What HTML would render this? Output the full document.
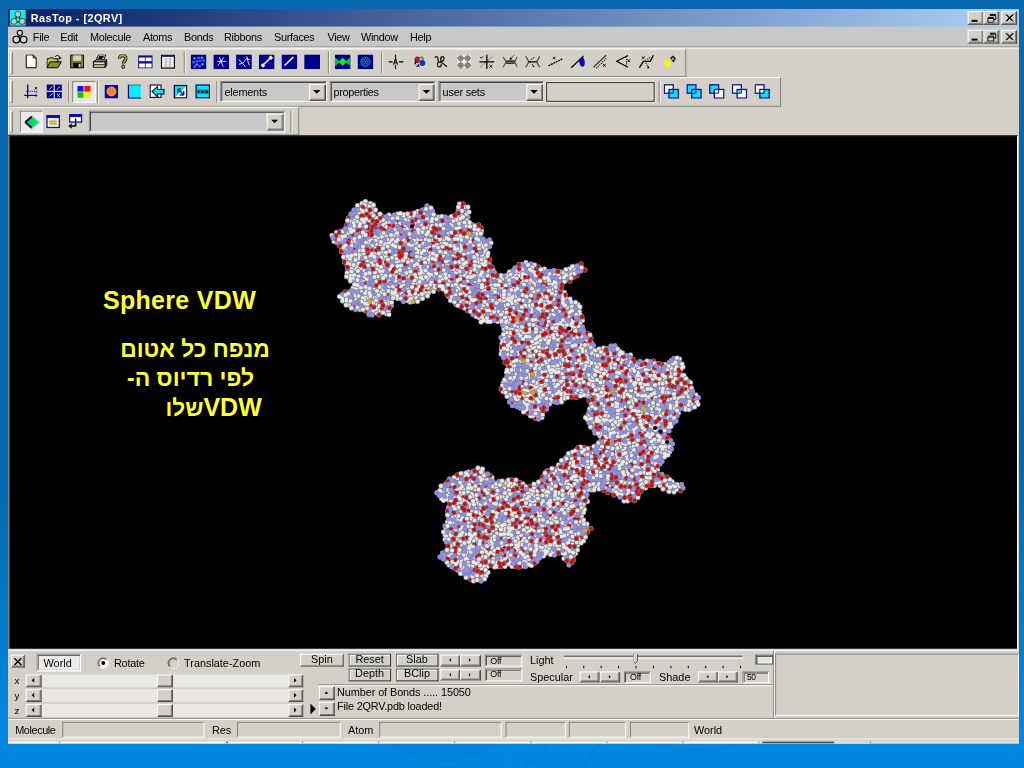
<!DOCTYPE html>
<html><head><meta charset="utf-8"><title>RasTop</title>
<style>
*{box-sizing:border-box;margin:0;padding:0}
html,body{width:1024px;height:768px;overflow:hidden}
body{position:relative;font-family:"Liberation Sans",sans-serif;font-size:11px;color:#000;
background:linear-gradient(to bottom,#0868b0 0px,#0468b0 460px,#0078c8 610px,#0085dc 700px,#0088e0 744px,#0088e0 768px)}
#win,#win *,.pg{position:absolute}
#win{left:8px;top:9px;width:1024px;height:744.2px;background:#d4d0c8;transform-origin:0 0;transform:scale(0.9873);overflow:hidden}
#win span{white-space:nowrap;font-size:11px;line-height:13px}
.cb{background:#d4d0c8;border:1px solid;border-color:#fff #404040 #404040 #fff;box-shadow:inset -1px -1px 0 #808080}
.tb{border:1px solid;border-color:#fff #808080 #808080 #fff}
.grip{border:1px solid;border-color:#fff #808080 #808080 #fff}
.sep{border-left:1px solid #808080;border-right:1px solid #fff}
.combo{background:#c8c8c8;border:1px solid;border-color:#808080 #fff #fff #808080;box-shadow:inset 1px 1px 0 #404040,inset -1px -1px 0 #d4d0c8}
.btn{background:#d4d0c8;border:1px solid;border-color:#fff #404040 #404040 #fff;box-shadow:inset -1px -1px 0 #808080}
.fbtn{background:#d4d0c8;border:1px solid;border-color:#fff #404040 #404040 #fff}
.fbtn2{background:#d4d0c8;border:1px solid;border-color:#707070 #303030 #303030 #707070;box-shadow:inset 1px 1px 0 #fff}
.sunk{border:1px solid;border-color:#808080 #fff #fff #808080}
.sunk2{border:1px solid;border-color:#808080 #fff #fff #808080;box-shadow:inset 1px 1px 0 #404040,inset -1px -1px 0 #d4d0c8}
.pressed{background:#ebe9e4;border:1px solid;border-color:#808080 #fff #fff #808080}
.ybig{color:#ffff33;font-weight:bold;white-space:nowrap}
</style></head><body>
<svg class="pg" style="left:0;top:700px" width="1024" height="68" viewBox="0 700 1024 68" fill="none"><ellipse cx="443" cy="728" rx="62" ry="34" fill="#0060b0" opacity="0.10"/><ellipse cx="455" cy="722" rx="95" ry="46" stroke="#0060b0" stroke-width="4" opacity="0.08"/><path d="M548 742q-8 16-24 24M600 742q-8 16-22 26M660 744q40 14 80 0" stroke="#0058a8" stroke-width="5" opacity="0.10"/></svg>
<div id="win"><div style="left:0px;top:0px;width:1024px;height:18px;background:linear-gradient(to right,#0a246a 0,#0a246a 30px,#a6caf0 985px,#a6caf0 100%)"><svg style="left:2px;top:1px" width="16" height="16" viewBox="0 0 16 16"><rect width="16" height="16" fill="#10f0e8"/><path d="M8 5L4 12h8z" fill="none" stroke="#004030" stroke-width="1.6"/><circle cx="8" cy="4.3" r="3" fill="#c8c4c4" stroke="#1a4040" stroke-width="0.8"/><circle cx="4" cy="11.6" r="3" fill="#c8c4c4" stroke="#1a4040" stroke-width="0.8"/><circle cx="12.4" cy="11.6" r="3" fill="#c8c4c4" stroke="#1a4040" stroke-width="0.8"/></svg><span style="left:23px;top:2.7px;color:#fff;font-weight:bold;letter-spacing:0.45px">RasTop - [2QRV]</span><div class="cb" style="left:972px;top:2px;width:16px;height:14px;"><div style="left:3px;top:8px;width:6px;height:2px;background:#000"></div></div><div class="cb" style="left:988px;top:2px;width:16px;height:14px;"><svg style="left:2px;top:1px" width="11" height="10" viewBox="0 0 11 10" ><path d="M3.5 2.5h6v4h-2M3.5 1.5h6M1.5 5.5h6v4h-6zM1.5 4.5h6" stroke="#000" fill="none"/></svg></div><div class="cb" style="left:1006px;top:2px;width:16px;height:14px;"><svg style="left:3px;top:2px" width="9" height="8" viewBox="0 0 9 8" ><path d="M0.5 0.5l7 7M7.5 0.5l-7 7M1.5 0.5l7 7M8.5 0.5l-7 7" stroke="#000" stroke-width="1" fill="none"/></svg></div></div><div style="left:0px;top:18px;width:1024px;height:20px;background:#c8c8c8"><svg style="left:4px;top:2px" width="17" height="17" viewBox="0 0 17 17"><path d="M8 5v5M5 12h6" stroke="#000" stroke-width="1" fill="none"/><circle cx="8" cy="4.2" r="2.6" fill="#d8d8d8" stroke="#000" stroke-width="1.1"/><circle cx="4.4" cy="11" r="3.4" fill="#d0d0d0" stroke="#000" stroke-width="1.2"/><circle cx="11.8" cy="11" r="3.4" fill="#d0d0d0" stroke="#000" stroke-width="1.2"/></svg><span style="left:25.2px;top:3.5px;letter-spacing:-0.3px">File</span><span style="left:52.9px;top:3.5px;letter-spacing:-0.3px">Edit</span><span style="left:83px;top:3.5px;letter-spacing:-0.3px">Molecule</span><span style="left:136.7px;top:3.5px;letter-spacing:-0.3px">Atoms</span><span style="left:178.3px;top:3.5px;letter-spacing:-0.3px">Bonds</span><span style="left:218.8px;top:3.5px;letter-spacing:-0.3px">Ribbons</span><span style="left:269.4px;top:3.5px;letter-spacing:-0.3px">Surfaces</span><span style="left:323.6px;top:3.5px;letter-spacing:-0.3px">View</span><span style="left:357.5px;top:3.5px;letter-spacing:-0.3px">Window</span><span style="left:407.2px;top:3.5px;letter-spacing:-0.3px">Help</span><div class="cb" style="left:972px;top:3px;width:16px;height:14px;"><div style="left:3px;top:8px;width:6px;height:2px;background:#000"></div></div><div class="cb" style="left:988px;top:3px;width:16px;height:14px;"><svg style="left:2px;top:1px" width="11" height="10" viewBox="0 0 11 10" ><path d="M3.5 2.5h6v4h-2M3.5 1.5h6M1.5 5.5h6v4h-6zM1.5 4.5h6" stroke="#000" fill="none"/></svg></div><div class="cb" style="left:1006px;top:3px;width:16px;height:14px;"><svg style="left:3px;top:2px" width="9" height="8" viewBox="0 0 9 8" ><path d="M0.5 0.5l7 7M7.5 0.5l-7 7M1.5 0.5l7 7M8.5 0.5l-7 7" stroke="#000" stroke-width="1" fill="none"/></svg></div></div><div style="left:0px;top:38px;width:1024px;height:1px;background:#808080"></div><div style="left:0px;top:39px;width:1024px;height:1px;background:#fff"></div><div class="tb" style="left:0px;top:40px;width:687px;height:29px;"><div class="grip" style="left:1px;top:2px;width:3px;height:22.5px;"></div><div class="sep" style="left:177px;top:2px;width:2px;height:22px;"></div><div class="sep" style="left:323px;top:2px;width:2px;height:22px;"></div><div class="sep" style="left:376.5px;top:2px;width:2px;height:22px;"></div><svg style="left:15px;top:5px" width="16" height="15" viewBox="0 0 16 15"><path d="M2.5 0.5h7l3 3v10h-10z" fill="#fff" stroke="#000"/><path d="M9.5 0.5v3h3" fill="none" stroke="#000"/></svg><svg style="left:38px;top:5px" width="16" height="15" viewBox="0 0 16 15"><path d="M0.5 13.5v-9h2l1-1h3l1 1h4v3" fill="#c8c850" stroke="#000"/><path d="M0.5 13.5l3-6h11.5l-3.5 6z" fill="#8c8c1e" stroke="#000"/><path d="M8.5 2.5c1.5-2 4-2 5 0.5l0 1" fill="none" stroke="#000"/><path d="M11.8 3.2h3.4l-1.7 2.3z" fill="#000"/></svg><svg style="left:61px;top:5px" width="16" height="15" viewBox="0 0 16 15"><rect x="1.5" y="0.5" width="13" height="13" fill="#80801a" stroke="#000"/><rect x="4" y="1" width="8" height="5.5" fill="#d4d0c8"/><rect x="4" y="8.5" width="8" height="5" fill="#000"/><rect x="9.5" y="9.5" width="2" height="3.5" fill="#d4d0c8"/></svg><svg style="left:84px;top:5px" width="16" height="15" viewBox="0 0 16 15"><path d="M4.5 5.5l2-5h7.5l-2 5z" fill="#fff" stroke="#000"/><path d="M7 2.5h5M6.5 4h4" stroke="#000" stroke-width="1.6"/><path d="M1.5 7.5l3-2h10.5l-1.5 2z" fill="#d4d0c8" stroke="#000"/><rect x="1.5" y="7.5" width="12" height="5.5" fill="#e4e2da" stroke="#000"/><path d="M13.5 7.5l1.5-2v5.5l-1.5 2z" fill="#808080" stroke="#000"/><path d="M2 10.5h11" stroke="#000"/><path d="M3 11.8h9" stroke="#c8c83c"/></svg><svg style="left:107px;top:5px" width="16" height="15" viewBox="0 0 16 15"><g transform="translate(1.6,0) scale(0.82,1)"><path d="M4 4.5c0-4.5 8-4.5 8-0.3c0 2.8-3.3 2.6-3.3 5" fill="none" stroke="#000" stroke-width="3.8"/><path d="M4 4.5c0-4.5 8-4.5 8-0.3c0 2.8-3.3 2.6-3.3 5" fill="none" stroke="#a8a828" stroke-width="2"/><circle cx="8.6" cy="12.4" r="1.9" fill="#a8a828" stroke="#000" stroke-width="0.9"/></g></svg><svg style="left:130px;top:5px" width="16" height="15" viewBox="0 0 16 15"><rect x="0.8" y="1" width="14.6" height="13" fill="#10109a"/><rect x="1.8" y="3.2" width="5.8" height="3.6" fill="#fff"/><rect x="8.4" y="3.2" width="6" height="3.6" fill="#fff"/><rect x="1.8" y="9.2" width="5.8" height="4" fill="#fff"/><rect x="8.4" y="9.2" width="6" height="4" fill="#fff"/></svg><svg style="left:153px;top:5px" width="16" height="15" viewBox="0 0 16 15"><rect x="1.5" y="0.8" width="13" height="13" fill="#fff" stroke="#000" stroke-width="1.2"/><rect x="2" y="0.5" width="12" height="2" fill="#10109a"/><path d="M3.5 4.5h9M3.5 6.5h9M3.5 8.5h9M3.5 10.5h9M3.5 12.3h9" stroke="#b8b8b8" stroke-width="0.8"/><path d="M6 3.5v10M10 3.5v10" stroke="#a0a0a0" stroke-width="0.8"/></svg><svg style="left:184px;top:5px" width="16" height="15" viewBox="0 0 16 15"><rect width="16" height="15" fill="#00008b"/><circle cx="4" cy="4" r="1.5" fill="#3c5cff"/><circle cx="11.5" cy="3.5" r="1.5" fill="#3c5cff"/><circle cx="6.5" cy="7" r="1.5" fill="#3c5cff"/><circle cx="12" cy="10" r="1.5" fill="#3c5cff"/><circle cx="6" cy="10.5" r="1.5" fill="#3c5cff"/><circle cx="3" cy="8" r="1.5" fill="#3c5cff"/><circle cx="9.5" cy="6.5" r="1.5" fill="#3c5cff"/><circle cx="4" cy="12.5" r="1.5" fill="#3c5cff"/><circle cx="13" cy="6.5" r="1.5" fill="#3c5cff"/><circle cx="8" cy="3.5" r="1.5" fill="#3c5cff"/><circle cx="9" cy="12" r="1.5" fill="#3c5cff"/><circle cx="4" cy="4" r="0.8" fill="#a0b8ff"/><circle cx="11.5" cy="3.5" r="0.8" fill="#a0b8ff"/><circle cx="6.5" cy="10.3" r="0.8" fill="#a0b8ff"/><circle cx="12" cy="10" r="0.8" fill="#a0b8ff"/></svg><svg style="left:207px;top:5px" width="16" height="15" viewBox="0 0 16 15"><rect width="16" height="15" fill="#00008b"/><path d="M4 7h9M6 2.5l4 10M10.5 3l-6 8.5" stroke="#e8e8ff" stroke-width="1"/></svg><svg style="left:230px;top:5px" width="16" height="15" viewBox="0 0 16 15"><rect width="16" height="15" fill="#00008b"/><path d="M2.5 5l4 4l5-5.5M6.5 9l-3.5 1M6.5 9l3 3.5M11 2l1 5l1.5 4M11.5 5h2.5" stroke="#e8e8ff" stroke-width="1" fill="none"/></svg><svg style="left:253px;top:5px" width="16" height="15" viewBox="0 0 16 15"><rect width="16" height="15" fill="#00008b"/><path d="M4 11l8.5-8" stroke="#f0f0ff" stroke-width="1.6"/><path d="M3 10l2.5 2.5M11 2l2.5 2.5" stroke="#f0f0ff" stroke-width="3"/></svg><svg style="left:276px;top:5px" width="16" height="15" viewBox="0 0 16 15"><rect width="16" height="15" fill="#00008b"/><path d="M3.5 11l8-8" stroke="#f0f0ff" stroke-width="1.5" stroke-linecap="round"/></svg><svg style="left:299px;top:5px" width="16" height="15" viewBox="0 0 16 15"><rect width="16" height="15" fill="#00008b"/></svg><svg style="left:330px;top:5px" width="16" height="15" viewBox="0 0 16 15"><rect width="16" height="15" fill="#00008b"/><path d="M0 3l5.5 4.5l-5.5 4.5zM16 3l-5.5 4.5l5.5 4.5z" fill="#00c828"/><path d="M8 3.5l4 4l-4 4l-4-4z" fill="#10f020"/></svg><svg style="left:353px;top:5px" width="16" height="15" viewBox="0 0 16 15"><rect width="16" height="15" fill="#00008b"/><circle cx="8" cy="7.5" r="5.5" fill="#0a2a8c"/><circle cx="8.0" cy="7.5" r="0.8" fill="#2a8a9a"/><circle cx="10.2" cy="7.5" r="0.8" fill="#2a8a9a"/><circle cx="9.1" cy="9.4" r="0.8" fill="#2a8a9a"/><circle cx="6.9" cy="9.4" r="0.8" fill="#2a8a9a"/><circle cx="5.8" cy="7.5" r="0.8" fill="#2a8a9a"/><circle cx="6.9" cy="5.6" r="0.8" fill="#2a8a9a"/><circle cx="9.1" cy="5.6" r="0.8" fill="#2a8a9a"/><circle cx="12.4" cy="7.5" r="0.8" fill="#2a8a9a"/><circle cx="11.8" cy="9.7" r="0.8" fill="#2a8a9a"/><circle cx="10.2" cy="11.3" r="0.8" fill="#2a8a9a"/><circle cx="8.0" cy="11.9" r="0.8" fill="#2a8a9a"/><circle cx="5.8" cy="11.3" r="0.8" fill="#2a8a9a"/><circle cx="4.2" cy="9.7" r="0.8" fill="#2a8a9a"/><circle cx="3.6" cy="7.5" r="0.8" fill="#2a8a9a"/><circle cx="4.2" cy="5.3" r="0.8" fill="#2a8a9a"/><circle cx="5.8" cy="3.7" r="0.8" fill="#2a8a9a"/><circle cx="8.0" cy="3.1" r="0.8" fill="#2a8a9a"/><circle cx="10.2" cy="3.7" r="0.8" fill="#2a8a9a"/><circle cx="11.8" cy="5.3" r="0.8" fill="#2a8a9a"/></svg><svg style="left:384px;top:5px" width="16" height="15" viewBox="0 0 16 15"><path d="M0.5 7.5h4M11 7.5h4.5M7.5 0v3.5M7.5 11v4" stroke="#000" stroke-width="1.2"/><path d="M5.5 10.5l2-6.5l2 6.5M6 8.5h3.5" stroke="#000" stroke-width="1.1" fill="none"/></svg><svg style="left:407px;top:5px" width="16" height="15" viewBox="0 0 16 15"><ellipse cx="6.5" cy="5.5" rx="2.3" ry="3" fill="#e01010" stroke="#401010" stroke-width="0.8"/><circle cx="10.5" cy="4.8" r="2.3" fill="#a8b0a8" stroke="#304030" stroke-width="0.8"/><circle cx="11.8" cy="8.8" r="2.5" fill="#1030e0" stroke="#0000a0" stroke-width="0.8"/><path d="M5 12.5h4l-1-3z" fill="#101080"/><path d="M4.2 10l1-3.5" stroke="#000" stroke-width="1.3"/></svg><svg style="left:430px;top:5px" width="16" height="15" viewBox="0 0 16 15"><path d="M1.5 3.5c1-2.5 3.5-1 3 1.5c-0.5 2.5 2 4 4.5 2c2.5-2 2-5.5-0.5-4.5c-2.5 1-1 6 2 7.5l3 2.5M5 8c-1.5 1-1.5 4 0.5 4.5c2 0.5 3-1 2-3" fill="none" stroke="#101010" stroke-width="1.3"/></svg><svg style="left:453px;top:5px" width="16" height="15" viewBox="0 0 16 15"><rect x="1" y="1" width="14" height="13" fill="#fff" opacity="0.55"/><rect x="2" y="1.5" width="5" height="5" rx="1" fill="#808088"/><path d="M4.5 0.5v7M1 4h7" stroke="#808088" stroke-width="1.5"/><rect x="9" y="1.5" width="5" height="5" rx="1" fill="#808088"/><path d="M11.5 0.5v7M8 4h7" stroke="#808088" stroke-width="1.5"/><rect x="2" y="8.5" width="5" height="5" rx="1" fill="#808088"/><path d="M4.5 7.5v7M1 11h7" stroke="#808088" stroke-width="1.5"/><rect x="9" y="8.5" width="5" height="5" rx="1" fill="#808088"/><path d="M11.5 7.5v7M8 11h7" stroke="#808088" stroke-width="1.5"/></svg><svg style="left:476px;top:5px" width="16" height="15" viewBox="0 0 16 15"><path d="M1 13.5l13-12" stroke="#a0a878" stroke-width="1.2"/><path d="M0.5 7.5h15M8 0v15" stroke="#000" stroke-width="1.3"/><path d="M1 2.5l1.5 1.5l1.5-2M10.5 10.5l3 3M13.5 10.5l-3 3" stroke="#000" stroke-width="0.9" fill="none"/></svg><svg style="left:499px;top:5px" width="16" height="15" viewBox="0 0 16 15"><path d="M1.5 2.5l3 5l-3 5.5M16 2.5l-3 5l3 5.5" stroke="#606060" stroke-width="1.4" fill="none"/><path d="M4.5 6.8h8.5M4.5 8.8h8.5" stroke="#000" stroke-width="1.1"/><path d="M13 0.5l-4 4" stroke="#404040" stroke-width="1"/><path d="M8 5.5l3-0.5l-2.5-2.5z" fill="#000"/></svg><svg style="left:522px;top:5px" width="16" height="15" viewBox="0 0 16 15"><path d="M1.5 2l3 5.5l-3 5.5M15.5 2l-3 5.5l3 5.5" stroke="#404040" stroke-width="1.2" fill="none"/><path d="M4.5 7.5h8" stroke="#000" stroke-width="1.2"/><path d="M7 5l3-2M8 10l1.5 2" stroke="#000" stroke-width="1.1" stroke-dasharray="1.2 1"/><circle cx="6" cy="7.5" r="1" fill="#000"/><path d="M8.5 11l2 1.5l-2 0.5z" fill="#000"/></svg><svg style="left:545px;top:5px" width="16" height="15" viewBox="0 0 16 15"><path d="M1.5 11.5l14-7" stroke="#000" stroke-width="1.3" stroke-dasharray="2 0.7"/><path d="M6 2.5l2.5 2.5M8.5 2.5l-2.5 2.5" stroke="#000" stroke-width="0.9"/></svg><svg style="left:568px;top:5px" width="16" height="15" viewBox="0 0 16 15"><path d="M1.5 13.5l12.5-12" stroke="#000" stroke-width="1.3"/><path d="M9 6l4-3.5c2 2 3 6 1.5 9c-1 1.5-3 1-4-0.5z" fill="#0808b0"/></svg><svg style="left:591px;top:5px" width="16" height="15" viewBox="0 0 16 15"><path d="M1 13l13-12.5" stroke="#404040" stroke-width="1.4"/><path d="M4 14l10-10" stroke="#000" stroke-width="1.2" stroke-dasharray="1 1.2"/><path d="M10.5 9.5l3 3M13.5 9.5l-3 3" stroke="#000" stroke-width="1"/></svg><svg style="left:614px;top:5px" width="16" height="15" viewBox="0 0 16 15"><path d="M13 1l-11.5 6l11.5 6" stroke="#000" stroke-width="1.2" fill="none"/><path d="M10.5 2.5c1.5 3 1.5 6.5 0 9.5" stroke="#000" stroke-width="1" fill="none" stroke-dasharray="1.2 1"/><path d="M12.5 5l2.5 3M15 5l-2.5 3" stroke="#000" stroke-width="0.9"/></svg><svg style="left:637px;top:5px" width="16" height="15" viewBox="0 0 16 15"><path d="M1.5 13.5l4-6.5h7l3.5-6.5" stroke="#000" stroke-width="1.4" fill="none"/><path d="M4 2l3 3M7 2l-3 3" stroke="#000" stroke-width="0.9"/><path d="M8 8.5l2.5 4.5M9.5 5l3-2" stroke="#000" stroke-width="1.1" stroke-dasharray="1.2 1"/><circle cx="10.5" cy="13.2" r="1" fill="#000"/></svg><svg style="left:660px;top:5px" width="16" height="15" viewBox="0 0 16 15"><circle cx="7" cy="9" r="4.6" fill="#e4e448" opacity="0.7"/><circle cx="6.8" cy="9.2" r="3.3" fill="#f0f030"/><path d="M9.5 3.5l3-2.5l3 3l-2.5 4.5z" fill="#202020"/><circle cx="12.3" cy="4.5" r="1.2" fill="#b0b0b0"/></svg></div><div class="tb" style="left:0px;top:69px;width:783px;height:30px;"><div style="left:0px;top:1px;width:780px;height:28px;"><div class="grip" style="left:1px;top:1px;width:3px;height:22.5px;"></div><div class="sep" style="left:60px;top:2px;width:2px;height:22px;"></div><div class="sep" style="left:89px;top:2px;width:2px;height:22px;"></div><div class="sep" style="left:210px;top:2px;width:2px;height:22px;"></div><div class="sep" style="left:657.5px;top:2px;width:2px;height:22px;"></div><div class="pressed" style="left:64px;top:2px;width:23.5px;height:22px;background:#e9e7e3"></div><div class="combo" style="left:214.3px;top:2px;width:107.5px;height:20.5px;"><span style="left:3px;top:4px;letter-spacing:-0.2px">elements</span><div class="cb" style="left:89px;top:1.5px;width:16.5px;height:17px;"><svg style="left:0px;top:0px" width="15" height="15" viewBox="0 0 15 15" ><polygon points="3,5.1 10.6,5.1 6.8,8.9" fill="#000"/></svg></div></div><div class="combo" style="left:324.6px;top:2px;width:107.5px;height:20.5px;"><span style="left:3px;top:4px;letter-spacing:-0.3px">properties</span><div class="cb" style="left:89px;top:1.5px;width:16.5px;height:17px;"><svg style="left:0px;top:0px" width="15" height="15" viewBox="0 0 15 15" ><polygon points="3,5.1 10.6,5.1 6.8,8.9" fill="#000"/></svg></div></div><div class="combo" style="left:435.2px;top:2px;width:106.5px;height:20.5px;"><span style="left:3px;top:4px;letter-spacing:-0.2px">user sets</span><div class="cb" style="left:88px;top:1.5px;width:16.5px;height:17px;"><svg style="left:0px;top:0px" width="15" height="15" viewBox="0 0 15 15" ><polygon points="3,5.1 10.6,5.1 6.8,8.9" fill="#000"/></svg></div></div><div style="left:544px;top:2.5px;width:109.8px;height:20.5px;background:#d4d0c8;border:1px solid #303030;box-shadow:0 0 0 1px #e8e6e0"></div><svg style="left:15px;top:5px" width="16" height="15" viewBox="0 0 16 15"><path d="M4 0.5v14M0.5 11.5h13" stroke="#000080" stroke-width="1.3"/><rect x="4.5" y="7" width="9" height="4" fill="#c8c8f0" opacity="0.6"/><path d="M2.5 7.4h11" stroke="#000080" stroke-width="1" stroke-dasharray="1 1"/><path d="M11 3l2.5 2.5M13.5 3l-2.5 2.5" stroke="#000" stroke-width="0.9"/><path d="M12.5 8v5" stroke="#000080" stroke-width="0.8" stroke-dasharray="1 1"/></svg><svg style="left:38px;top:5px" width="16" height="15" viewBox="0 0 16 15"><rect x="0" y="0.5" width="15.5" height="14" fill="#000080"/><path d="M0 7.5h16M7.8 0v15" stroke="#e0e0ff" stroke-width="1.2"/><path d="M3 5l3-2.5M10.5 5.5l3-3M3 12.5l3-3" stroke="#e0e0ff" stroke-width="1"/><path d="M10.5 10l3 3M13.5 10l-3 3" stroke="#e0e0ff" stroke-width="0.9"/></svg><svg style="left:69.3px;top:7.3px" width="16" height="15" viewBox="0 0 16 15"><rect x="0.3" y="0" width="6.2" height="5.6" fill="#1010f0"/><rect x="7.3" y="0" width="6.2" height="5.6" fill="#f01010"/><rect x="0.3" y="6.3" width="6.2" height="5.6" fill="#10c810"/><rect x="7.3" y="6.3" width="6.2" height="5.6" fill="#f8f010"/></svg><svg style="left:96px;top:5px" width="16" height="15" viewBox="0 0 16 15"><rect x="1" y="1" width="13.5" height="13.5" fill="#0000b0"/><circle cx="7.8" cy="7.5" r="4.6" fill="#ff8020" stroke="#ffb080" stroke-width="0.8"/></svg><svg style="left:119px;top:5px" width="16" height="15" viewBox="0 0 16 15"><rect x="1.5" y="1" width="13" height="13" fill="#00f0ff"/><path d="M1.5 1h13" stroke="#2050a0" stroke-width="0.8"/><path d="M2 1v13.2h12.8" stroke="#000080" stroke-width="1.2" fill="none"/></svg><svg style="left:142px;top:5px" width="16" height="15" viewBox="0 0 16 15"><rect x="1" y="1" width="11" height="12.5" fill="#fff" stroke="#000040" stroke-width="1.1"/><path d="M3 7.5l5.5-5v3h6.5v4.5h-6.5v3z" fill="#00e8f8" stroke="#000040" stroke-width="1.1"/></svg><svg style="left:165px;top:5px" width="16" height="15" viewBox="0 0 16 15"><rect x="2" y="1" width="13" height="13" fill="#00e8f8"/><path d="M2 14l13-13v13z" fill="#fff"/><path d="M2 14l13-13" stroke="#30b090" stroke-width="0.8"/><rect x="2.5" y="1.5" width="12.5" height="12.5" fill="none" stroke="#000040" stroke-width="1.2"/><path d="M6 5l6 6M12 11v-4M12 11h-4M6 5h3.5M6 5v3.5" stroke="#0030a0" stroke-width="1.5" fill="none"/></svg><svg style="left:188px;top:5px" width="16" height="15" viewBox="0 0 16 15"><rect x="1.5" y="1" width="13.5" height="13" fill="#00e8f8" stroke="#000080" stroke-width="1.2"/><rect x="2" y="5.5" width="12.5" height="4.5" fill="#208898"/><path d="M3 7.8h2M6.5 7.8h3M11 7.8h2.5" stroke="#001030" stroke-width="2.2"/></svg><svg style="left:663px;top:5px" width="16" height="15" viewBox="0 0 16 15"><rect x="0.8" y="0.8" width="9" height="8.5" fill="#fff" stroke="#101080" stroke-width="1.3"/><rect x="5.5" y="5.5" width="9.5" height="8.7" fill="#10e0ff" stroke="#101080" stroke-width="1.3"/><path d="M5.5 9.3h4.3v-3.8" stroke="#101080" stroke-width="1" fill="none"/></svg><svg style="left:686px;top:5px" width="16" height="15" viewBox="0 0 16 15"><rect x="0.8" y="0.8" width="9" height="8.5" fill="#10e0ff" stroke="#101080" stroke-width="1.3"/><rect x="5.5" y="5.5" width="9.5" height="8.7" fill="#10e0ff" stroke="#101080" stroke-width="1.3"/><path d="M5.5 9.3h4.3v-3.8" stroke="#101080" stroke-width="1" fill="none"/></svg><svg style="left:709px;top:5px" width="16" height="15" viewBox="0 0 16 15"><rect x="0.8" y="0.8" width="9" height="8.5" fill="#10e0ff" stroke="#101080" stroke-width="1.3"/><rect x="5.5" y="5.5" width="9.5" height="8.7" fill="#fff" stroke="#101080" stroke-width="1.3"/><path d="M5.5 9.3h4.3v-3.8" stroke="#101080" stroke-width="1" fill="none"/></svg><svg style="left:732px;top:5px" width="16" height="15" viewBox="0 0 16 15"><rect x="0.8" y="0.8" width="9" height="8.5" fill="#fff" stroke="#101080" stroke-width="1.3"/><rect x="5.5" y="5.5" width="9.5" height="8.7" fill="#fff" stroke="#101080" stroke-width="1.3"/><rect x="6.2" y="6.2" width="3" height="2.5" fill="#10e0ff"/><path d="M5.5 9.3h4.3v-3.8" stroke="#101080" stroke-width="1" fill="none"/></svg><svg style="left:755px;top:5px" width="16" height="15" viewBox="0 0 16 15"><rect x="0.8" y="0.8" width="9" height="8.5" fill="#fff" stroke="#101080" stroke-width="1.3"/><rect x="5.5" y="5.5" width="9.5" height="8.7" fill="#10e0ff" stroke="#101080" stroke-width="1.3"/><rect x="6.2" y="6.2" width="3" height="2.5" fill="#fff"/><path d="M5.5 9.3h4.3v-3.8" stroke="#101080" stroke-width="1" fill="none"/></svg></div></div><div class="tb" style="left:0px;top:99px;width:295px;height:29px;"><div style="left:0px;top:1px;width:290px;height:28px;"><div class="grip" style="left:1px;top:1.5px;width:3px;height:22px;"></div><div class="pressed" style="left:11.3px;top:1.7px;width:23px;height:22.3px;"></div><div class="combo" style="left:81px;top:2px;width:198.5px;height:21.5px;"><div class="cb" style="left:179px;top:2px;width:17px;height:17px;"><svg style="left:0px;top:0px" width="15" height="15" viewBox="0 0 15 15" ><polygon points="3.5,5.25 10.5,5.25 7,8.75" fill="#000"/></svg></div></div><div class="sep" style="left:285px;top:2px;width:2px;height:22px;"></div><svg style="left:16px;top:6.8px" width="16" height="15" viewBox="0 0 16 15"><path transform="scale(0.97,0.9)" d="M7.5 1l7 6.5l-7 6.5l-7-6.5z" fill="#00e040"/><path transform="scale(0.97,0.9)" d="M7.5 1l-7 6.5l7 6.5" stroke="#000060" stroke-width="2.2" fill="none"/><path transform="scale(0.97,0.9)" d="M7.5 1l7 6.5l-7 6.5" stroke="#70c0d0" stroke-width="1.8" fill="none"/></svg><svg style="left:37px;top:6px" width="16" height="15" viewBox="0 0 16 15"><rect x="1.5" y="1" width="12.5" height="12" fill="#fff" stroke="#1010a0" stroke-width="1.3"/><rect x="1" y="0.5" width="13.5" height="3" fill="#1010a0"/><rect x="3.5" y="5" width="8.5" height="6" fill="#e8e080"/><path d="M3.5 7h8.5M3.5 9h8.5M6.5 5v6M9.5 5v6" stroke="#a0a060" stroke-width="0.7"/></svg><svg style="left:59.3px;top:4.8px" width="16" height="16" viewBox="0 0 16 16"><rect x="2.5" y="1" width="12" height="7.5" fill="#fff" stroke="#1010a0" stroke-width="1.3"/><rect x="2" y="0.5" width="13" height="3" fill="#1010a0"/><path d="M8.5 5v7.5h-5.5" stroke="#000" stroke-width="1.4" fill="none"/><path d="M1 12.5l3.5-2.8v5.6z" fill="#000"/></svg></div></div><div style="left:0px;top:128.3px;width:1023px;height:520.7px;background:#000;border:1px solid;border-color:#303030 #fff #fff #808080;box-shadow:inset 1px 0 0 #404040"></div><div style="left:0px;top:649px;width:1024px;height:1px;background:#fff"></div><div class="btn" style="left:3px;top:654px;width:14px;height:13px;"><svg style="left:1px;top:1px" width="11" height="10" viewBox="0 0 11 10" ><path d="M1.5 1.5l7 7M8.5 1.5l-7 7" stroke="#000" stroke-width="1.4" fill="none"/></svg></div><div class="sunk2" style="left:29px;top:652.5px;width:45px;height:18px;background:#ecebe8"><span style="left:6px;top:2px;">World</span></div><svg style="left:90px;top:656px" width="13" height="13" viewBox="0 0 13 13" ><circle cx="6.5" cy="6.5" r="5.5" fill="#fff" stroke="#808080"/><path d="M2.6 10.4A5.5 5.5 0 0 0 10.4 2.6" stroke="#fff" fill="none"/><path d="M3.3 9.7A4.5 4.5 0 0 1 9.7 3.3" stroke="#404040" fill="none"/><circle cx="6.5" cy="6.5" r="2" fill="#000"/></svg><span style="left:107.4px;top:656px;letter-spacing:-0.25px">Rotate</span><svg style="left:161px;top:656px" width="13" height="13" viewBox="0 0 13 13" ><circle cx="6.5" cy="6.5" r="5.5" fill="#d4d0c8" stroke="#808080"/><path d="M2.6 10.4A5.5 5.5 0 0 0 10.4 2.6" stroke="#fff" fill="none"/><path d="M3.3 9.7A4.5 4.5 0 0 1 9.7 3.3" stroke="#404040" fill="none"/></svg><span style="left:178.3px;top:656px;">Translate-Zoom</span><span style="left:6.5px;top:673.8px;font-size:10px">x</span><div style="left:18px;top:673.8px;width:280px;height:13px;background:#eae8e4"></div><div class="btn" style="left:18px;top:673.8px;width:15.5px;height:13px;"><svg style="left:0px;top:0px" width="13.5" height="11" viewBox="0 0 13.5 11" ><polygon points="7.5,2.5 7.5,7.5 5,5" fill="#000"/></svg></div><div class="btn" style="left:283.5px;top:673.8px;width:15px;height:13px;"><svg style="left:0px;top:0px" width="13" height="11" viewBox="0 0 13 11" ><polygon points="4.75,2.5 4.75,7.5 7.25,5" fill="#000"/></svg></div><div class="btn" style="left:151px;top:673.8px;width:16px;height:13px;"></div><span style="left:6.5px;top:688.5px;font-size:10px">y</span><div style="left:18px;top:688.5px;width:280px;height:13px;background:#eae8e4"></div><div class="btn" style="left:18px;top:688.5px;width:15.5px;height:13px;"><svg style="left:0px;top:0px" width="13.5" height="11" viewBox="0 0 13.5 11" ><polygon points="7.5,2.5 7.5,7.5 5,5" fill="#000"/></svg></div><div class="btn" style="left:283.5px;top:688.5px;width:15px;height:13px;"><svg style="left:0px;top:0px" width="13" height="11" viewBox="0 0 13 11" ><polygon points="4.75,2.5 4.75,7.5 7.25,5" fill="#000"/></svg></div><div class="btn" style="left:151px;top:688.5px;width:16px;height:13px;"></div><span style="left:6.5px;top:703.5px;font-size:10px">z</span><div style="left:18px;top:703.5px;width:280px;height:13px;background:#eae8e4"></div><div class="btn" style="left:18px;top:703.5px;width:15.5px;height:13px;"><svg style="left:0px;top:0px" width="13.5" height="11" viewBox="0 0 13.5 11" ><polygon points="7.5,2.5 7.5,7.5 5,5" fill="#000"/></svg></div><div class="btn" style="left:283.5px;top:703.5px;width:15px;height:13px;"><svg style="left:0px;top:0px" width="13" height="11" viewBox="0 0 13 11" ><polygon points="4.75,2.5 4.75,7.5 7.25,5" fill="#000"/></svg></div><div class="btn" style="left:151px;top:703.5px;width:16px;height:13px;"></div><div class="fbtn" style="left:296px;top:652.5px;width:44px;height:13.5px;text-align:center"><span style="position:static;line-height:11.5px;display:block;margin-top:-1px">Spin</span></div><div class="fbtn2" style="left:345px;top:652.5px;width:42.5px;height:13.5px;text-align:center"><span style="position:static;line-height:11.5px;display:block;margin-top:-1px">Reset</span></div><div class="fbtn2" style="left:345px;top:667.5px;width:42.5px;height:13px;text-align:center"><span style="position:static;line-height:11px;display:block;margin-top:-1px">Depth</span></div><div class="fbtn2" style="left:393px;top:652.5px;width:42.5px;height:13.5px;text-align:center"><span style="position:static;line-height:11.5px;display:block;margin-top:-1px">Slab</span></div><div class="fbtn2" style="left:393px;top:667.5px;width:42.5px;height:13px;text-align:center"><span style="position:static;line-height:11px;display:block;margin-top:-1px">BClip</span></div><div class="btn" style="left:437.5px;top:654px;width:20.5px;height:11.5px;"><svg style="left:0px;top:0px" width="18.5" height="9.5" viewBox="0 0 18.5 9.5" ><polygon points="9.65,2.45 9.65,6.05 7.85,4.25" fill="#000"/></svg></div><div class="btn" style="left:458px;top:654px;width:20.5px;height:11.5px;"><svg style="left:0px;top:0px" width="18.5" height="9.5" viewBox="0 0 18.5 9.5" ><polygon points="7.85,2.45 7.85,6.05 9.65,4.25" fill="#000"/></svg></div><div class="sunk2" style="left:482.5px;top:653.5px;width:38px;height:12.5px;"><span style="left:5px;top:-1px;font-size:9px;letter-spacing:-0.2px;color:#000">Off</span></div><div class="btn" style="left:437.5px;top:668.7px;width:20.5px;height:11.5px;"><svg style="left:0px;top:0px" width="18.5" height="9.5" viewBox="0 0 18.5 9.5" ><polygon points="9.65,2.45 9.65,6.05 7.85,4.25" fill="#000"/></svg></div><div class="btn" style="left:458px;top:668.7px;width:20.5px;height:11.5px;"><svg style="left:0px;top:0px" width="18.5" height="9.5" viewBox="0 0 18.5 9.5" ><polygon points="7.85,2.45 7.85,6.05 9.65,4.25" fill="#000"/></svg></div><div class="sunk2" style="left:482.5px;top:668.2px;width:38px;height:12.5px;"><span style="left:5px;top:-1px;font-size:9px;letter-spacing:-0.2px;color:#000">Off</span></div><span style="left:528.7px;top:653px;">Light</span><span style="left:528.7px;top:671px;">Specular</span><span style="left:659.4px;top:671px;">Shade</span><div style="left:563px;top:655.3px;width:181px;height:1.2px;background:#484848"></div><div style="left:563px;top:656.5px;width:181.5px;height:1.2px;background:#fff"></div><svg style="left:565.3px;top:665px" width="180" height="3" viewBox="0 0 180 3" ><rect x="0" y="0" width="1" height="3" fill="#000"/><rect x="17.65" y="0" width="1" height="3" fill="#000"/><rect x="35.3" y="0" width="1" height="3" fill="#000"/><rect x="52.95" y="0" width="1" height="3" fill="#000"/><rect x="70.6" y="0" width="1" height="3" fill="#000"/><rect x="88.25" y="0" width="1" height="3" fill="#000"/><rect x="105.9" y="0" width="1" height="3" fill="#000"/><rect x="123.55" y="0" width="1" height="3" fill="#000"/><rect x="141.2" y="0" width="1" height="3" fill="#000"/><rect x="158.85" y="0" width="1" height="3" fill="#000"/><rect x="176.5" y="0" width="1" height="3" fill="#000"/></svg><svg style="left:633px;top:653px" width="6" height="11" viewBox="0 0 6 11" ><path d="M0.5 0.5h4v7l-2 2.5l-2-2.5z" fill="#d4d0c8" stroke="#404040" stroke-width="0.8"/><path d="M1 8V1h3" stroke="#fff" fill="none" stroke-width="0.8"/></svg><div style="left:756.5px;top:653.5px;width:18.5px;height:10.5px;background:#e4e4e4;border:1px solid #505050;box-shadow:inset 1px 1px 0 #303030,inset -1px -1px 0 #fff"></div><div class="btn" style="left:579px;top:670.5px;width:20px;height:11.5px;"><svg style="left:0px;top:0px" width="18" height="9.5" viewBox="0 0 18 9.5" ><polygon points="9.4,2.45 9.4,6.05 7.6,4.25" fill="#000"/></svg></div><div class="btn" style="left:599.5px;top:670.5px;width:20px;height:11.5px;"><svg style="left:0px;top:0px" width="18" height="9.5" viewBox="0 0 18 9.5" ><polygon points="7.6,2.45 7.6,6.05 9.4,4.25" fill="#000"/></svg></div><div class="btn" style="left:698.5px;top:670.5px;width:20px;height:11.5px;"><svg style="left:0px;top:0px" width="18" height="9.5" viewBox="0 0 18 9.5" ><polygon points="9.4,2.45 9.4,6.05 7.6,4.25" fill="#000"/></svg></div><div class="btn" style="left:719px;top:670.5px;width:20px;height:11.5px;"><svg style="left:0px;top:0px" width="18" height="9.5" viewBox="0 0 18 9.5" ><polygon points="7.6,2.45 7.6,6.05 9.4,4.25" fill="#000"/></svg></div><div class="sunk2" style="left:624px;top:670.5px;width:27px;height:12.5px;"><span style="left:5px;top:-1px;font-size:9px;letter-spacing:-0.2px;color:#000">Off</span></div><div class="sunk2" style="left:743.5px;top:670.5px;width:27px;height:12.5px;"><span style="left:4px;top:-1px;font-size:8.5px;letter-spacing:-0.5px;color:#000">50</span></div><div style="left:314px;top:684px;width:461px;height:1px;background:#808080"></div><div style="left:314px;top:685px;width:461px;height:1px;background:#fff"></div><div class="btn" style="left:314.5px;top:686px;width:16px;height:14px;"><svg style="left:0px;top:0px" width="14" height="12" viewBox="0 0 14 12" ><polygon points="4.3,6.6 8.7,6.6 6.5,4.4" fill="#000"/></svg></div><div class="btn" style="left:314.5px;top:701.5px;width:16px;height:14px;"><svg style="left:0px;top:0px" width="14" height="12" viewBox="0 0 14 12" ><polygon points="4.3,4.4 8.7,4.4 6.5,6.6" fill="#000"/></svg></div><svg style="left:305.5px;top:703px" width="7" height="13" viewBox="0 0 7 13" ><polygon points="0.25,0.5 0.25,11.5 5.75,6" fill="#000"/></svg><span style="left:333.3px;top:686.3px;letter-spacing:-0.08px">Number of Bonds ..... 15050</span><span style="left:333.3px;top:700.3px;letter-spacing:-0.19px">File 2QRV.pdb loaded!</span><div style="left:774.5px;top:650px;width:1px;height:68px;background:#808080"></div><div style="left:775.5px;top:650px;width:1px;height:68px;background:#fff"></div><div class="sunk" style="left:777px;top:653px;width:247px;height:63px;"></div><div style="left:0px;top:718px;width:1024px;height:1px;background:#808080"></div><div style="left:0px;top:719px;width:1024px;height:1px;background:#fff"></div><span style="left:7.3px;top:724px;letter-spacing:-0.4px">Molecule</span><span style="left:206.6px;top:724px;">Res</span><span style="left:344.4px;top:724px;">Atom</span><span style="left:694.8px;top:724px;">World</span><div class="sunk" style="left:54.7px;top:722px;width:144.8px;height:16px;"></div><div class="sunk" style="left:232px;top:722px;width:105.3px;height:16px;"></div><div class="sunk" style="left:375.8px;top:722px;width:124.6px;height:16px;"></div><div class="sunk" style="left:504.4px;top:722px;width:60.8px;height:16px;"></div><div class="sunk" style="left:568.2px;top:722px;width:57.8px;height:16px;"></div><div class="sunk" style="left:630px;top:722px;width:59.8px;height:16px;"></div><div style="left:0px;top:739.3px;width:1024px;height:1.1px;background:#fff"></div><div style="left:0px;top:740.4px;width:1024px;height:1.7px;background:#d4d0c8"></div><div style="left:0px;top:742.1px;width:1024px;height:3px;background:#fff"></div><div style="left:52.1689px;top:741.6px;width:1.2px;height:2.2px;background:#707070"></div><div style="left:221.317px;top:741.6px;width:1.2px;height:2.2px;background:#707070"></div><div style="left:298.295px;top:741.6px;width:1.2px;height:2.2px;background:#707070"></div><div style="left:374.766px;top:741.6px;width:1.2px;height:2.2px;background:#707070"></div><div style="left:451.743px;top:741.6px;width:1.2px;height:2.2px;background:#707070"></div><div style="left:528.721px;top:741.6px;width:1.2px;height:2.2px;background:#707070"></div><div style="left:605.699px;top:741.6px;width:1.2px;height:2.2px;background:#707070"></div><div style="left:683.183px;top:741.6px;width:1.2px;height:2.2px;background:#707070"></div><div style="left:759.654px;top:741.6px;width:1.2px;height:2.2px;background:#707070"></div><div style="left:872.588px;top:741.6px;width:1.2px;height:2.2px;background:#707070"></div><div style="left:763.6px;top:742.4px;width:73.5px;height:1.5px;background:#505050"></div><div style="left:837px;top:742.2px;width:36px;height:2.5px;background:#dcd8d0"></div><div style="left:874px;top:742.8px;width:1147px;height:1.2px;background:#a0a0a0"></div></div>
<svg class="pg" style="left:0;top:0" width="1024" height="768" viewBox="0 0 1024 768" fill="none" stroke-linecap="round"><g filter="url(#bl)"><polygon points="331,236 338,230 345,227 347,217 352,210 357,205 364,200 372,202 375,208 374,213 385,215 400,213 415,212 421,208 427,206 433,210 437,215 455,216 456,208 460,203 466,205 469,211 467,220 475,223 482,227 481,236 491,241 487,251 490,263 495,275 505,274 512,268 520,262 528,262 537,266 547,269 562,270 572,266 580,263 585,268 578,275 570,280 561,282 565,295 580,305 583,317 580,325 590,335 595,350 605,347 616,343 620,352 630,355 635,362 650,359 665,364 672,358 678,356 682,365 680,372 690,380 692,390 699,397 696,407 688,411 681,406 679,412 673,425 664,434 672,441 670,453 661,462 657,470 667,478 681,484 683,490 670,492 657,485 645,487 636,500 623,500 614,494 598,489 586,492 587,503 582,516 590,528 582,541 576,550 570,566 561,553 542,556 532,567 511,566 489,566 486,578 473,583 454,569 439,556 447,547 443,531 447,516 448,503 434,494 443,483 457,473 470,470 481,467 495,481 514,478 528,487 540,481 545,469 557,466 564,456 576,447 592,447 601,437 592,431 585,416 590,402 587,395 565,400 547,405 541,420 530,417 512,405 500,386 507,370 500,350 502,332 500,322 482,322 470,312 456,307 450,300 445,289 435,290 420,301 402,302 392,297 390,314 370,315 357,310 347,306 339,296 355,285 347,280 344,262 342,252 335,243" fill="#9a98a4"/><path d="M370.5 203.5h0m-13 2h0m69.5 0.5h0m39.5 4h0m-105.5 5h0m3 0.5h0m8-2.5h0m4.5 2h0m12.5 0h0m8.5-1h0m3-0.5h0m4 1h0m12 0.5h0m1-3.5h0m11 0h0m2 2h0m30.5 1h0m-110 6.5h0m3-2h0m3.5 2.5h0m11.5-1h0m11.5 0.5h0m2-4.5h0m16 4.5h0m5-3.5h0m5.5 3h0m7-0.5h0m3-1.5h0m8 0.5h0m4.5 2.5h0m1-3h0m19-2h0m4.5 3.5h0m1-3h0m2 3.5h0m3 1h0m1.5-2h0m3.5 1h0m1-3.5h0m-111 9h0m6 0.5h0m5-2h0m4.5-1.5h0m9 5h0m2-3h0m3-2h0m6.5 2.5h0m2.5-2.5h0m7 3.5h0m10.5-1.5h0m2.5 2h0m1-3.5h0m11-1.5h0m1 4.5h0m14.5-3h0m3.5 1.5h0m4.5-0.5h0m1 2.5h0m3-3h0m23.5 1h0m-142 7.5h0m2.5 0h0m4-1h0m3 0.5h0m11-1h0m3-2h0m0 4.5h0m6.5-2.5h0m1.5-2.5h0m9 0h0m3.5 4h0m14.5-3h0m9.5 0h0m1 3h0m4-1.5h0m11-0.5h0m2 1.5h0m15.5 0h0m2-2.5h0m18.5 3h0m13.5-2.5h0m2.5 3h0m6.5-5h0m0.5 3h0m-149.5 4.5h0m6.5 1h0m9 1h0m4-0.5h0m11 2h0m5.5-1.5h0m4 2.5h0m14-4h0m6.5 3.5h0m6-3.5h0m8.5 2.5h0m2.5 0h0m11 1h0m4-3h0m4 1h0m2.5-2.5h0m3.5-0.5h0m10.5 1h0m4.5 1h0m7.5-1.5h0m6.5 3h0m5 1.5h0m11-3h0m-130.5 4h0m2.5 1h0m7 2h0m1.5 2.5h0m8.5-2h0m0-3h0m9.5 0.5h0m6 3.5h0m2-2.5h0m3.5 2h0m0-3h0m25 4h0m6-2.5h0m12-2.5h0m0.5 3h0m5-1.5h0m2.5 0h0m4-1.5h0m5 2.5h0m11 1.5h0m2-2h0m5 1h0m5.5 2h0m16.5-5.5h0m-136 8h0m2 3.5h0m15.5-2h0m3.5-3h0m2 4h0m9-1.5h0m16.5 2h0m2.5 0.5h0m9.5 0h0m12.5-1h0m15.5-1.5h0m4-1.5h0m3.5 1h0m2.5 1h0m7.5 2.5h0m1.5-2h0m1-3h0m3 4h0m10-2.5h0m1.5 3h0m2.5-3h0m6.5 2h0m1-2.5h0m-128 6h0m0.5 4h0m1.5-2h0m6-4h0m9.5 1h0m8 2.5h0m4.5-1h0m4-2h0m1.5 3.5h0m3-2h0m11 2h0m2-3.5h0m1.5 5h0m14.5 0h0m2-3.5h0m12 2.5h0m3.5-1h0m8.5 0h0m4.5-3.5h0m0 4.5h0m4-0.5h0m3.5-1.5h0m20.5-1h0m-138.5 5.5h0m4.5 2.5h0m4.5 1.5h0m8-1h0m4.5-1.5h0m8-0.5h0m1.5 2.5h0m7.5-3h0m5.5 3.5h0m4-3.5h0m3 2.5h0m3-1.5h0m5.5 3.5h0m2-4.5h0m8 0.5h0m3 0.5h0m5-1.5h0m6 3.5h0m6 1.5h0m3-1h0m17-3.5h0m3-1h0m9.5 1.5h0m4 2h0m5.5-4h0m1.5 4h0m5-3.5h0m42 4h0m-171 6.5h0m3-3h0m13-1.5h0m13.5 0.5h0m1.5 3h0m21.5 2h0m5.5-1.5h0m3-0.5h0m25.5 0h0m0.5-2.5h0m5-1h0m3 5h0m10.5-2.5h0m2.5 1h0m3-2h0m16 1h0m39 0h0m4.5 0h0m5.5-3h0m3.5 1h0m1 4.5h0m39-0.5h0m-226 1.5h0m2 4h0m3.5 0.5h0m8.5-1h0m2-3.5h0m17.5 3.5h0m11.5 0.5h0m7-1h0m9 0.5h0m2.5 1h0m3.5-3.5h0m9.5 2.5h0m4.5-3.5h0m22 2h0m3-1h0m2 1h0m12.5-1h0m8 0h0m2.5-0.5h0m8.5 0h0m3 1.5h0m2-2.5h0m8 5.5h0m3.5 0.5h0m3-0.5h0m2-3.5h0m6 2h0m3.5-1.5h0m4-2.5h0m20 1.5h0m2 3h0m9.5 0h0m6.5-2.5h0m8.5 3.5h0m2-2.5h0m-222 4.5h0m1 3.5h0m2.5-2h0m1 2.5h0m4.5-5h0m2 3h0m3.5 2h0m13.5-5h0m9.5 2h0m2 2.5h0m17.5-2.5h0m13 0.5h0m1.5-3h0m2 3.5h0m11-2.5h0m12 5h0m3.5-1h0m2-2h0m9 3h0m14.5-1h0m7.5-4h0m5 2h0m4-2h0m2.5 3.5h0m4-2h0m4 0.5h0m4.5 2h0m0.5-2.5h0m3.5-1.5h0m3 1h0m3.5 0.5h0m3 1.5h0m3.5 1.5h0m22.5-0.5h0m6-0.5h0m8-3h0m7 2h0m3 1.5h0m4-4h0m-213 5h0m7.5 2h0m14 2h0m0-3h0m4.5 1.5h0m13-1h0m17.5 0.5h0m4.5-1h0m12.5 2h0m1-3h0m1.5 4.5h0m12.5 1.5h0m7.5-1h0m17-1.5h0m5-2.5h0m5 0h0m2 4.5h0m5 0h0m9.5 0.5h0m1-2.5h0m2 2h0m5.5-4h0m1.5 2.5h0m3 1.5h0m3.5-2h0m3.5-2h0m3 3.5h0m5.5-4h0m0.5 4h0m6.5 1h0m0.5-6h0m5 3h0m3.5-1.5h0m2.5 1.5h0m-202.5 7h0m9 1h0m7-2h0m13 2.5h0m0-4h0m7.5 2.5h0m10 0h0m3.5 0.5h0m1-3.5h0m5.5 4.5h0m5-0.5h0m12-1h0m5.5-3h0m3 1.5h0m4-1h0m3.5-1h0m4.5 0.5h0m19.5 0h0m5.5 3.5h0m11 1h0m4 0h0m1.5-2.5h0m12 0.5h0m2.5-2.5h0m4.5 4.5h0m0-3h0m15.5 3.5h0m6-4h0m8.5 1h0m4 0.5h0m4.5-1h0m1 2.5h0m2-4.5h0m1 3h0m4.5-3h0m5.5 0.5h0m4.5 2.5h0m1.5-2.5h0m-212 9.5h0m6.5 0.5h0m9-4.5h0m1 3.5h0m3.5-1.5h0m8.5 1.5h0m18.5-2.5h0m4 0.5h0m0.5 2.5h0m10.5-2h0m5.5 0h0m4-2h0m2.5 1.5h0m28.5 0.5h0m17 0.5h0m1-2.5h0m6.5 1.5h0m15.5 3.5h0m6-4.5h0m22.5 2.5h0m2.5-1h0m12 2.5h0m2-2h0m1.5-2h0m9 1.5h0m21.5 1h0m4.5 1.5h0m-223.5 2.5h0m19-1h0m6 4.5h0m4-0.5h0m9-3.5h0m3 0h0m1 3h0m2-3.5h0m1 5h0m18.5-3.5h0m3-0.5h0m44 0h0m3.5 0h0m4-1h0m5 2.5h0m3.5 0h0m6-2h0m22.5 1h0m9.5 3.5h0m10.5-2.5h0m3 2.5h0m2-1.5h0m17-2h0m4.5-1.5h0m1 3.5h0m2-2.5h0m20 0.5h0m-217 4.5h0m1.5 3h0m4.5 0h0m7 1.5h0m13-0.5h0m7-3h0m82 0.5h0m8-0.5h0m5 1h0m3.5-1h0m13 4h0m3-2h0m5 0h0m7.5-2h0m13.5 0h0m7 2.5h0m3.5-1.5h0m1.5 3.5h0m1-4h0m3.5 3.5h0m1-3h0m5.5 1h0m3-2.5h0m5.5 5h0m2-5h0m6 0.5h0m5-1h0m7.5 5h0m-203 1.5h0m9.5 0.5h0m90 3h0m3.5 1.5h0m4-3.5h0m6.5-0.5h0m8 1h0m2 2.5h0m8.5-0.5h0m0.5-3h0m2.5-1h0m7 4h0m10.5 0.5h0m19 0h0m3-2.5h0m8 0h0m3 2.5h0m6.5-1h0m4-1.5h0m1.5 3h0m6-3.5h0m-82.5 7h0m4-1.5h0m0.5 2.5h0m6.5 0h0m8.5-0.5h0m3.5 2h0m3-3h0m12.5 2.5h0m1-2h0m16.5 0.5h0m12-3.5h0m0 4h0m4.5 1.5h0m1.5-3.5h0m2 2h0m6-2.5h0m3 0.5h0m-74 8.5h0m4-1h0m5-0.5h0m12 1.5h0m3.5-0.5h0m14-0.5h0m17.5-0.5h0m4.5 0h0m3-1h0m3 1.5h0m6 1.5h0m1.5-2.5h0m-77.5 4.5h0m4.5 4.5h0m3-0.5h0m10-3.5h0m3 1.5h0m3.5-1.5h0m13.5-1.5h0m5 0.5h0m8-0.5h0m28 0h0m0 3h0m-82.5 4h0m1.5 2.5h0m2-2h0m15.5 1h0m5.5 3h0m17-4h0m3.5 2h0m1.5-3h0m12 0h0m5.5 1h0m21 2h0m-84 3.5h0m11 3h0m13-1.5h0m4.5 0.5h0m5.5 1.5h0m3.5-4h0m3.5 4.5h0m7.5-2h0m18.5-0.5h0m9-0.5h0m1.5 3h0m2-3.5h0m2.5-1.5h0m2 5h0m2-2.5h0m23 1h0m4 0h0m-114 8h0m0.5-4h0m19 3h0m4-3h0m5.5 3.5h0m3-5h0m0.5 3h0m5.5 0.5h0m4.5 0h0m11.5 0h0m2-3h0m4 5h0m4.5-2.5h0m17 0.5h0m0.5-3h0m10 1.5h0m3 0h0m7.5-2.5h0m4 5.5h0m1.5-4h0m2 2.5h0m-105 8h0m1.5-5.5h0m1 3h0m13 1h0m5.5-2h0m15.5 1h0m9.5-2.5h0m0.5 3.5h0m7-1.5h0m13.5-1.5h0m7 2.5h0m6-3.5h0m2.5 3.5h0m12-1.5h0m10-2h0m1.5 4.5h0m2.5 1h0m8.5-0.5h0m0.5-2.5h0m3-1.5h0m4-0.5h0m2.5 4.5h0m46.5-0.5h0m-174.5 3.5h0m3 0h0m3 1h0m5 2h0m4.5-4h0m5 2h0m3 0.5h0m3-3h0m2 2.5h0m2.5-2.5h0m2.5 1h0m1 2.5h0m5.5-3.5h0m2 2.5h0m6 2h0m9-1h0m0.5-4.5h0m8.5 1h0m1 4h0m4.5-2h0m1 3h0m7-3h0m3-0.5h0m2.5-1.5h0m2.5 5h0m2-2.5h0m4.5 1h0m2-2h0m7.5 2.5h0m3.5-2h0m8.5 0h0m4.5 2.5h0m4-0.5h0m1.5-3h0m4.5 0.5h0m5-1h0m1 3.5h0m12 0.5h0m0.5-4.5h0m11.5 3.5h0m4.5-2h0m-160 5h0m4-0.5h0m7 3.5h0m4-2.5h0m7 3h0m7 0h0m17.5-2.5h0m3.5 1h0m19-1h0m22.5-2h0m3.5 3.5h0m2.5 1.5h0m4-4h0m2.5 3.5h0m4.5-2h0m20.5-1.5h0m3.5 0.5h0m4-1.5h0m5.5 2h0m3 3h0m16.5-3.5h0m2 3.5h0m-161 2h0m2.5 4h0m2-4h0m7.5 4h0m6-3h0m32-1h0m4.5 3.5h0m0.5-3h0m9.5 1.5h0m7.5-1.5h0m4.5 3.5h0m3-3.5h0m18-1.5h0m4.5 2h0m11.5 1.5h0m8-0.5h0m4 0h0m1-3h0m1.5 4.5h0m3 0.5h0m6-2h0m0.5-3.5h0m2 4h0m19-3.5h0m0.5 4h0m10.5-1.5h0m2.5 0.5h0m-180.5 7h0m3 0h0m6-3h0m2.5 2h0m10.5-0.5h0m4-3h0m9.5 2h0m5.5-1h0m0 3.5h0m12-3h0m2.5-1.5h0m1.5 4h0m2.5-2h0m4 0.5h0m3 1h0m3-0.5h0m3 0.5h0m2.5-2.5h0m3.5-0.5h0m8.5 2.5h0m3.5-0.5h0m8-1h0m7 0h0m6-1h0m18 0.5h0m1 4h0m2-5h0m0.5 4.5h0m5-2.5h0m7.5-0.5h0m16 0.5h0m8 1.5h0m2 2h0m0.5-5h0m5.5 1.5h0m7 1h0m2.5 1.5h0m-176.5 2h0m5 4.5h0m0-3.5h0m3 0h0m12.5 0.5h0m1.5 2h0m2-1.5h0m24 1.5h0m3-3h0m6-1h0m0 5h0m2.5-3h0m10 0h0m4.5 1h0m4.5-2h0m1.5 2.5h0m5-2.5h0m4.5 0.5h0m3 1h0m3.5 3.5h0m2-4.5h0m20.5 0h0m3.5 0h0m13.5 1h0m12-0.5h0m3 0h0m3.5 3.5h0m7 0h0m11-3h0m3.5-1h0m-179.5 9.5h0m2-4h0m1.5 2.5h0m2.5-1h0m8.5 0.5h0m0-3h0m3.5 0.5h0m8 1h0m9 1.5h0m7.5 2.5h0m8.5-5h0m3.5 2h0m1 3h0m3-2h0m7-1h0m6.5-1.5h0m6.5 0h0m9.5 1h0m10 2h0m2.5 2h0m6.5-4h0m7.5 2h0m1-3h0m7.5 4h0m3-2.5h0m7-2h0m5 3h0m3-1.5h0m4.5-2h0m4.5 5.5h0m18.5-0.5h0m4-1h0m7.5-2h0m-175 5h0m1 2.5h0m3 0h0m2.5-1.5h0m2-2h0m41 2.5h0m11.5-1h0m16.5-1h0m13 5h0m6.5 0.5h0m2.5-4h0m9.5-0.5h0m2.5 2h0m6.5-1h0m3 1.5h0m4 1.5h0m6.5-2h0m6.5 0.5h0m2.5-2.5h0m1 2.5h0m4 1h0m3.5 0.5h0m1.5-4h0m3 2.5h0m1.5-3.5h0m16.5 5h0m4.5-3h0m1.5 2.5h0m4.5 0.5h0m1.5-4h0m-174.5 4.5h0m2 3h0m1.5 2.5h0m1.5-3.5h0m20.5 0h0m8-1.5h0m33.5 0.5h0m3.5-0.5h0m16.5 5.5h0m4-1.5h0m1-3.5h0m2 5h0m0.5-4h0m5 0h0m2 2.5h0m23-1.5h0m25 0.5h0m12 1h0m12.5-2h0m-174.5 7.5h0m2.5-2h0m2 3h0m3-3h0m15.5-1h0m43 0h0m0 2.5h0m14-2h0m2.5 3h0m1-3.5h0m3.5 4h0m11-1h0m2-2h0m5.5 3.5h0m8.5 0.5h0m9.5-1h0m5-0.5h0m5-3.5h0m2 4.5h0m0.5-4h0m10 3.5h0m9 0h0m7-3.5h0m-155 6.5h0m3 0h0m2 2.5h0m2-2h0m4.5 1h0m47-1.5h0m5 3.5h0m8.5 0h0m4-1h0m4.5-1.5h0m1.5 2.5h0m2-4h0m20.5 1.5h0m5 1.5h0m1-3.5h0m5.5 2h0m8 1h0m2.5-1.5h0m14.5 3h0m-80.5 4.5h0m0.5-3h0m2.5 2h0m2.5 0.5h0m7 1.5h0m2-3.5h0m4 0h0m0.5 4.5h0m10-4h0m3 3h0m1.5-2.5h0m9 2h0m10-1h0m17.5-2.5h0m-66.5 9.5h0m4-1h0m13.5 0.5h0m2-3h0m12.5 0h0m1.5 4h0m2.5-2h0m2.5-2h0m15 2h0m14.5-0.5h0m-67.5 4.5h0m5 3h0m0.5-3.5h0m4.5 3.5h0m23 0.5h0m7 0.5h0m29 0.5h0m-61.5 0.5h0m4.5 0.5h0m1.5 2.5h0m3.5 0h0m3 0h0m0.5-3h0m2 4.5h0m1.5-2.5h0m1 3.5h0m7.5-3.5h0m5 0h0m1.5 2.5h0m7-2h0m15.5 1h0m16 2.5h0m-92.5 6h0m4-2.5h0m6.5 1h0m9.5 0h0m5.5-2.5h0m9.5 1.5h0m5-0.5h0m5.5 1h0m5 0h0m16 0h0m3.5 0h0m3-3h0m3.5 0h0m-88 8.5h0m24 0.5h0m12-3.5h0m5-0.5h0m3.5 1.5h0m3.5-1h0m0 4h0m6.5-3.5h0m3.5 4.5h0m4-3.5h0m10-1h0m11-0.5h0m3 4h0m5.5 0.5h0m1.5-2.5h0m3.5-2h0m4.5 1.5h0m-102 9h0m1.5-3.5h0m11 4h0m20-1h0m8.5-1h0m1-2.5h0m1 5h0m4.5-2h0m2-2.5h0m4-0.5h0m2.5 1.5h0m3.5 0.5h0m3-1.5h0m2 2.5h0m6-1h0m21.5 0h0m2.5 2.5h0m-92.5 6.5h0m0.5-5h0m15.5 3.5h0m2-2.5h0m10.5 1h0m3.5-1h0m5-0.5h0m5 2h0m4-1.5h0m8 3.5h0m2.5 0h0m4.5-5.5h0m6 3h0m1.5-3h0m4.5 5h0m3.5-1.5h0m5-0.5h0m3.5 2h0m-186 5h0m10.5 1.5h0m71.5 0h0m3 0.5h0m3-3h0m31.5 0h0m3-1h0m8-0.5h0m3-1.5h0m3 1h0m14 5h0m1-2.5h0m21.5-1.5h0m2.5-0.5h0m3 4h0m2.5-1.5h0m7 0.5h0m1-3h0m-208 9.5h0m7.5 0h0m4-2.5h0m9.5 0h0m4.5-1.5h0m2 2.5h0m15 0h0m24 2.5h0m27-3.5h0m6-0.5h0m3 0h0m5 1.5h0m3-1h0m19.5 0h0m6 2.5h0m10 0.5h0m16.5-4.5h0m12 4h0m9.5-4.5h0m1.5 4.5h0m8.5 0h0m7.5-4.5h0m2.5 3h0m8.5-3h0m5 2.5h0m2.5 2.5h0m-205.5 2.5h0m5-1h0m3 3.5h0m8-0.5h0m4.5 0.5h0m18.5 0.5h0m3-2h0m10.5 2.5h0m3-3h0m0.5 3h0m17.5 0h0m4-2h0m0-3h0m4 2.5h0m6.5 1h0m7.5-3.5h0m5 3.5h0m1.5-2.5h0m2.5 0h0m9 2h0m20 2h0m1.5-5.5h0m0.5 3h0m2.5-1.5h0m5 1h0m5.5-1.5h0m6 4h0m13.5-1.5h0m6.5-1.5h0m3 1h0m3 1.5h0m5-3.5h0m5 4.5h0m5.5 0h0m2-4.5h0m2 4.5h0m8-4h0m-232 9h0m5-4.5h0m6 1h0m12.5 2h0m4.5 2.5h0m11-5h0m8 0.5h0m5.5 2.5h0m3.5-2h0m8 0.5h0m5 2.5h0m4-0.5h0m5.5 1.5h0m7 0h0m4.5-5h0m0 3.5h0m3 1.5h0m1-4h0m12-1.5h0m2.5 4.5h0m4 1h0m5.5-2h0m1.5-3h0m24.5 5h0m7-1.5h0m8-1h0m8-3h0m3 0.5h0m2.5 1h0m6 1.5h0m22-2.5h0m5 1.5h0m20.5 0.5h0m3 3h0m4-2.5h0m1 3h0m2.5-2.5h0m4 1h0m2.5-2.5h0m-246 4.5h0m6 0h0m5 2.5h0m6-2.5h0m0 5h0m8.5-1h0m9.5-2.5h0m2 2.5h0m1.5-4.5h0m3.5 6h0m2.5-1h0m2.5-2.5h0m4.5 2h0m3-0.5h0m3.5 1h0m2-2h0m4.5-1.5h0m1 3h0m5-0.5h0m5.5-2h0m8 3.5h0m3.5-2.5h0m10.5 1.5h0m5.5-3h0m5-1.5h0m3 1.5h0m9 2.5h0m6.5-3.5h0m22 5h0m1-3h0m46-2h0m1 3.5h0m-192.5 2.5h0m2 2h0m4-1h0m10 3.5h0m4-0.5h0m2-2.5h0m4 2h0m2-2h0m8.5 3h0m18-2h0m10-1.5h0m3.5 4h0m20-3h0m3 1.5h0m0-3h0m3 1.5h0m11 0.5h0m18-0.5h0m5-2h0m2.5 5h0m8-3h0m7.5 1h0m36.5-0.5h0m3.5 0h0m7-0.5h0m-186 7h0m18.5-1h0m2 1.5h0m1.5-3h0m4.5 3.5h0m3 1h0m2.5-1.5h0m2.5-2.5h0m3.5 1.5h0m10 0h0m3.5-2.5h0m2.5 3.5h0m4.5-2.5h0m3 1.5h0m5.5-0.5h0m4 0.5h0m8 1h0m10.5 0.5h0m3-1.5h0m6.5 1h0m5 1.5h0m4.5-3h0m7.5 0.5h0m4 2h0m5.5 0h0m4.5-3h0m5-2h0m-136 7h0m14.5 3.5h0m6.5-4h0m3 0h0m8 2.5h0m2.5-2h0m3 3.5h0m16.5-3h0m3-0.5h0m4 4.5h0m11 0.5h0m12.5-2h0m3.5 0.5h0m2.5-1.5h0m1 3h0m8-4h0m3 3h0m3 0.5h0m1-3h0m10.5 3.5h0m-117 6h0m5.5-5h0m7.5 3.5h0m2-2.5h0m9 3.5h0m4-3.5h0m2 2.5h0m0-4.5h0m4 0.5h0m22.5 5h0m2.5-1h0m18.5-3h0m3.5 0h0m0.5 4.5h0m13.5-5.5h0m8 2h0m11 0.5h0m10.5-2h0m2.5 2h0m1.5-2.5h0m1.5 3h0m3.5 2h0m0.5-5.5h0m-129.5 10h0m4 1.5h0m3-0.5h0m2-3.5h0m7-0.5h0m12 1h0m4.5 4h0m9.5-3h0m5-1h0m5 3.5h0m3-1h0m3-2h0m3 0h0m11 2.5h0m11-5h0m5 1.5h0m4.5 2h0m13.5 0h0m7-0.5h0m7 1h0m6-0.5h0m3.5 0h0m5.5-1.5h0m-136 5h0m4.5 1h0m4.5 2.5h0m8-2.5h0m11 1h0m4.5 0.5h0m5-3.5h0m2 6h0m5.5-5h0m3 2h0m5 0h0m22.5 2h0m3-2.5h0m2-2h0m3 2.5h0m1.5 2.5h0m0.5-5h0m8.5 4.5h0m1-4.5h0m3 1.5h0m19 1.5h0m9.5-1h0m-132.5 4.5h0m0 4.5h0m2.5-3h0m12.5 2h0m3 0h0m12-1.5h0m1.5 2.5h0m4-1.5h0m1-3h0m6-0.5h0m2 2h0m15.5 1.5h0m8 0.5h0m2.5-4h0m2 2h0m1 2.5h0m3 0h0m3-4h0m4.5 0h0m3-1h0m4 2h0m6.5-0.5h0m11-0.5h0m7.5 4h0m6-4.5h0m3 2h0m5-2h0m4 4.5h0m3-1.5h0m-130.5 4.5h0m5-0.5h0m8 4h0m10-1h0m2-1h0m6-1h0m1.5 3h0m1.5-3h0m3-2.5h0m1 4h0m13 1.5h0m4.5 0.5h0m4.5-1h0m1-3.5h0m18.5 4h0m8-2.5h0m8.5 1.5h0m10.5-4.5h0m8.5 5.5h0m6-4.5h0m5 4.5h0m-127 0.5h0m5 2h0m0.5 4h0m21.5 0h0m3-5.5h0m3 3h0m2.5 2h0m2-3h0m16.5-0.5h0m8 0h0m8.5-0.5h0m7.5 3h0m4.5-3h0m7 2.5h0m4 0h0m1.5-3.5h0m2 5h0m2-3.5h0m8 0h0m2.5 2h0m5.5 1.5h0m7-2h0m2.5-0.5h0m-126.5 3.5h0m0.5 3.5h0m2-2h0m6.5 3.5h0m9-3h0m1.5-2.5h0m7 3h0m2 2h0m2.5-2h0m3 1.5h0m5.5-2h0m3-2h0m0.5 4h0m2-2h0m7 2.5h0m14.5-1.5h0m1-3h0m3 4.5h0m23-3h0m1.5 2h0m2-2.5h0m9 1.5h0m8-2h0m3 1.5h0m4 0h0m6-1h0m-128 5h0m2 3h0m15-2.5h0m3-0.5h0m0.5 4.5h0m3.5-4.5h0m2.5 0.5h0m2.5 1.5h0m19.5 3.5h0m1-3h0m10-0.5h0m2.5-2h0m0.5 3.5h0m13.5 1.5h0m0-3h0m3 1h0m5.5-1h0m32-2h0m-115 6.5h0m13.5 4h0m1.5-2h0m7 2h0m1.5-3h0m5 0.5h0m10 0h0m7 0.5h0m3-0.5h0m11-2.5h0m3.5 2.5h0m3.5 0h0m7-0.5h0m-48 4h0m5.5 3h0m5-0.5h0m-14 7h0m11.5-3.5h0" stroke="#7c7a88" stroke-width="5.3"/><path d="M370.5 203.5h0m-13 2h0m14.5 7.5h0m17 2h0m8.5-1h0m3-0.5h0m4 1h0m12 0.5h0m1-3.5h0m13 2h0m30.5 1h0m-110 6.5h0m3-2h0m3.5 2.5h0m11.5-1h0m11.5 0.5h0m23-3.5h0m5.5 3h0m18-1.5h0m4.5 2.5h0m1-3h0m19-2h0m4.5 3.5h0m1-3h0m2 3.5h0m3 1h0m5-1h0m-83.5 4.5h0m3-2h0m9 0h0m20 4h0m1-3.5h0m12 3h0m14.5-3h0m8 1h0m1 2.5h0m-115.5 5.5h0m6.5-1h0m37.5 1h0m14.5-3h0m9.5 0h0m5 1.5h0m11-0.5h0m2 1.5h0m52 1h0m7-2h0m-149.5 4.5h0m6.5 1h0m33.5 3.5h0m14-4h0m6.5 3.5h0m6-3.5h0m11 2.5h0m11 1h0m10.5-4.5h0m18.5 1.5h0m7.5-1.5h0m6.5 3h0m5 1.5h0m-117 2h0m17 2.5h0m0-3h0m9.5 0.5h0m6 3.5h0m2-2.5h0m3.5 2h0m0-3h0m25 4h0m18-5h0m8 1.5h0m4-1.5h0m16 4h0m7-1h0m5.5 2h0m-98.5 1h0m52 4h0m33 1.5h0m1.5-2h0m1-3h0m17 1.5h0m6.5 2h0m1-2.5h0m-128 6h0m0.5 4h0m1.5-2h0m15.5-3h0m8 2.5h0m10 0.5h0m3-2h0m29 3.5h0m17.5-2h0m8.5 0h0m4.5-3.5h0m0 4.5h0m7.5-2h0m20.5-1h0m-138.5 5.5h0m4.5 2.5h0m4.5 1.5h0m12.5-2.5h0m8-0.5h0m9-0.5h0m5.5 3.5h0m4-3.5h0m3 2.5h0m3-1.5h0m7.5-1h0m11 1h0m5-1.5h0m6 3.5h0m48-4.5h0m1.5 4h0m5-3.5h0m42 4h0m-171 6.5h0m3-3h0m26.5-1h0m57.5 0.5h0m5-1h0m3 5h0m10.5-2.5h0m2.5 1h0m3-2h0m55 1h0m13.5-2h0m40 4h0m-224 5.5h0m3.5 0.5h0m10.5-4.5h0m17.5 3.5h0m11.5 0.5h0m7-1h0m9 0.5h0m2.5 1h0m13-1h0m29.5-2.5h0m2 1h0m20.5-1h0m11-0.5h0m5-1h0m8 5.5h0m6.5 0h0m2-3.5h0m6 2h0m3.5-1.5h0m4-2.5h0m31.5 4.5h0m6.5-2.5h0m8.5 3.5h0m2-2.5h0m-222 4.5h0m1 3.5h0m2.5-2h0m5.5-2.5h0m5.5 5h0m13.5-5h0m11.5 4.5h0m17.5-2.5h0m13 0.5h0m1.5-3h0m2 3.5h0m11-2.5h0m15.5 4h0m25.5 0h0m7.5-4h0m9 0h0m6.5 1.5h0m4 0.5h0m5-0.5h0m3.5-1.5h0m3 1h0m3.5 0.5h0m6.5 3h0m36.5-4h0m-199 4.5h0m21.5 4h0m17.5-2.5h0m17.5 0.5h0m4.5-1h0m12.5 2h0m22.5 2h0m22-4h0m7 4.5h0m5 0h0m9.5 0.5h0m3-0.5h0m5.5-4h0m4.5 4h0m3.5-2h0m3.5-2h0m8.5-0.5h0m0.5 4h0m7-5h0m-182.5 11h0m7-2h0m13-1.5h0m7.5 2.5h0m10 0h0m3.5 0.5h0m1-3.5h0m5.5 4.5h0m22.5-4.5h0m10.5-0.5h0m24 0.5h0m5.5 3.5h0m16.5-1.5h0m12 0.5h0m2.5-2.5h0m4.5 4.5h0m15.5 0.5h0m6-4h0m12.5 1.5h0m4.5-1h0m8.5-2h0m5.5 0.5h0m4.5 2.5h0m-210.5 7h0m16.5-0.5h0m3.5-1.5h0m8.5 1.5h0m18.5-2.5h0m4 0.5h0m0.5 2.5h0m10.5-2h0m5.5 0h0m4-2h0m2.5 1.5h0m45.5 1h0m1-2.5h0m22 5h0m28.5-2h0m27-1h0m21.5 1h0m4.5 1.5h0m-223.5 2.5h0m19-1h0m10 4h0m9-3.5h0m3 0h0m1 3h0m2-3.5h0m19.5 1.5h0m50.5-0.5h0m4-1h0m5 2.5h0m32-1h0m23 3.5h0m2-1.5h0m17-2h0m4.5-1.5h0m1 3.5h0m2-2.5h0m20 0.5h0m-211 7.5h0m20 1h0m89-2.5h0m8-0.5h0m5 1h0m16.5 3h0m8-2h0m7.5-2h0m13.5 0h0m10.5 1h0m1.5 3.5h0m1-4h0m4.5 0.5h0m14 3.5h0m8-4.5h0m5-1h0m7.5 5h0m-203 1.5h0m9.5 0.5h0m90 3h0m3.5 1.5h0m4-3.5h0m6.5-0.5h0m18.5 3h0m3-4h0m17.5 4.5h0m19 0h0m3-2.5h0m17.5 1.5h0m11.5-2h0m-82.5 7h0m4-1.5h0m0.5 2.5h0m6.5 0h0m8.5-0.5h0m20-0.5h0m28.5 1h0m4.5 1.5h0m1.5-3.5h0m2 2h0m9-2h0m-74 8.5h0m4-1h0m5-0.5h0m12 1.5h0m17.5-1h0m17.5-0.5h0m4.5 0h0m3-1h0m3 1.5h0m-70 3.5h0m4.5 4.5h0m3-0.5h0m10-3.5h0m3 1.5h0m3.5-1.5h0m13.5-1.5h0m13 0h0m-53 9.5h0m2-2h0m38 0h0m3.5 2h0m1.5-3h0m38.5 3h0m-84 3.5h0m24 1.5h0m4.5 0.5h0m5.5 1.5h0m3.5-4h0m3.5 4.5h0m36.5 0h0m2-3.5h0m6.5 1h0m-87 9h0m0.5-4h0m28.5 3.5h0m3-5h0m6 3.5h0m16 0h0m2-3h0m4 5h0m4.5-2.5h0m17 0.5h0m0.5-3h0m10 1.5h0m3 0h0m7.5-2.5h0m7.5 4h0m-103.5 2.5h0m19.5 2h0m15.5 1h0m9.5-2.5h0m0.5 3.5h0m7-1.5h0m13.5-1.5h0m7 2.5h0m6-3.5h0m2.5 3.5h0m12-1.5h0m10-2h0m1.5 4.5h0m11 0.5h0m7.5-4.5h0m49 4h0m-168.5 4.5h0m5 2h0m4.5-4h0m5 2h0m3 0.5h0m7.5-3h0m3.5 3.5h0m5.5-3.5h0m2 2.5h0m6 2h0m9-1h0m0.5-4.5h0m8.5 1h0m5.5 2h0m8 0h0m3-0.5h0m2.5-1.5h0m4.5 2.5h0m4.5 1h0m2-2h0m7.5 2.5h0m3.5-2h0m8.5 0h0m8.5 2h0m1.5-3h0m22.5 3.5h0m12-1h0m-151.5 2.5h0m7 3.5h0m4-2.5h0m14 3h0m17.5-2.5h0m3.5 1h0m19-1h0m22.5-2h0m3.5 3.5h0m2.5 1.5h0m4-4h0m27.5 0h0m3.5 0.5h0m4-1.5h0m5.5 2h0m3 3h0m16.5-3.5h0m-156.5 9.5h0m2-4h0m7.5 4h0m6-3h0m32-1h0m14.5 2h0m7.5-1.5h0m4.5 3.5h0m3-3.5h0m46 1.5h0m1-3h0m1.5 4.5h0m3 0.5h0m6-2h0m2.5 0.5h0m19-3.5h0m0.5 4h0m10.5-1.5h0m2.5 0.5h0m-180.5 7h0m3 0h0m6-3h0m13 1.5h0m4-3h0m9.5 2h0m5.5 2.5h0m12-3h0m4 2.5h0m2.5-2h0m7 1.5h0m6 0h0m2.5-2.5h0m3.5-0.5h0m8.5 2.5h0m3.5-0.5h0m8-1h0m13-1h0m19 4.5h0m2-5h0m0.5 4.5h0m5-2.5h0m23.5 0h0m8 1.5h0m2 2h0m0.5-5h0m15 4h0m-168.5 3h0m12.5 0.5h0m1.5 2h0m2-1.5h0m24 1.5h0m3-3h0m6-1h0m0 5h0m21.5-4h0m1.5 2.5h0m9.5-2h0m8.5 0h0m20.5 0h0m3.5 0h0m13.5 1h0m18.5 3h0m7 0h0m11-3h0m-176 8.5h0m14.5-5h0m3.5 0.5h0m17 2.5h0m7.5 2.5h0m8.5-5h0m3.5 2h0m1 3h0m3-2h0m7-1h0m6.5-1.5h0m6.5 0h0m19.5 3h0m9-2h0m7.5 2h0m1-3h0m10.5 1.5h0m7-2h0m12.5-0.5h0m4.5 5.5h0m22.5-1.5h0m7.5-2h0m-175 5h0m1 2.5h0m3 0h0m4.5-3.5h0m41 2.5h0m50-0.5h0m9.5-0.5h0m9 1h0m3 1.5h0m10.5-0.5h0m6.5 0.5h0m2.5-2.5h0m5 3.5h0m8-1h0m18 1.5h0m4.5-3h0m6 3h0m-173 0.5h0m2 3h0m1.5 2.5h0m1.5-3.5h0m20.5 0h0m41.5-1h0m24 3.5h0m1-3.5h0m2 5h0m0.5-4h0m7 2.5h0m23-1.5h0m25 0.5h0m12 1h0m12.5-2h0m-174.5 7.5h0m2.5-2h0m5 0h0m58.5-1h0m14 0.5h0m2.5 3h0m31.5 1.5h0m9.5-1h0m5-0.5h0m5-3.5h0m2 4.5h0m0.5-4h0m19 3.5h0m7-3.5h0m-155 6.5h0m3 0h0m4 0.5h0m4.5 1h0m47-1.5h0m13.5 3.5h0m4-1h0m6 1h0m27.5-1h0m1-3.5h0m13.5 3h0m2.5-1.5h0m14.5 3h0m-80 1.5h0m2.5 2h0m11.5-1.5h0m4 0h0m10.5 0.5h0m23.5 1.5h0m17.5-2.5h0m-49 9h0m2-3h0m12.5 0h0m1.5 4h0m2.5-2h0m32-0.5h0m-62.5 7.5h0m0.5-3.5h0m4.5 3.5h0m2 2.5h0m10.5 4h0m2.5 1h0m7.5-3.5h0m6.5 2.5h0m22.5-1h0m-76.5 8.5h0m20-1.5h0m15-1h0m5-0.5h0m5.5 1h0m5 0h0m19.5 0h0m3-3h0m-84.5 8.5h0m24 0.5h0m24-3.5h0m0 4h0m6.5-3.5h0m3.5 4.5h0m4-3.5h0m10-1h0m11-0.5h0m3 4h0m7-2h0m3.5-2h0m4.5 1.5h0m-89.5 9.5h0m20-1h0m8.5-1h0m1-2.5h0m1 5h0m4.5-2h0m2-2.5h0m4-0.5h0m6 2h0m5 1h0m6-1h0m-68.5 9h0m0.5-5h0m15.5 3.5h0m2-2.5h0m14 0h0m14 0h0m10.5 3.5h0m4.5-5.5h0m12 5h0m3.5-1.5h0m-177.5 6.5h0m85 2h0m3-3h0m31.5 0h0m17-2h0m39 0.5h0m3 4h0m2.5-1.5h0m8-2.5h0m-200.5 9.5h0m18-4h0m17 2.5h0m24 2.5h0m33-4h0m8 1.5h0m22.5-1h0m6 2.5h0m58 0h0m7.5-4.5h0m18.5 5h0m-205.5 2.5h0m5-1h0m11 3h0m26-1h0m10.5 2.5h0m35.5-1.5h0m7.5-3.5h0m5 3.5h0m1.5-2.5h0m2.5 0h0m9 2h0m20 2h0m2-2.5h0m7.5-0.5h0m11.5 2.5h0m13.5-1.5h0m9.5-0.5h0m3 1.5h0m5-3.5h0m5 4.5h0m5.5 0h0m2-4.5h0m10 0.5h0m-232 9h0m23.5-1.5h0m4.5 2.5h0m28-4h0m8 0.5h0m5 2.5h0m9.5 1h0m11.5-1.5h0m3 1.5h0m1-4h0m14.5 3h0m35.5 1h0m7-1.5h0m8-1h0m11-2.5h0m8.5 2.5h0m22-2.5h0m5 1.5h0m23.5 3.5h0m5 0.5h0m2.5-2.5h0m-233.5 3h0m5 2.5h0m6 2.5h0m18-3.5h0m2 2.5h0m17.5-0.5h0m3.5 1h0m2-2h0m5.5 1.5h0m5-0.5h0m5.5-2h0m11.5 1h0m10.5 1.5h0m10.5-4.5h0m3 1.5h0m9 2.5h0m6.5-3.5h0m69 0h0m-191.5 6h0m2 2h0m4-1h0m10 3.5h0m4-0.5h0m2-2.5h0m4 2h0m10.5 1h0m18-2h0m10-1.5h0m3.5 4h0m20-3h0m3 1.5h0m3-1.5h0m36.5 3h0m15.5-2h0m36.5-0.5h0m3.5 0h0m-158.5 7h0m1.5-3h0m4.5 3.5h0m5.5-0.5h0m19.5-3.5h0m19.5 2.5h0m8 1h0m10.5 0.5h0m9.5-0.5h0m17-1h0m4 2h0m15-5h0m-112 6.5h0m8 2.5h0m5.5 1.5h0m16.5-3h0m3-0.5h0m33.5 2h0m1 3h0m14-0.5h0m11.5 0.5h0m-117 6h0m5.5-5h0m7.5 3.5h0m2-2.5h0m19-1.5h0m22.5 5h0m2.5-1h0m36-4h0m8 2h0m11 0.5h0m10.5-2h0m9 4.5h0m0.5-5.5h0m-113.5 7h0m26 2h0m5-1h0m5 3.5h0m3-1h0m3-2h0m25-2.5h0m5 1.5h0m4.5 2h0m20.5-0.5h0m7 1h0m6-0.5h0m9-1.5h0m-131.5 6h0m4.5 2.5h0m23.5-1h0m7 2.5h0m5.5-5h0m8 2h0m22.5 2h0m3-2.5h0m2-2h0m3 2.5h0m33.5 0.5h0m-123 3.5h0m0 4.5h0m2.5-3h0m27.5 0.5h0m1.5 2.5h0m11-5h0m17.5 3.5h0m8 0.5h0m4.5-2h0m1 2.5h0m17.5-3h0m6.5-0.5h0m24.5-1h0m8 0h0m4 4.5h0m-122.5 2.5h0m8 4h0m24-5.5h0m1 4h0m13 1.5h0m4.5 0.5h0m4.5-1h0m19.5 0.5h0m16.5-1h0m19 1h0m6-4.5h0m5 4.5h0m-127 0.5h0m30 0.5h0m3 3h0m2.5 2h0m42.5-1h0m11.5-0.5h0m4 0h0m1.5-3.5h0m2 5h0m2-3.5h0m8 0h0m2.5 2h0m5.5 1.5h0m9.5-2.5h0m-126 7h0m2-2h0m6.5 3.5h0m9-3h0m1.5-2.5h0m14.5 4.5h0m5.5-2h0m3-2h0m2.5 2h0m7 2.5h0m18.5 0h0m24.5-1h0m2-2.5h0m17-0.5h0m3 1.5h0m10-1h0m-111 5.5h0m3-0.5h0m0.5 4.5h0m6-4h0m22 5h0m1-3h0m12.5-2.5h0m0.5 3.5h0m13.5-1.5h0m3 1h0m37.5-3h0m-115 6.5h0m13.5 4h0m1.5-2h0m8.5-1h0m15 0.5h0m7 0.5h0m3-0.5h0m11-2.5h0m3.5 2.5h0m10.5-0.5h0m-37.5 6.5h0m-2.5 3.5h0" stroke="#e7e8e8" stroke-width="4.2"/><path d="M427 206h0m39.5 4h0m-38 1.5h0m35 8h0m4.5-2.5h0m-111 9h0m6 0.5h0m9.5-3.5h0m55-1h0m19 3h0m8.5-1h0m-109 8h0m14 1.5h0m6.5-2.5h0m39 1.5h0m32.5-0.5h0m20.5 0.5h0m-111 5h0m4-0.5h0m11 2h0m5.5-1.5h0m56.5-1h0m4 1h0m16.5-2h0m34.5 1h0m-121 7h0m1.5 2.5h0m102.5-3.5h0m27-2.5h0m-134 11.5h0m58.5 0h0m51-0.5h0m-72.5 1.5h0m35.5 1.5h0m-51 8.5h0m38.5-2.5h0m20 4h0m3-1h0m29.5-3h0m-97 4.5h0m15 3.5h0m21.5 2h0m5.5-1.5h0m3-0.5h0m25.5 0h0m84-1h0m5.5-3h0m-182.5 6.5h0m14 3.5h0m67-3.5h0m22 2h0m17.5-1h0m10.5-0.5h0m11.5 1.5h0m13.5 3.5h0m38.5-4.5h0m2 3h0m-191 7h0m6.5-2h0m26.5-1h0m59 3.5h0m48-1.5h0m12.5 0.5h0m45.5-0.5h0m15-1h0m-198.5 4.5h0m14-1h0m4.5 1.5h0m50 2h0m37-1h0m36.5 0.5h0m13 1h0m12.5 1h0m-162 5.5h0m101 0h0m24.5-3h0m30 0.5h0m11.5-2.5h0m1 3h0m16-2.5h0m-205.5 10h0m9-4.5h0m87 2h0m24.5-0.5h0m46.5 0.5h0m14 0.5h0m1.5-2h0m-143.5 10.5h0m81.5-2.5h0m6-2h0m32 4.5h0m-155.5 4h0m31.5-2h0m98.5 0h0m16 2h0m33 0.5h0m9.5 1.5h0m6.5-2h0m3-2.5h0m7.5 0h0m-63 8h0m2 2.5h0m18.5-0.5h0m40.5-2h0m3 2.5h0m10.5-2.5h0m-52 9h0m3-3h0m12.5 2.5h0m29.5-5h0m14 1.5h0m1.5 9.5h0m1.5-2.5h0m-35 4h0m36-0.5h0m0 3h0m-82.5 4h0m19 1.5h0m39.5-2h0m-46.5 9.5h0m37.5-1h0m18.5-0.5h0m42 1h0m4 0h0m-6 3.5h0m-100.5 8h0m13 1h0m105-3h0m-93 8h0m38.5 1.5h0m20.5 1h0m47.5-4.5h0m29.5 1h0m-51.5 6.5h0m55 2.5h0m-161 2h0m54.5 3.5h0m47.5-2.5h0m11.5 1.5h0m8-0.5h0m-118.5 6h0m44-3.5h0m129 3h0m-174 3.5h0m59.5 1.5h0m25.5-1h0m11 5h0m54.5-4h0m-151 7.5h0m22.5-2h0m97 3.5h0m15-1.5h0m-42.5 8h0m51-1.5h0m42-2.5h0m-141 5h0m37 0h0m16.5 5.5h0m12.5-4h0m-77 5h0m43 2.5h0m17.5-2.5h0m3.5 4h0m11-1h0m7.5 1.5h0m40.5-0.5h0m-75.5 6.5h0m17-2.5h0m3.5-1.5h0m-11 9.5h0m6.5 1h0m13-1h0m10.5-0.5h0m-39 6h0m38.5-3.5h0m-38 6h0m40 4h0m29 0.5h0m-23 3h0m31.5 3.5h0m-16 1h0m-47 5h0m50.5 5h0m-91 2.5h0m54.5 1h0m6.5-1h0m29.5 1.5h0m2.5 2.5h0m-38.5 6h0m13-2.5h0m1.5-3h0m-87.5 11.5h0m40.5-3.5h0m8-0.5h0m20 4.5h0m1-2.5h0m21.5-1.5h0m-192 9h0m27.5-1.5h0m83-1h0m35.5 3h0m38-5h0m28.5 0h0m-177.5 10h0m53 1h0m4-5h0m4 2.5h0m53.5-3h0m3 1.5h0m36.5 0.5h0m-193.5 4h0m47.5 3.5h0m60 2h0m120.5-2.5h0m10-1h0m-246 4.5h0m17 0h0m27.5 4.5h0m7-0.5h0m13-3h0m84.5 4h0m1-3h0m47 1.5h0m-101.5 3h0m14 2h0m18-0.5h0m5-2h0m10.5 2h0m-131.5 7h0m18.5-1h0m11 3h0m5-4h0m13.5 1.5h0m44.5 0h0m11.5 2.5h0m-90.5 5h0m70-0.5h0m15-2h0m-75.5 9.5h0m4-3.5h0m2 2.5h0m51.5 1.5h0m47-5.5h0m-124 9.5h0m4 1.5h0m5-4h0m63 3.5h0m57.5-1.5h0m-93 2.5h0m47.5 5.5h0m13-3.5h0m28.5 0.5h0m-117.5 8h0m21.5-3.5h0m8 1.5h0m26-2h0m9 0.5h0m4.5 0h0m24.5 0h0m16.5 1.5h0m-118.5 5.5h0m25 1.5h0m7.5 2h0m1.5-3h0m27-1h0m26.5 1.5h0m19-3h0m-80.5 12h0m55.5-4.5h0m39.5 2h0m-124 3h0m26.5 2.5h0m41-2.5h0m26 1.5h0m12.5 1h0m15-0.5h0m-98 4h0m5 2h0m47 3h0m8.5-3h0m-61 8.5h0" stroke="#9090e2" stroke-width="4.6"/><path d="M361 215h0m3 0.5h0m12.5-0.5h0m6 1.5h0m16 4.5h0m17.5-1h0m3-1.5h0m-51 6h0m13.5 3.5h0m11.5-2.5h0m9.5 1h0m10.5-1.5h0m65.5 0h0m-139.5 7.5h0m18-1.5h0m3-2h0m8-0.5h0m9 0h0m63 1h0m32 0.5h0m9-2h0m-74 10.5h0m27.5-4h0m-85.5 6h0m71.5 2.5h0m12.5 0.5h0m5-1.5h0m11.5 1h0m-96 5h0m17.5 1.5h0m5.5 1h0m9-1.5h0m16.5 2h0m2.5 0.5h0m37.5-2.5h0m4-1.5h0m3.5 1h0m2.5 1h0m23-1h0m1.5 3h0m-110 0.5h0m22 2.5h0m19.5 1.5h0m2-3.5h0m1.5 5h0m28.5-1h0m20.5-0.5h0m-97.5 6h0m42.5 2h0m50-4.5h0m3-1h0m13.5 3.5h0m10 5h0m53.5 2.5h0m-120 2h0m36 7.5h0m9 3h0m27-3h0m32.5 1h0m50 1h0m4-4h0m-138.5 5h0m14 6h0m34.5-5h0m17.5 2.5h0m40-0.5h0m3.5-1.5h0m2.5 1.5h0m-202.5 7h0m61.5 1h0m12-1h0m8.5-1.5h0m12-1.5h0m40 4.5h0m15.5 1.5h0m37 4h0m-160 6h0m85.5-3.5h0m64.5 1.5h0m-167.5 3.5h0m13 4.5h0m142 3h0m65 4h0m-20.5 4h0m-20.5 6.5h0m-7.5 13.5h0m39.5-4h0m13 6.5h0m6-2h0m-63.5 10.5h0m4-3h0m9 1.5h0m10 0.5h0m64 1.5h0m-101.5 6.5h0m108.5 0h0m9-3h0m9.5 2.5h0m-128 3h0m3 0h0m23.5-1.5h0m7 1h0m39 4h0m47.5-0.5h0m10-3h0m6 2.5h0m12.5-4h0m-144 6.5h0m22 3.5h0m82 0h0m-46.5 3h0m42.5-1.5h0m40-0.5h0m-105 7h0m22.5 1.5h0m6 0.5h0m36-1.5h0m24-0.5h0m16 0.5h0m32 0.5h0m-162 9h0m0-3.5h0m64.5 0.5h0m4.5 1h0m18.5-0.5h0m55-0.5h0m28-0.5h0m-177.5 5.5h0m4 1.5h0m82-0.5h0m12.5 4h0m40.5-4h0m27.5 3h0m-157 3h0m54.5-0.5h0m16.5-1h0m19.5 5.5h0m14.5-2.5h0m13.5 2h0m24 0h0m1.5-4h0m4.5-1h0m22.5 4.5h0m-164.5 12h0m95.5-3h0m-88 8.5h0m99.5-1.5h0m11.5 0h0m-50 6.5h0m28-1h0m-26 7h0m49.5-0.5h0m-20 7.5h0m-25.5 1.5h0m6 3h0m6.5 0h0m4-1h0m13.5 0h0m-48.5 7.5h0m6.5 1h0m15-2.5h0m41 2h0m-42 2.5h0m8.5 1h0m-45.5 9.5h0m30.5 4h0m8.5-1.5h0m5 2h0m39.5-0.5h0m3.5 2h0m-175.5 6.5h0m123-5.5h0m54.5 4.5h0m-195.5 4h0m9.5 0h0m72.5 0h0m9-0.5h0m60-1h0m23 4h0m18.5-1.5h0m13.5-0.5h0m-195 7.5h0m47.5-2h0m0.5 3h0m21.5-2h0m71-2.5h0m51.5 4.5h0m-213 1.5h0m28-0.5h0m8 0.5h0m26 3h0m12.5 1.5h0m4.5-5h0m16-0.5h0m12 3.5h0m1.5-3h0m47.5-0.5h0m5.5 1.5h0m53.5 1h0m14.5 2h0m-218 6h0m13-4.5h0m3.5 6h0m5-3.5h0m37 3h0m19.5-4h0m-71 6.5h0m165 0.5h0m-148 6.5h0m16 1h0m4.5-2.5h0m3 1.5h0m5.5-0.5h0m41.5 0h0m17 2.5h0m4.5-3h0m-131 5h0m21-0.5h0m13.5 0.5h0m26.5 4.5h0m11 0.5h0m16-1.5h0m14.5 0.5h0m4-2.5h0m-76.5 3.5h0m47.5 1.5h0m3.5 0h0m46 1.5h0m3 0.5h0m-118.5 7.5h0m21-3h0m4.5 4h0m28.5-3.5h0m45 1h0m-107 3.5h0m17 1h0m11 1h0m20 0h0m37.5-2.5h0m8.5 4.5h0m1-4.5h0m-83 10h0m17.5-0.5h0m41 1h0m10.5-5h0m29 5h0m21-1.5h0m-107.5 7h0m8-2h0m-27 5.5h0m0.5 4h0m32-3.5h0m16.5-0.5h0m8 0h0m8.5-0.5h0m-44 9.5h0m2.5-2h0m12 1.5h0m23.5-1h0m-67.5 3h0m2 3h0m57.5-1h0m-29.5 6h0m38 0h0m-41 3.5h0m5.5 3h0m-9 6.5h0" stroke="#cc1010" stroke-width="4"/><path d="M546 281h0m-115 8.5h0m108 3.5h0m-126 8.5h0m173 46h0m-61.5 45.5h0m66.5 31h0m21 17h0m3.5-3h0m8.5 41h0m-121 6h0" stroke="#d0a830" stroke-width="4.5"/><path d="M362 203.5h0m3.5-2h0m4 5h0m3.5 1.5h0m58 0h0m28.5 2h0m0-6h0m2.5 3.5h0m1-3.5h0m2 3h0m-111 3h0m5 2.5h0m7.5-2h0m0 3.5h0m28 1h0m16.5-1h0m2.5 1.5h0m1-2.5h0m8.5-3h0m1.5 4.5h0m8-3.5h0m34 3h0m-118 4h0m3.5-1h0m17.5 0h0m3.5 3.5h0m3-2.5h0m4.5 0h0m2.5 2h0m3-3h0m11.5 1h0m4 1.5h0m4 0.5h0m3.5-3.5h0m3 2.5h0m26.5-2h0m14.5 4h0m-106.5 4.5h0m7-2.5h0m0.5 3h0m5.5 0h0m1-3h0m26 4h0m3-1.5h0m0.5-2.5h0m10 0.5h0m5.5 1.5h0m12.5 1h0m4-1h0m4 2.5h0m6-1.5h0m4.5-1h0m2.5-3h0m10 5h0m10.5 0.5h0m3-2h0m4 0.5h0m8 0h0m-126 7h0m20 1h0m6.5-2h0m9-2h0m4.5 2h0m3-1h0m16.5-2.5h0m5 2.5h0m15.5 1h0m2.5-3.5h0m17.5 4h0m4.5-2.5h0m3-1.5h0m5 2.5h0m3-1.5h0m10.5-0.5h0m4 1h0m-143 9h0m0.5-3.5h0m5.5 4.5h0m0.5-3h0m3-1h0m8-1.5h0m1.5 4.5h0m8-4h0m11.5 1.5h0m4 1h0m0.5-2.5h0m3 0h0m1 2.5h0m4.5 2h0m7-4.5h0m8-0.5h0m15 5h0m9 0h0m0.5-5h0m9 5h0m11-1.5h0m2.5 1.5h0m3-3.5h0m2.5 3h0m3 0h0m3-3h0m1 4h0m10-1.5h0m5.5-4.5h0m-143 7.5h0m3 1h0m5 1h0m2.5-2.5h0m3.5 2h0m7.5-0.5h0m2-2h0m6 3h0m2 1.5h0m10.5-1h0m4.5 1h0m17.5-1h0m6 0.5h0m1.5-2.5h0m3-1h0m7.5 2h0m13 1h0m8 1h0m6.5-1.5h0m3 0.5h0m4 1.5h0m1.5-4h0m3.5 1.5h0m14.5-1h0m3.5-2h0m8 1.5h0m0.5 3h0m9-1.5h0m-149.5 8.5h0m4-2h0m2-2.5h0m12.5 3.5h0m19-2.5h0m3 4h0m5.5-5.5h0m2 4.5h0m2.5-2.5h0m7.5-1.5h0m8.5 2h0m8-0.5h0m3 2.5h0m6.5-3.5h0m3.5-0.5h0m1.5 2.5h0m3 0h0m0.5-3h0m3 4h0m28-3.5h0m18.5 0h0m-140 10h0m0.5-5h0m11.5 5.5h0m8-4h0m5 1h0m17.5 2.5h0m13-4.5h0m0.5 4.5h0m2-1.5h0m4 2h0m0.5-3.5h0m6.5 0.5h0m4.5-1h0m3.5 3.5h0m10-0.5h0m0-4h0m12 0h0m5.5 3h0m10-1h0m7 3.5h0m12-3h0m5 0h0m-137.5 7h0m3 1h0m15-4.5h0m9 3.5h0m11.5 1h0m3-0.5h0m6-4.5h0m5 0.5h0m6 2h0m8.5 0.5h0m10.5 2h0m7-3.5h0m4 2.5h0m6-2.5h0m4 2h0m9.5-2h0m2.5 3h0m4.5-0.5h0m15.5-0.5h0m10.5 0h0m3.5 2h0m-141.5 3.5h0m3.5-2.5h0m1 4h0m8.5 0h0m4-2h0m3 3.5h0m0.5-4.5h0m5.5 0h0m3.5 3h0m32.5-0.5h0m4.5-2.5h0m3-1.5h0m3.5 2.5h0m6.5 0.5h0m4.5 1h0m5.5-1.5h0m2.5-1h0m14 3.5h0m4.5 0.5h0m8.5-0.5h0m3.5-3.5h0m1 2.5h0m11-4h0m3 1h0m0.5 3.5h0m42.5-3.5h0m4 2.5h0m6.5-0.5h0m6 2h0m25 0h0m3-2.5h0m4.5-0.5h0m4-2h0m4 6h0m-238 3h0m23.5-3h0m4.5 2.5h0m5-1.5h0m3 0h0m7.5 5h0m12-0.5h0m1-2.5h0m11.5 2h0m5-1.5h0m1.5-3.5h0m2 2h0m4.5 1.5h0m3 1h0m9.5-3h0m2 4h0m10 0h0m12.5 0h0m0.5-3.5h0m5 2h0m1.5-3h0m1.5 2h0m11.5 0.5h0m2.5 2h0m32.5 0h0m21.5-0.5h0m9.5-3.5h0m3-1h0m4 4h0m5.5-1.5h0m4.5-1.5h0m9 4h0m3.5-4.5h0m-216 5.5h0m2.5 2.5h0m1-3h0m2.5 3h0m1.5-2.5h0m4 5h0m3.5 0.5h0m5-1h0m25-4h0m6.5 1h0m10.5 2h0m2.5-2.5h0m8 1h0m2.5 2.5h0m3-2.5h0m6.5-2.5h0m5.5 6h0m3-5h0m3-0.5h0m3 2.5h0m4 2h0m10.5-4.5h0m1 4h0m5-0.5h0m10-2.5h0m32.5 3h0m1.5-3.5h0m3 3h0m9-3h0m15 4.5h0m9.5 0h0m-211.5 6.5h0m11.5-4h0m6.5 2h0m5.5-0.5h0m3 1.5h0m9.5-0.5h0m8.5-0.5h0m3.5 0.5h0m3-2.5h0m5.5 3h0m4-4h0m1.5 4h0m4.5-5h0m8.5 5.5h0m15-4h0m2.5 3h0m7-1h0m9 0h0m3.5 1h0m4.5-2h0m21 0h0m4.5 0.5h0m3.5 0h0m7 0.5h0m8.5-1h0m6.5 2h0m6.5-1h0m6.5-3.5h0m2.5 3h0m7.5 1.5h0m6-3h0m0.5 3h0m2.5-2h0m3.5-0.5h0m3.5-1h0m2 5h0m0.5-3.5h0m-205 4h0m8 5h0m2-3h0m4.5 1h0m5.5-0.5h0m6.5-1.5h0m3.5 4h0m12.5-3.5h0m7.5-1.5h0m4 1h0m13.5 3.5h0m4 0h0m5-1.5h0m16.5 1h0m3.5-0.5h0m2.5-1.5h0m4.5 3.5h0m4-5h0m2 2h0m3 1h0m8.5-2h0m5.5 0.5h0m1.5 2.5h0m1.5-2.5h0m2.5 2h0m6-0.5h0m6.5 0.5h0m4.5-3.5h0m6 4h0m2.5-2.5h0m3-2h0m0.5 4.5h0m7-1.5h0m7-3h0m13.5 4h0m19 0h0m-225 4h0m3-2h0m0 3h0m13-2h0m1 4h0m12-0.5h0m8.5-1.5h0m3.5-0.5h0m5 0.5h0m7.5 0.5h0m8 0.5h0m2.5-2.5h0m7.5 2.5h0m5.5-0.5h0m2.5 1h0m28-4.5h0m5 2.5h0m3.5-2h0m6.5 2h0m5 2h0m2.5-2h0m13-2.5h0m3 4h0m2-2.5h0m4-2h0m0.5 4h0m3.5 0h0m3-1h0m3-1.5h0m5.5 3.5h0m2-2.5h0m3.5-0.5h0m0 2.5h0m18.5-3h0m7 3.5h0m3-4.5h0m7-0.5h0m3 4.5h0m2.5 1h0m2-4.5h0m1.5 2.5h0m-214.5 3.5h0m6.5 4h0m7.5-1h0m17-1.5h0m6 3.5h0m2-4h0m4 1.5h0m6-1h0m16-2h0m43 0h0m5.5 4h0m8-1h0m2.5-1.5h0m0 3.5h0m5.5-5.5h0m3 0h0m1.5 3h0m2.5 3h0m2.5-5h0m2 4h0m16-5h0m4.5 0.5h0m1 5h0m4.5-5h0m2.5 2.5h0m4.5 1h0m7-3.5h0m3 0.5h0m3 4.5h0m0-4.5h0m48.5 3.5h0m-220.5 3h0m4.5-0.5h0m5 1h0m2.5 3.5h0m3.5-0.5h0m1-3.5h0m2.5 1.5h0m5.5-1h0m2.5 0.5h0m4 2.5h0m76-3h0m3 2.5h0m4.5-4h0m6.5 4.5h0m16-2.5h0m3.5-2h0m20 4.5h0m3.5 1h0m4.5-1.5h0m3-0.5h0m2-2h0m0.5 3.5h0m15.5 0h0m6.5-1h0m10-0.5h0m16.5-3h0m-211 7.5h0m10 0.5h0m97.5-2h0m17 4.5h0m10-5h0m16.5 1.5h0m3.5 1h0m4.5-0.5h0m3.5 1.5h0m6-2.5h0m3.5 4.5h0m2-3.5h0m1.5 2.5h0m21-2h0m11-0.5h0m0 3h0m-86 0.5h0m6.5 1h0m8.5 4h0m1-2.5h0m10.5-1h0m10-0.5h0m2.5 1.5h0m9.5 3.5h0m6-2h0m3.5-0.5h0m3.5-3.5h0m5.5 0h0m0 3h0m2.5 2h0m3-3h0m5.5 0.5h0m11.5 3h0m-76 5h0m16.5 1.5h0m6.5-4.5h0m6.5-0.5h0m4.5 1.5h0m1.5 2h0m4.5-3.5h0m3.5 0.5h0m2.5 2.5h0m0.5-3.5h0m4 1h0m2.5-1h0m5.5 1h0m4.5-0.5h0m-63.5 9.5h0m4-2h0m7.5 3h0m3-2.5h0m2.5 3h0m5.5-6h0m7 4.5h0m5-0.5h0m3-1h0m16.5 1.5h0m2.5-1.5h0m8 3h0m2-6h0m1.5 2.5h0m3.5 2h0m0.5-3.5h0m12 2.5h0m-82 8h0m35-1.5h0m10.5-3h0m5 2.5h0m3.5 0.5h0m2.5-4h0m9.5 0.5h0m1 5h0m1-2.5h0m8-2.5h0m0 4h0m4-3.5h0m4.5 4h0m1-2.5h0m-89.5 8.5h0m2.5-2h0m6 2.5h0m6.5-3h0m11 3h0m6.5-4h0m3-1h0m9 5h0m8.5-2h0m2.5-0.5h0m6.5-1h0m2.5-1.5h0m3.5-0.5h0m7 6h0m15.5-4.5h0m-88 10h0m13-2h0m1-2.5h0m6.5 4.5h0m11.5-2.5h0m11.5-0.5h0m11.5 1h0m4-0.5h0m4.5-1.5h0m1.5 3.5h0m2.5-2.5h0m6 0h0m9 0.5h0m12.5-2h0m7 1h0m7 0h0m1.5 3.5h0m5.5-2h0m2.5 1.5h0m-119 4.5h0m8.5-2.5h0m4.5 2.5h0m1-3h0m6.5 2h0m8.5 2h0m1-3h0m3.5 1h0m2.5 1.5h0m7-0.5h0m10.5 0.5h0m1.5-4h0m6 0.5h0m2 2.5h0m7.5 2.5h0m3.5-2h0m1.5-3h0m5 4.5h0m10.5-4h0m2 4.5h0m4.5 0.5h0m2.5-5.5h0m3.5 3.5h0m9.5-1.5h0m1.5 2.5h0m1-4h0m8.5 4.5h0m46.5-1h0m-155.5 6.5h0m12.5 0.5h0m11.5 0h0m7-5h0m9.5 0h0m0.5 3h0m8.5 0h0m39-1.5h0m10.5 1h0m2 3h0m16.5-0.5h0m2-2h0m16.5 0h0m7.5 1.5h0m11-1.5h0m2-2h0m1 3h0m3.5-2h0m-172.5 7.5h0m8 0h0m7.5-4h0m4 1h0m2.5 1.5h0m11 0h0m8.5-2h0m0 3.5h0m3.5-0.5h0m2.5 1.5h0m8.5-2.5h0m26-2h0m3 4.5h0m2.5-1.5h0m3 0h0m17-2h0m7 0.5h0m0 2.5h0m4-2h0m1.5 2.5h0m3.5-1h0m11.5 1h0m3.5-1h0m3-1h0m6-1h0m4.5-1h0m9.5-1h0m-162 6.5h0m2.5 0h0m10.5 2h0m1.5 3.5h0m1.5-3.5h0m10 3h0m3-5h0m0.5 3h0m3 1h0m3.5 0.5h0m4.5-1h0m4-2.5h0m3 3.5h0m2.5-3.5h0m2-1.5h0m11.5 1.5h0m17-1.5h0m6 5h0m3.5-4.5h0m1.5 2.5h0m2.5-2.5h0m7.5 3h0m9 1h0m8.5-3h0m3 0h0m1 3.5h0m1.5-3.5h0m27-1h0m20 2.5h0m-168 8h0m8-3.5h0m5 3h0m7.5-0.5h0m5.5-3.5h0m0.5 4.5h0m11 0h0m7 1h0m25-0.5h0m6-3h0m3.5 3.5h0m14.5-2h0m1.5-4h0m5.5 4h0m2-2h0m4.5 4h0m4-2h0m5-1h0m2-1.5h0m0 4.5h0m2.5-3.5h0m8-1h0m7 1.5h0m7 3h0m0.5-5h0m3 3h0m3 1.5h0m1.5-2h0m5.5 1h0m3-2h0m8.5 2h0m8.5-4h0m-185 10.5h0m1.5-3.5h0m1.5 3.5h0m8.5-1h0m14-1.5h0m4 1h0m0.5-3h0m10 3.5h0m4-1.5h0m5-0.5h0m8.5 1.5h0m9-2.5h0m1 3h0m29.5 1h0m4.5 0h0m10.5-0.5h0m6 0.5h0m6.5-3h0m10.5 2.5h0m3 1.5h0m0-4h0m5-1h0m3.5-0.5h0m9.5 3h0m3.5 1h0m9.5-3h0m5.5 1.5h0m6-3h0m3.5 5.5h0m6.5-1.5h0m-188.5 3.5h0m4.5-1h0m23 4h0m1.5-4.5h0m6.5 4.5h0m0.5-4h0m2 1.5h0m5 3.5h0m3.5-3.5h0m7 1.5h0m2-2h0m2.5 2h0m7-2.5h0m4.5 3.5h0m9-1h0m6 2h0m6-2h0m4 1.5h0m5.5 0h0m2.5-2.5h0m1.5-2.5h0m5.5 1.5h0m18.5-1h0m10.5 2.5h0m24.5-0.5h0m21.5-1.5h0m5 0h0m3.5 4h0m-189 1.5h0m2.5 5.5h0m18-5.5h0m6 0.5h0m7 0.5h0m2.5 3h0m6-4.5h0m1 2.5h0m2.5 2.5h0m2.5-2h0m5.5-3h0m7 1.5h0m4-0.5h0m17.5 3.5h0m0.5-3h0m9 1.5h0m2-2h0m1 2.5h0m5-3h0m1 3.5h0m12.5-3h0m1 3.5h0m10.5 0.5h0m8-3.5h0m11.5 0.5h0m11.5-0.5h0m9 2h0m5.5 2.5h0m0-3h0m3-1h0m3-1h0m1 3h0m9.5-3.5h0m2 1.5h0m-183 7.5h0m0-3.5h0m4.5 4.5h0m16-4.5h0m3 1.5h0m2 4h0m3 0.5h0m54-2h0m3.5 2h0m5-2.5h0m25 0h0m5-1h0m8 0.5h0m4-1h0m7.5 2h0m14.5-2h0m0 3.5h0m9-2h0m15 2h0m0-3h0m-160.5 8.5h0m4.5-2.5h0m3 2.5h0m1-3h0m54 2h0m4.5 1h0m16-2.5h0m4 3h0m8.5-1.5h0m2-2.5h0m12.5 1.5h0m4.5-1.5h0m20.5 1.5h0m8-2h0m0 5h0m7-5.5h0m8 1h0m-150.5 9.5h0m62-3h0m7.5 0h0m13 3.5h0m1-4.5h0m11 4h0m10 0.5h0m0.5-2.5h0m6.5 0.5h0m2-2h0m9 0h0m3.5 1.5h0m2.5 0h0m4.5-1h0m5.5 0h0m-76 8h0m6.5 0h0m5.5 0.5h0m5 0h0m0-4h0m11.5 3h0m8-2.5h0m12 4.5h0m3-3.5h0m17-1h0m3.5 2h0m-79.5 4h0m3 0.5h0m5.5 2h0m3.5 2.5h0m3-2.5h0m8.5 0.5h0m8.5 2h0m5-5.5h0m0.5 5.5h0m2.5-2h0m3-2h0m2 2.5h0m14-2.5h0m2-2h0m4.5 3h0m10 2h0m-58.5 5.5h0m0-3h0m2.5 3h0m1-4h0m4 4h0m0.5-4h0m2.5 0h0m1.5 4h0m3-1.5h0m3-1.5h0m5-0.5h0m4 0h0m2.5 0.5h0m2.5-1h0m2 4.5h0m1-4.5h0m8 4.5h0m-48.5 4.5h0m7 2.5h0m11-0.5h0m3 0.5h0m18-2h0m4.5-1h0m0.5 3h0m13-3h0m1 2.5h0m2.5-1.5h0m3 1h0m-81 5.5h0m6.5-2h0m8 0h0m6 0.5h0m8.5-2h0m17 1.5h0m24.5 1.5h0m-73.5 7h0m5-2h0m6 2h0m5-1.5h0m6.5-1.5h0m21.5-2h0m3.5 5.5h0m25-4h0m7.5 2h0m3.5 1.5h0m-101.5 3.5h0m5.5 0.5h0m3.5 0.5h0m7-2.5h0m8.5-0.5h0m0.5 5h0m4 0.5h0m4-5.5h0m2.5 2.5h0m5-2.5h0m6.5 1h0m5.5 3h0m15.5-3h0m4.5-1h0m2.5 4.5h0m3-0.5h0m0.5-3.5h0m5.5 3.5h0m1-3.5h0m3 1h0m1 3h0m1.5-4.5h0m7.5 0.5h0m-106 8h0m4.5 0.5h0m1.5-3.5h0m0.5 5.5h0m1.5-3h0m16 1h0m1.5-2.5h0m4.5 4.5h0m3.5-3h0m34-1.5h0m6 1.5h0m3 2.5h0m3 1h0m3.5-4h0m11.5-1.5h0m-187 10.5h0m11.5-2h0m70.5 0h0m17 0h0m2.5 1.5h0m5-4h0m1 3.5h0m5 1.5h0m4-5h0m0.5 3.5h0m7.5 1h0m2.5-1h0m3.5-0.5h0m4.5 1.5h0m7-0.5h0m1.5-4h0m2.5 1.5h0m3 3h0m12.5-1.5h0m2.5-1.5h0m13.5 2.5h0m8.5-4h0m2.5 3h0m-200.5 6h0m3.5-2.5h0m7.5 2h0m3-2h0m12 2.5h0m4 1h0m6-3h0m73 2h0m6-0.5h0m6 2.5h0m8-4h0m3-1h0m4 1.5h0m0 2.5h0m3-0.5h0m4-2.5h0m6 3.5h0m8.5-0.5h0m10.5-2h0m4.5 1.5h0m2-3.5h0m10.5 0.5h0m7.5 3h0m3.5 0h0m4-3.5h0m5 1.5h0m0 3h0m-211 2.5h0m9 1h0m9.5 0h0m6.5-1h0m3 1.5h0m4.5-2.5h0m12.5 1h0m3 2.5h0m3-2.5h0m15 2.5h0m9 0h0m25-2.5h0m0 2.5h0m13-0.5h0m7.5 1h0m3-2.5h0m0.5 3.5h0m5.5-4.5h0m3 1h0m3-1h0m4 1h0m5-1h0m32 2h0m5-1h0m17.5 3.5h0m9-2.5h0m0-3h0m3.5 2.5h0m17.5 2h0m-232.5 4.5h0m3.5 1h0m12 1.5h0m15.5-2h0m6.5-2h0m0.5 4.5h0m5.5-3h0m13.5 1h0m9.5-4h0m9 2.5h0m2.5 3h0m15-0.5h0m2-2.5h0m9.5-1.5h0m14.5 0h0m3 3.5h0m4-0.5h0m4.5-0.5h0m6-1.5h0m7 1.5h0m6 0.5h0m1-3.5h0m9 4h0m1.5-2h0m8 2h0m2.5-3.5h0m5.5 4h0m2.5-1.5h0m0.5-3h0m4 4h0m1.5-3.5h0m3.5 2h0m3.5 2.5h0m1-3h0m4.5-0.5h0m20.5 1h0m16.5-3h0m-236 9h0m6.5-2.5h0m10 2h0m16.5 0.5h0m3.5-1.5h0m20 3.5h0m10-3h0m2 3.5h0m9-3h0m7-1h0m3.5 1h0m6 1h0m9.5 0.5h0m3 1h0m9-4h0m4.5 4.5h0m3.5-0.5h0m2-4h0m6 0.5h0m8 4h0m25-5h0m20 1.5h0m1.5 2h0m8.5 1.5h0m0.5-3.5h0m-162.5 5.5h0m8-0.5h0m3.5 3h0m5.5 1h0m3 1h0m5-3h0m9.5-1h0m4.5 2.5h0m6.5-1.5h0m2.5-1.5h0m15 1.5h0m3-2.5h0m3 0h0m10 0.5h0m6 0.5h0m2 4h0m4.5-1h0m8-1.5h0m0.5-3h0m9 2.5h0m-126.5 7h0m6.5-3.5h0m7.5 3.5h0m8-3h0m12 2h0m14.5 3.5h0m3.5 0h0m1.5-5h0m6.5-0.5h0m6.5 2h0m5.5-1.5h0m2.5 2.5h0m2-2h0m5.5 4.5h0m40-6h0m4 5.5h0m-133.5 0.5h0m0 3.5h0m4.5 1.5h0m5.5-4h0m3.5 2h0m3.5 1.5h0m3 0h0m2.5 0.5h0m2.5-3h0m9-1h0m3.5-0.5h0m20 2h0m3.5 1.5h0m3-2h0m7.5-1.5h0m3.5 2h0m2.5 2h0m0.5-4h0m4.5 1h0m8.5 1h0m16.5-1.5h0m2.5 3.5h0m6.5-2h0m8.5 0.5h0m4.5-1h0m3 0.5h0m-129 7.5h0m2.5-1h0m8 1.5h0m6.5-2h0m8 0h0m5-1h0m2.5-1h0m15 3h0m7 1.5h0m4.5-4h0m12 5h0m6.5-5h0m7.5 3h0m7.5-2.5h0m6.5 2.5h0m3.5 2h0m7-3h0m5 0h0m2 1.5h0m12.5-0.5h0m-138.5 6h0m8-3.5h0m3 1.5h0m6.5 3h0m2-2.5h0m4 2h0m16-3.5h0m4 0.5h0m8 2h0m2.5 1h0m16-3.5h0m5.5-0.5h0m1.5 2.5h0m5 2.5h0m0.5-3h0m11.5 3h0m3-2h0m1-3h0m6 3h0m13.5 2h0m6.5-2h0m0.5-2.5h0m5.5 3h0m5 2h0m3.5 0h0m0.5-4h0m-138 5h0m3.5 3.5h0m3 0h0m8-2.5h0m10 1h0m6.5-2.5h0m15.5 2h0m4.5 3h0m17-1h0m3-2.5h0m3.5-0.5h0m1.5 2.5h0m20-1.5h0m11 0.5h0m2.5-1.5h0m5 0.5h0m0.5 3.5h0m4-1.5h0m6 0h0m3.5-2.5h0m13 2.5h0m0-3.5h0m-139 11h0m2.5-4h0m4 1.5h0m2.5 2h0m9-4.5h0m0.5 3h0m11.5-2.5h0m14 3h0m7.5-0.5h0m9 1h0m12-3.5h0m3.5 3.5h0m5.5-0.5h0m14.5 0h0m2-2.5h0m1.5 4h0m2.5-2.5h0m3 1h0m19-1.5h0m-126 5.5h0m1.5 4h0m6.5-2h0m7 0.5h0m8.5 0h0m3.5-4h0m6 3.5h0m0.5-3h0m11.5 0.5h0m1.5 2.5h0m2.5 0.5h0m3-3.5h0m7 0h0m10.5 3h0m3.5-1h0m3.5-2h0m4.5 5h0m2-3h0m4 0.5h0m19-0.5h0m3-0.5h0m1.5 3h0m3.5-0.5h0m11.5-0.5h0m5-2h0m-130 7.5h0m5 0.5h0m13-2h0m4-0.5h0m2 4h0m2-5h0m0.5 3h0m4.5-2h0m9-2h0m5.5 2h0m10 2.5h0m3 0.5h0m8.5-0.5h0m1.5-2.5h0m3-2h0m0 4.5h0m4.5 0h0m15 1.5h0m1-5.5h0m3 1h0m11 4h0m0-5h0m10 3.5h0m14.5 0h0m-137.5 7h0m2.5-4h0m10 4.5h0m2-1.5h0m4.5-3h0m10.5 2.5h0m35 0h0m2.5 1h0m1-4h0m23.5 4.5h0m19-2.5h0m8-1.5h0m8.5 4.5h0m6.5-2h0m-126.5 7h0m13 0.5h0m1-3h0m12.5 2h0m2.5 1.5h0m2.5-1h0m3.5 0.5h0m7-1.5h0m4.5-2.5h0m6 4h0m2-2h0m3.5-2.5h0m7.5 0h0m7 4.5h0m9.5-4h0m-77 8h0m3.5 1.5h0m2-2h0m3-0.5h0m8 0h0m13 2.5h0m2.5-2.5h0m7-1h0m9.5 1.5h0m19 0.5h0m-62 3h0m3 3.5h0m4.5 0.5h0m4.5 1.5h0m12.5-3.5h0m4 4h0m2-3.5h0m-22 5h0m7.5 3.5h0" stroke="#7c7a88" stroke-width="5.3"/><path d="M362 203.5h0m3.5-2h0m4 5h0m3.5 1.5h0m58 0h0m28.5 2h0m0-6h0m5.5 3h0m-106 5.5h0m7.5-2h0m47 5h0m1-2.5h0m10 1.5h0m42-0.5h0m-90.5 4h0m7 2h0m14.5-2h0m8 2h0m3.5-3.5h0m29.5 0.5h0m14.5 4h0m-99.5 2h0m0.5 3h0m5.5 0h0m1-3h0m26 4h0m3.5-4h0m10 0.5h0m5.5 1.5h0m16.5 0h0m4 2.5h0m6-1.5h0m4.5-1h0m23 2.5h0m7-1.5h0m8 0h0m-126 7h0m59.5-4.5h0m20.5 3.5h0m2.5-3.5h0m17.5 4h0m7.5-4h0m18.5 0.5h0m4 1h0m-137 10h0m0.5-3h0m3-1h0m9.5 3h0m8-4h0m11.5 1.5h0m4 1h0m3.5-2.5h0m1 2.5h0m4.5 2h0m7-4.5h0m23 4.5h0m9 0h0m0.5-5h0m20 3.5h0m2.5 1.5h0m5.5-0.5h0m3 0h0m3-3h0m1 4h0m10-1.5h0m5.5-4.5h0m-143 7.5h0m21.5 1h0m20.5 1.5h0m4.5 1h0m25-3h0m10.5 1h0m21 2h0m6.5-1.5h0m3 0.5h0m4 1.5h0m19.5-3.5h0m11.5-0.5h0m0.5 3h0m9-1.5h0m-145.5 6.5h0m14.5 1h0m22 1.5h0m5.5-5.5h0m2 4.5h0m10-4h0m16.5 1.5h0m3 2.5h0m6.5-3.5h0m3.5-0.5h0m5-0.5h0m49.5 0.5h0m-140 10h0m12 0.5h0m8-4h0m22.5 3.5h0m19.5 0.5h0m0.5-3.5h0m11-0.5h0m3.5 3.5h0m10-0.5h0m0-4h0m12 0h0m5.5 3h0m29-0.5h0m5 0h0m-134.5 8h0m24-1h0m11.5 1h0m9-5h0m5 0.5h0m6 2h0m8.5 0.5h0m17.5-1.5h0m26 3h0m4.5-0.5h0m15.5-0.5h0m10.5 0h0m-134.5 3h0m1 4h0m8.5 0h0m7.5-3h0m5.5 0h0m3.5 3h0m32.5-0.5h0m4.5-2.5h0m3-1.5h0m3.5 2.5h0m6.5 0.5h0m10-0.5h0m16.5 2.5h0m4.5 0.5h0m24-5.5h0m3 1h0m43 0h0m4 2.5h0m12.5 1.5h0m25 0h0m3-2.5h0m-225.5 6.5h0m23.5-3h0m4.5 2.5h0m5-1.5h0m3 0h0m7.5 5h0m12-0.5h0m12.5-0.5h0m5-1.5h0m1.5-3.5h0m2 2h0m4.5 1.5h0m3 1h0m11.5 1h0m22.5 0h0m0.5-3.5h0m5 2h0m1.5-3h0m15.5 4.5h0m32.5 0h0m38-1h0m5.5-1.5h0m-199 3.5h0m2.5 2.5h0m9 2.5h0m33.5-4.5h0m6.5 1h0m10.5 2h0m2.5-2.5h0m10.5 3.5h0m3-2.5h0m6.5-2.5h0m11.5 0.5h0m7 4.5h0m10.5-4.5h0m1 4h0m5-0.5h0m10-2.5h0m32.5 3h0m4.5-0.5h0m24 1.5h0m9.5 0h0m-211.5 6.5h0m26.5-1h0m9.5-0.5h0m12 0h0m3-2.5h0m5.5 3h0m4-4h0m6-1h0m8.5 5.5h0m24.5-2h0m9 0h0m3.5 1h0m25.5-2h0m4.5 0.5h0m3.5 0h0m7 0.5h0m28-3.5h0m2.5 3h0m13.5-1.5h0m3 1h0m3.5-0.5h0m-199 4.5h0m8 5h0m2-3h0m10 0.5h0m6.5-1.5h0m23.5-1h0m17.5 4.5h0m4 0h0m5-1.5h0m22.5-1h0m4.5 3.5h0m9-2h0m14-1.5h0m3 0h0m8.5 1.5h0m19.5-1.5h0m3-2h0m14.5 0h0m32.5 4h0m-225 4h0m3 1h0m13-2h0m1 4h0m12-0.5h0m8.5-1.5h0m16 0.5h0m8 0.5h0m10 0h0m5.5-0.5h0m35.5-1h0m3.5-2h0m14 2h0m18-1h0m14-0.5h0m5.5 3.5h0m2-2.5h0m3.5-0.5h0m0 2.5h0m18.5-3h0m10-1h0m12.5 5h0m2-4.5h0m-213 6h0m6.5 4h0m24.5-2.5h0m6 3.5h0m6-2.5h0m6-1h0m16-2h0m43 0h0m16 1.5h0m5.5-2h0m3 0h0m8.5 5h0m16-5h0m4.5 0.5h0m1 5h0m4.5-5h0m2.5 2.5h0m4.5 1h0m7-3.5h0m6 5h0m0-4.5h0m48.5 3.5h0m-220.5 3h0m9.5 0.5h0m6 3h0m3.5-2h0m12 2h0m76-3h0m14 3h0m16-2.5h0m23.5 2.5h0m3.5 1h0m9.5-4h0m0.5 3.5h0m15.5 0h0m6.5-1h0m26.5-3.5h0m-76.5 5.5h0m73 2h0m-71 8.5h0m1-2.5h0m20.5-1.5h0m21.5 2.5h0m11.5 1.5h0m3-3h0m17 3.5h0m-76 5h0m16.5 1.5h0m13-5h0m4.5 1.5h0m9.5-1h0m7 0h0m2.5-1h0m5.5 1h0m4.5-0.5h0m-63.5 9.5h0m4-2h0m10.5 0.5h0m2.5 3h0m20.5-3h0m16.5 1.5h0m12.5-4.5h0m5.5 1h0m-70 10.5h0m35-1.5h0m10.5-3h0m5 2.5h0m3.5 0.5h0m2.5-4h0m11.5 3h0m8-2.5h0m-71.5 11h0m6.5-3h0m11 3h0m6.5-4h0m3-1h0m9 5h0m11-2.5h0m9-2.5h0m3.5-0.5h0m-52.5 9.5h0m7.5 2h0m11.5-2.5h0m31.5-1.5h0m1.5 3.5h0m8.5-2.5h0m9 0.5h0m12.5-2h0m21 2.5h0m2.5 1.5h0m-110.5 2h0m5.5-0.5h0m16 1h0m6 2.5h0m17.5 0h0m1.5-4h0m8 3h0m12.5-2.5h0m15.5 0.5h0m9-0.5h0m14.5 4.5h0m1-4h0m8.5 4.5h0m-96.5 6h0m11.5 0h0m7-5h0m10 3h0m76.5 2h0m18.5-2h0m18.5 0h0m2-2h0m1 3h0m-169 5.5h0m8 0h0m25-1.5h0m8.5-2h0m0 3.5h0m3.5-0.5h0m2.5 1.5h0m8.5-2.5h0m26-2h0m5.5 3h0m3 0h0m17-2h0m7 3h0m4-2h0m5 1.5h0m15 0h0m3-1h0m10.5-2h0m9.5-1h0m-162 6.5h0m2.5 0h0m12 5.5h0m14.5-5.5h0m0.5 3h0m3 1h0m3.5 0.5h0m4.5-1h0m4-2.5h0m3 3.5h0m2.5-3.5h0m2-1.5h0m34.5 5h0m3.5-4.5h0m4 0h0m7.5 3h0m9 1h0m11.5-3h0m1 3.5h0m28.5-4.5h0m-121.5 10.5h0m11 0h0m7 1h0m25-0.5h0m9.5 0.5h0m14.5-2h0m7 0h0m6.5 2h0m13.5-3.5h0m8-1h0m14.5-0.5h0m6 4.5h0m1.5-2h0m5.5 1h0m20-4h0m-183.5 7h0m1.5 3.5h0m27-4.5h0m10 3.5h0m4-1.5h0m23.5 1.5h0m29.5 1h0m4.5 0h0m16.5 0h0m6.5-3h0m10.5 2.5h0m8-3.5h0m3.5-0.5h0m13 4h0m21-4.5h0m10 4h0m-188.5 3.5h0m27.5 3h0m1.5-4.5h0m6.5 4.5h0m0.5-4h0m2 1.5h0m8.5 0h0m7 1.5h0m2-2h0m2.5 2h0m20.5 0h0m6 2h0m6-2h0m4 1.5h0m5.5 0h0m2.5-2.5h0m25.5-2h0m35 2h0m21.5-1.5h0m8.5 4h0m-189 1.5h0m20.5 0h0m6 0.5h0m7 0.5h0m9.5 1h0m2.5 2.5h0m8-5h0m7 1.5h0m31 1.5h0m2-2h0m7 3h0m12.5-3h0m11.5 4h0m40-1.5h0m5.5 2.5h0m0-3h0m3-1h0m3-1h0m-150 5h0m5 5.5h0m65.5-2h0m30-1h0m19.5 1.5h0m23.5-0.5h0m15-1h0m-156 6h0m4-0.5h0m78.5 3.5h0m23-2.5h0m4.5-1.5h0m28.5-0.5h0m15 0.5h0m-88.5 6.5h0m7.5 0h0m13 3.5h0m12-0.5h0m10 0.5h0m9-4h0m9 0h0m6 1.5h0m4.5-1h0m-70.5 8h0m12 0.5h0m5 0h0m0-4h0m11.5 3h0m20 2h0m-41 4h0m25 0.5h0m3-2h0m16 0h0m2-2h0m-44 10.5h0m0-3h0m3.5-1h0m4 4h0m0.5-4h0m4 4h0m3-1.5h0m3-1.5h0m5-0.5h0m9-0.5h0m-37.5 9h0m18 2h0m3 0.5h0m36-3h0m1 2.5h0m2.5-1.5h0m-78 6.5h0m6.5-2h0m8 0h0m6 0.5h0m8.5-2h0m17 1.5h0m24.5 1.5h0m-73.5 7h0m22.5-3h0m25 3.5h0m25-4h0m7.5 2h0m3.5 1.5h0m-101.5 3.5h0m5.5 0.5h0m19-2.5h0m0.5 5h0m10.5-2.5h0m17 1.5h0m20-4h0m2.5 4.5h0m3.5-4h0m9.5 1h0m2.5-1.5h0m7.5 0.5h0m-106 8h0m24 0.5h0m6 2h0m3.5-3h0m34-1.5h0m9 4h0m3 1h0m15-5.5h0m-187 10.5h0m99-2h0m2.5 1.5h0m6-0.5h0m17 1h0m6-1.5h0m4.5 1.5h0m26.5-1.5h0m16 1h0m8.5-4h0m2.5 3h0m-200.5 6h0m11-0.5h0m3-2h0m12 2.5h0m4 1h0m91 1h0m18-1.5h0m4-2.5h0m25 1h0m6.5-2h0m18 3.5h0m3.5 0h0m-183.5 4.5h0m6.5-1h0m7.5-1h0m15.5 3.5h0m18 0h0m9 0h0m38-0.5h0m7.5 1h0m3.5 1h0m5.5-4.5h0m47 2h0m5-1h0m26.5 1h0m3.5-0.5h0m17.5 2h0m-229 5.5h0m12 1.5h0m15.5-2h0m12.5-0.5h0m23-3h0m26.5 5h0m11.5-4h0m21.5 3h0m17.5-0.5h0m6 0.5h0m1-3.5h0m10.5 2h0m8 2h0m2.5-3.5h0m5.5 4h0m7-0.5h0m14-2.5h0m20.5 1h0m16.5-3h0m-229.5 6.5h0m10 2h0m16.5 0.5h0m23.5 2h0m10-3h0m18-0.5h0m3.5 1h0m6 1h0m9.5 0.5h0m12-3h0m4.5 4.5h0m5.5-4.5h0m6 0.5h0m8 4h0m45-3.5h0m10 3.5h0m-162 2h0m8-0.5h0m9 4h0m3 1h0m19-1.5h0m6.5-1.5h0m2.5-1.5h0m31-0.5h0m6 0.5h0m6.5 3h0m-109 5h0m22-3h0m26.5 5.5h0m3.5 0h0m1.5-5h0m13 1.5h0m5.5-1.5h0m4.5 0.5h0m45.5-1.5h0m4 5.5h0m-129 5.5h0m5.5-4h0m7 3.5h0m3 0h0m5-2.5h0m9-1h0m27 3h0m3-2h0m7.5-1.5h0m19.5 2h0m16.5-1.5h0m9 1.5h0m8.5 0.5h0m7.5-0.5h0m-126.5 6.5h0m14.5-0.5h0m8 0h0m7.5-2h0m22 4.5h0m4.5-4h0m12 5h0m6.5-5h0m7.5 3h0m14 0h0m3.5 2h0m12-3h0m14.5 1h0m-130.5 2.5h0m9.5 4.5h0m6-0.5h0m16-3.5h0m4 0.5h0m8 2h0m2.5 1h0m23-1.5h0m5 2.5h0m15-2h0m27.5-2.5h0m14.5 1h0m-138 5h0m3.5 3.5h0m11-2.5h0m10 1h0m22-0.5h0m4.5 3h0m20-3.5h0m25 0.5h0m11 0.5h0m7.5-1h0m0.5 3.5h0m10-1.5h0m-122.5 7.5h0m2.5-4h0m4 1.5h0m2.5 2h0m9-4.5h0m26 3.5h0m16.5 0.5h0m12-3.5h0m3.5 3.5h0m5.5-0.5h0m23.5 0h0m19-1.5h0m-118 7.5h0m7 0.5h0m8.5 0h0m3.5-4h0m6 3.5h0m0.5-3h0m11.5 0.5h0m1.5 2.5h0m23 0h0m3.5-1h0m3.5-2h0m4.5 5h0m2-3h0m23 0h0m3-0.5h0m1.5 3h0m3.5-0.5h0m11.5-0.5h0m5-2h0m-130 7.5h0m5 0.5h0m17-2.5h0m2 4h0m2-5h0m14-1h0m5.5 2h0m23 0h0m3-2h0m0 4.5h0m20.5-4h0m3 1h0m11 4h0m0-5h0m24.5 3.5h0m-118.5 3h0m48 3.5h0m1-4h0m42.5 2h0m-103.5 8h0m13 0.5h0m1-3h0m12.5 2h0m2.5 1.5h0m2.5-1h0m10.5-1h0m4.5-2.5h0m8 2h0m3.5-2.5h0m14.5 4.5h0m9.5-4h0m-68.5 7h0m8 0h0m13 2.5h0m2.5-2.5h0m-23.5 7.5h0m25.5 2.5h0m2-3.5h0m-22 5h0m7.5 3.5h0" stroke="#e7e8e8" stroke-width="4.2"/><path d="M354 210h0m40.5 5h0m28.5-5h0m9.5 1h0m-80.5 6h0m34 0h0m15.5 2.5h0m10.5-0.5h0m6 7h0m21-4h0m10 5h0m13.5-1.5h0m-87.5 6.5h0m13.5 0h0m3-1h0m61.5-1h0m11-0.5h0m-85.5 5.5h0m-41.5 7.5h0m5 1h0m2.5-2.5h0m13-0.5h0m6 3h0m2 1.5h0m32.5-1h0m6 0.5h0m25-0.5h0m23-2.5h0m-104.5 5.5h0m44.5 1.5h0m16 0.5h0m25.5 0.5h0m3.5 1h0m-93 1.5h0m68.5 2.5h0m-50 4h0m126.5 5h0m-121.5 6.5h0m72-4.5h0m31.5 2.5h0m106-2h0m-173.5 7h0m37-1.5h0m12 4h0m32.5-2h0m66-2h0m3-1h0m14 1h0m12.5-0.5h0m-212.5 5h0m2.5 3h0m1.5-2.5h0m65 2h0m17.5 3.5h0m-83.5 4h0m74.5 0.5h0m75 0h0m6.5-1h0m16.5 1h0m6.5 0h0m9.5-3.5h0m-188 8.5h0m82 0.5h0m24.5-2h0m7 3h0m4-0.5h0m12.5 0h0m10.5 0.5h0m6 0h0m-175.5 1.5h0m38 2.5h0m5 0.5h0m18-1.5h0m15.5 3h0m72.5-5h0m0.5 4h0m3.5 0h0m61.5-0.5h0m-200.5 6.5h0m99.5 0.5h0m8-1h0m15 2.5h0m47.5-5h0m-164.5 6h0m7.5 4.5h0m15-3h0m87.5-2h0m26 0h0m31 3.5h0m-160 4.5h0m151-0.5h0m8 0.5h0m9.5-1h0m39 4h0m-47 3h0m22.5-2.5h0m5.5 0h0m0 3h0m11-0.5h0m-29 8h0m11-4h0m-35.5 11h0m18-1h0m5-0.5h0m33.5 2.5h0m1 5h0m9-1h0m4-3.5h0m-31 8.5h0m9-1.5h0m13 4h0m15.5-4.5h0m-88 10h0m14-4.5h0m95 1h0m-109.5 7.5h0m29 1h0m14-1h0m27.5 2h0m22.5 0h0m4.5 0.5h0m6-2h0m9.5-1.5h0m57.5 2h0m-155.5 6.5h0m40.5-4.5h0m60.5 5.5h0m18.5-2.5h0m41.5-1h0m-157 3.5h0m4 1h0m2.5 1.5h0m63 2.5h0m50 0h0m-122.5 3.5h0m3 0h0m10 3h0m54.5-5.5h0m44 1.5h0m-121 9.5h0m8-3.5h0m12.5 2.5h0m5.5-3.5h0m76.5 1.5h0m15.5-0.5h0m0 4.5h0m24.5 0h0m-140 4h0m14-1.5h0m23.5-0.5h0m8.5 1.5h0m54.5 1h0m44-1h0m-149.5 3h0m38.5 5h0m26.5-1h0m69-1.5h0m51-2h0m-183 11h0m33.5-1.5h0m6-4.5h0m40.5 1.5h0m12 2h0m38-2h0m44.5 2.5h0m11.5-2h0m-183 7.5h0m4.5 1h0m19-3h0m59 2.5h0m3.5 2h0m30-2.5h0m13-0.5h0m4-1h0m22 0h0m0 3.5h0m24 0h0m-160.5 5.5h0m7.5 0h0m75.5-2.5h0m12.5 1.5h0m54.5-3.5h0m-142.5 10.5h0m83.5-4h0m42.5 2h0m12.5-1h0m-69.5 8h0m45-2h0m17-1h0m3.5 2h0m-79.5 4h0m8.5 2.5h0m3.5 2.5h0m11.5-2h0m8.5 2h0m5-5.5h0m0.5 5.5h0m7.5-1.5h0m20.5-1.5h0m10 2h0m-56 5.5h0m8-4h0m16.5 0.5h0m7 4h0m-32.5 7h0m36.5-3h0m0.5 3h0m19.5-1h0m-79 10h0m39-3h0m-29 6.5h0m7.5 0h0m6.5 1h0m21 0h0m10 3h0m6 0h0m1-3.5h0m4 4h0m-92.5 4.5h0m1.5-3.5h0m19.5 1h0m24 9.5h0m4-2.5h0m3 3h0m-52 4.5h0m23-3h0m4 1.5h0m0 2.5h0m13 0.5h0m36-4h0m20 4h0m-202 3.5h0m19 0.5h0m17-1.5h0m6 0h0m49 2.5h0m32.5-2h0m12-1h0m63.5-1h0m-211.5 9h0m37.5-1.5h0m19.5 2.5h0m18.5-1.5h0m43.5-1.5h0m60.5 2.5h0m9.5-0.5h0m-190 6h0m36.5-1.5h0m32 4h0m9-3h0m29 2.5h0m17 0h0m-66 4h0m9.5-1h0m28.5 1h0m3-2.5h0m3 0h0m31-0.5h0m-103.5 9.5h0m20-1h0m26-2h0m14.5 3h0m7.5 2.5h0m-89.5 0h0m0 3.5h0m13.5-0.5h0m24-2.5h0m37.5 2h0m2.5 2h0m5-3h0m27.5 3h0m-106.5 5.5h0m47.5-0.5h0m45-2h0m17 1.5h0m7 1.5h0m-126 5.5h0m11-2h0m8.5 0.5h0m74.5 3h0m4-5h0m6 3h0m13.5 2h0m12.5-1.5h0m5 2h0m3.5 0h0m-131 4.5h0m24.5-4h0m37 4h0m6.5-3h0m1.5 2.5h0m43 0h0m9.5-2.5h0m13-1h0m-43 9.5h0m-98 4h0m49 2.5h0m3-3.5h0m7 0h0m28 2.5h0m-68.5 5h0m8.5 1.5h0m4.5-2h0m27.5 3h0m32.5 1h0m25-2h0m-123 7h0m2.5-4h0m10 4.5h0m2-1.5h0m15-0.5h0m97.5 2h0m6.5-2h0m-61 3h0m-60.5 8.5h0m5.5 3h0m7.5 4h0m4.5 1.5h0" stroke="#9090e2" stroke-width="4.6"/><path d="M462 207.5h0m1-3.5h0m-96.5 10h0m44.5 0h0m-62.5 4h0m21-1h0m3.5 3.5h0m7.5-2.5h0m-34 7.5h0m43 0h0m-21 8.5h0m15.5-4h0m29 1h0m48 0h0m-125.5 8h0m0.5-3.5h0m17-1h0m49 0h0m33.5 5h0m16.5-3.5h0m-104 7h0m60.5-2h0m47 2h0m18-3h0m-132 11.5h0m37.5-3.5h0m51.5 1.5h0m34.5-2.5h0m-96.5 7.5h0m30.5-2h0m0.5 4.5h0m2-1.5h0m56.5-1h0m7 3.5h0m-120.5 4h0m41.5 0.5h0m36 0.5h0m11-1h0m6-2.5h0m4 2h0m9.5-2h0m-105 7.5h0m17-0.5h0m67 1.5h0m35 1h0m3.5-3.5h0m15.5 3h0m53-1.5h0m42.5-3h0m4 6h0m-111.5 3h0m68 2h0m35.5 0.5h0m-197.5 6.5h0m5-1h0m73-4h0m6 2h0m64.5-2h0m12 0h0m-175.5 7h0m12 1.5h0m21 0.5h0m17.5 1h0m28-3.5h0m26.5 1h0m44.5 0h0m47.5 3.5h0m0.5-3.5h0m-175 9h0m12.5-3.5h0m11.5-0.5h0m39 3h0m14.5-3.5h0m2 2h0m39.5-2h0m19 2.5h0m20.5 1h0m-98.5 2h0m15 2.5h0m5 2h0m15.5-4.5h0m3 4h0m13-1.5h0m39.5 2h0m10-5h0m3 4.5h0m-169.5 3.5h0m85 3.5h0m10-2.5h0m5-2h0m-107.5 6.5h0m8 0.5h0m85.5 2.5h0m58.5 0h0m37.5-0.5h0m-184.5 5h0m97.5-2h0m17 4.5h0m30-2.5h0m8 1h0m9.5 2h0m2-3.5h0m1.5 2.5h0m21-2h0m-75 3h0m6.5 1h0m42 5h0m6-2h0m-18 3.5h0m17-0.5h0m6 3h0m-24 2h0m34 3h0m8 3h0m3.5-3.5h0m3.5 2h0m12.5-1h0m2.5 7.5h0m1-2.5h0m-89.5 8.5h0m2.5-2h0m43.5 5.5h0m11.5 1h0m4-0.5h0m8.5-0.5h0m34.5-0.5h0m8.5 3.5h0m-98 4h0m7.5-1h0m13 0h0m27.5-2h0m13 3h0m6.5 1.5h0m-16 4.5h0m39-1.5h0m10.5 1h0m44.5 2h0m-40.5 3h0m5.5 3h0m27.5-3h0m-84.5 5.5h0m28 1.5h0m27.5-1.5h0m52.5 1.5h0m-155 7.5h0m62.5-2h0m19.5-2.5h0m16 4h0m5-1h0m19.5 0h0m10.5 1h0m13-1.5h0m8.5 2h0m-176.5 6.5h0m29.5-1.5h0m37-2.5h0m71.5 5h0m0-4h0m31-0.5h0m5.5 1.5h0m9.5 2.5h0m-117 1.5h0m39-1h0m-52 9h0m16.5-2h0m17.5 3.5h0m17.5-4h0m14.5 4h0m30-2.5h0m11.5-0.5h0m31-1h0m-181 5.5h0m28.5 6h0m52.5 4h0m4.5 1h0m30.5-3.5h0m37.5 1.5h0m8 3h0m-30.5 3h0m6.5 0.5h0m-12.5 3.5h0m-41 6.5h0m43.5 6h0m5.5-1h0m8 4.5h0m-9.5 5h0m-48.5 13h0m5-1.5h0m-25 6h0m7-2.5h0m13 5h0m-30.5 5.5h0m1.5-3h0m65.5 0h0m9.5-0.5h0m-164 7h0m70.5 0h0m24.5-2.5h0m6 5h0m4-5h0m0.5 3.5h0m10 0h0m16.5-3.5h0m20.5 1.5h0m-172.5 5h0m32.5 0.5h0m79 1.5h0m14-1.5h0m28.5 3h0m15-0.5h0m27.5-3.5h0m5 1.5h0m-211 5.5h0m100 0h0m23.5 0.5h0m12-1h0m4 1h0m59.5 3.5h0m-164.5 6.5h0m40-0.5h0m17-3h0m27 2h0m8.5-1h0m6-1.5h0m23 2.5h0m20.5-4h0m5.5 0.5h0m7 4.5h0m1-3h0m-30 4h0m21.5 3.5h0m9-2h0m-75.5 9.5h0m12.5-2.5h0m9.5-0.5h0m-120 3.5h0m8.5 11h0m35-2.5h0m20.5-2h0m-64 10h0m19.5-3h0m30.5 5.5h0m5.5-0.5h0m7 2h0m41.5 1h0m-13.5 4h0m32 2.5h0m-120.5 5.5h0m11.5-2.5h0m21.5 2.5h0m46.5-2h0m1.5 4h0m2.5-2.5h0m-102.5 9h0m54.5 4.5h0m11.5 0h0m9 0h0m-18.5 5h0m27 1.5h0m27-4h0m-76.5 10h0m17.5 0h0m-44 5.5h0m2-2h0m33.5-1.5h0m9.5 1.5h0m19 0.5h0m-37.5 5h0" stroke="#cc1010" stroke-width="4"/><path d="M517 319.5h0m95.5 72h0m-125 110.5h0m93 10h0" stroke="#d0a830" stroke-width="4.5"/><path d="M361.5 209.5h0m1.5-2.5h0m2-2h0m8.5 0h0m52.5 4h0m32.5-2h0m9.5 0h0m-117 7h0m3 0h0m3.5-4h0m5.5 1.5h0m7-1.5h0m3.5 5.5h0m2-5.5h0m4.5 4h0m27.5 0h0m11.5 2h0m1.5-3.5h0m7.5 2h0m5.5 0h0m21.5 1h0m3.5-2.5h0m3.5-2h0m7 1h0m-121.5 8.5h0m9.5-3.5h0m5 2.5h0m4-0.5h0m11 2.5h0m11.5-3h0m4 0h0m0.5 3h0m19.5 0h0m6.5 0h0m3-1h0m1-3.5h0m13.5 2h0m5.5-2.5h0m0.5 4h0m2.5-3.5h0m1 3.5h0m3.5 0h0m11-2h0m2.5-1.5h0m-113 8.5h0m14-3.5h0m2 4.5h0m6.5 0.5h0m3-2.5h0m2.5 0.5h0m19.5 1.5h0m6-3.5h0m5 1h0m2.5 3.5h0m14.5-3.5h0m15 1h0m18.5-1.5h0m5.5-1h0m5 0h0m0.5 4h0m-124.5 2h0m4.5 0h0m1 3.5h0m2.5-1.5h0m9.5 2h0m8.5-1.5h0m6.5 0h0m5.5 2h0m6-4h0m7.5 4h0m3-3.5h0m2 2h0m13 1.5h0m3-3.5h0m0 3.5h0m5.5-5h0m9 4.5h0m1.5-4.5h0m2.5 1.5h0m4 3.5h0m3-4.5h0m0 4.5h0m4.5-3.5h0m3.5 3h0m3.5 0h0m9 1h0m5 0h0m0-3h0m12 3h0m-148 4.5h0m6 1.5h0m17.5-5h0m3 2.5h0m6-2h0m6 0h0m13 5h0m6.5-5h0m7 4.5h0m3-1.5h0m3.5-2h0m5-2h0m4 2h0m2.5-0.5h0m4.5 1h0m16 0.5h0m2.5-1h0m1 3.5h0m27-2.5h0m6-1.5h0m3.5 3h0m6.5 0.5h0m-137.5 6.5h0m6.5 0h0m3 0h0m11-3h0m6 3h0m1.5-3h0m2-2h0m5.5 1.5h0m12 3h0m3-3.5h0m5 1.5h0m2.5-3h0m5.5 4.5h0m3-2.5h0m0 3.5h0m2-5h0m5.5 5.5h0m4-2.5h0m2.5 1h0m3-4h0m25.5 5.5h0m3-0.5h0m8-4.5h0m10 1.5h0m3-2.5h0m0.5 5h0m5.5-3h0m1.5 3h0m-146 1h0m3.5 1.5h0m7.5 2h0m12-3h0m0 4h0m4.5-1h0m2-2.5h0m13.5 1.5h0m12.5-2h0m0 5h0m8-3h0m8.5 0h0m10.5-1.5h0m1.5 3.5h0m14-3h0m2 4h0m2.5-5h0m12.5 2.5h0m2.5-0.5h0m11.5 1.5h0m1-3h0m2.5 5h0m17-5.5h0m-142 9.5h0m0.5-3.5h0m3.5 3h0m4-1h0m10 3h0m5-1h0m1.5-2.5h0m2.5 3h0m3.5 1h0m1-4.5h0m2 4h0m5-5h0m31 4h0m4.5-3.5h0m3.5 1.5h0m8-1h0m3.5 2h0m9-3h0m4.5 5.5h0m0.5-5.5h0m18 0.5h0m2.5 2h0m3 2h0m6.5-4.5h0m7 3.5h0m0.5-3h0m-138 6h0m5.5 1h0m3.5 3.5h0m12-4.5h0m8.5 1h0m0.5 3h0m8-3.5h0m4.5 2.5h0m15.5 0h0m17 0.5h0m7.5-4h0m3 1h0m10.5 2h0m1-3.5h0m2 2h0m2 2.5h0m11.5-3h0m3.5 3h0m15.5-3h0m8 0h0m-136 5.5h0m7.5 0h0m12 4h0m4.5-4h0m3.5 2h0m6.5-2h0m2.5 4.5h0m2-3.5h0m2 3h0m3.5-3h0m2.5 4h0m1-4.5h0m4 3.5h0m5.5-4h0m13.5 2h0m7.5-2h0m2.5 1.5h0m1 2.5h0m3.5 0.5h0m8-2h0m5-0.5h0m5.5-0.5h0m6.5-2.5h0m11 5.5h0m0.5-4h0m4 1h0m10.5 0h0m2.5 0.5h0m23 1h0m4-3.5h0m0 4.5h0m3-4.5h0m8 5h0m11 0h0m25 0h0m15.5-2h0m-230 4h0m6.5-0.5h0m7.5 3h0m4-1h0m16 2.5h0m1.5-3h0m5.5-1h0m3.5 0h0m10.5 1.5h0m4-1.5h0m15-1h0m6.5 0h0m4 3h0m8-3.5h0m1.5 4h0m2-3h0m12.5 0.5h0m3 0h0m11 4.5h0m6.5-1h0m1.5-2.5h0m11 2.5h0m1.5-2.5h0m2.5 3.5h0m13.5-1.5h0m3-3h0m2.5-0.5h0m6.5 3h0m3 0.5h0m1-3h0m4.5 3h0m1.5-3h0m2.5 1.5h0m0.5 2.5h0m2-2.5h0m9.5-1.5h0m2.5 2.5h0m8.5-2.5h0m8 3.5h0m8.5-1.5h0m2.5-2h0m-230.5 5h0m11 3.5h0m17-3h0m8.5 1h0m10 1h0m2.5 2h0m1-4h0m2.5 0h0m1 3.5h0m3.5-2h0m0 2.5h0m5-0.5h0m3.5-2.5h0m2.5 2.5h0m11.5-3.5h0m5.5 4.5h0m0.5-2.5h0m8-2.5h0m6 1.5h0m11.5 2.5h0m2.5-1.5h0m7.5-2h0m3.5 0h0m0.5 4.5h0m4-3h0m15.5 2.5h0m9 0h0m9-1h0m4.5 1h0m9-3.5h0m2.5-0.5h0m9.5 2h0m5.5 2h0m4.5-3h0m3.5 0h0m1 2.5h0m2.5-3.5h0m4.5 1h0m8-0.5h0m7 0.5h0m-216.5 6.5h0m3 0.5h0m3.5 2.5h0m1-3h0m3.5 2.5h0m7-4h0m12.5 4.5h0m5.5-4h0m2.5 3h0m2.5-2h0m12 0.5h0m4.5 2h0m7.5-0.5h0m2.5 0.5h0m3-4.5h0m1 3h0m4.5-1h0m9.5 1.5h0m2.5 0.5h0m5.5-2h0m8 0h0m8-2h0m8 5.5h0m5.5-1.5h0m4.5-1.5h0m0 2.5h0m5.5-4h0m30.5-1h0m6 2h0m14.5 0.5h0m17 2h0m-207 6.5h0m3.5-2.5h0m5.5 1h0m12 1h0m0-4.5h0m19 2.5h0m15.5-1.5h0m5 2h0m3.5 0.5h0m2.5 1.5h0m2-4h0m3.5 0.5h0m1.5 4h0m21-5h0m3 2.5h0m7.5-2h0m14.5-1.5h0m20.5 0.5h0m15.5 2.5h0m4 0.5h0m1 2.5h0m2-4h0m15.5-1h0m17.5 0.5h0m5 1h0m3 3h0m8-1h0m-214.5 2.5h0m5.5 1.5h0m7.5-0.5h0m12 0h0m8-1h0m6-1h0m4 4h0m17 0.5h0m4.5-4h0m12.5 4h0m5-2.5h0m27.5 2.5h0m3 0h0m20-2.5h0m2.5 2.5h0m23.5-4h0m0 3h0m15 2h0m3.5-4.5h0m4 1.5h0m12.5-1h0m7.5 1.5h0m13-1h0m3 0h0m0.5 3.5h0m2.5-4.5h0m-219.5 10h0m4.5-4h0m3 2h0m5-1.5h0m3 0h0m3.5 2h0m2.5 0.5h0m2-2.5h0m6.5-1h0m7 5h0m20.5-4h0m14 0h0m37 0.5h0m3.5 3.5h0m26.5-3.5h0m3.5 2.5h0m2-2h0m1 2.5h0m1.5-4.5h0m4 2.5h0m5 2.5h0m6.5-1h0m7.5-3.5h0m17 4h0m3-3.5h0m0.5 3h0m3.5-2h0m1.5-2.5h0m0.5 5h0m3.5 0h0m10.5-2h0m2.5 2h0m0.5-4.5h0m4.5 2.5h0m2 2.5h0m2-3.5h0m8.5 0.5h0m-224 5.5h0m11.5 1.5h0m26.5-1.5h0m72-1.5h0m9 5h0m3.5 0h0m9.5 0h0m2.5-1h0m3.5 0h0m2.5-2.5h0m2 4h0m16-2h0m7.5-3h0m4.5 0h0m25.5 0h0m3-0.5h0m5.5 1h0m16 3h0m3.5-2h0m-203.5 6.5h0m11-2.5h0m6 2h0m84 0h0m6 0.5h0m3 2h0m5.5-2.5h0m13.5 0h0m4 3h0m1.5-5h0m6.5 5.5h0m1-3h0m2-2h0m19 3.5h0m11.5-2h0m7.5 0h0m2-2h0m6 2h0m7.5-2h0m12.5 4.5h0m-101 5h0m2.5-1.5h0m3.5-2.5h0m0.5 3.5h0m3 0h0m3.5-1h0m17-1.5h0m2 2.5h0m8.5-2.5h0m11 1h0m2.5-0.5h0m6.5 3.5h0m1-2.5h0m-39.5 5h0m3.5 2h0m5-2.5h0m3 0.5h0m7.5 1.5h0m7.5-2.5h0m6.5 4.5h0m16.5-1h0m4 0h0m4 0h0m16-4h0m2 2h0m-68 7h0m3 0h0m3.5-2.5h0m19 1.5h0m4 4h0m3-1h0m2.5-1.5h0m5.5-1.5h0m2 2.5h0m9.5-4h0m2.5 3.5h0m1-3h0m13 3.5h0m11 0.5h0m-82 5.5h0m4.5-2h0m2.5 3h0m2.5-1h0m5.5-1.5h0m3-2.5h0m2 3.5h0m1.5-3h0m2.5 4.5h0m3.5-2.5h0m2-2h0m11.5 3.5h0m5-2.5h0m8 3h0m6-1.5h0m9.5 2.5h0m0-5h0m-69.5 8.5h0m2.5-3h0m8.5 1h0m2.5 3.5h0m0.5-4.5h0m1.5 2.5h0m5-2h0m10.5 4h0m5-2h0m4-2h0m6-0.5h0m7 4h0m5 0.5h0m6.5-1h0m3-1h0m9.5 0h0m6 2.5h0m2.5-2h0m-89.5 3h0m3.5 1h0m4.5 2h0m3 2.5h0m0-5.5h0m14 1.5h0m17.5 3.5h0m4.5-1.5h0m0-3.5h0m24 5h0m14.5-3h0m2 2.5h0m9.5-1h0m16.5-3h0m-105.5 9.5h0m18-2.5h0m10-1.5h0m4 1h0m5 0.5h0m6.5-1.5h0m14 4h0m0.5-3.5h0m13 1h0m8.5 1.5h0m2.5 1.5h0m3.5-3.5h0m5.5 2.5h0m26.5-0.5h0m47.5 0.5h0m-163.5 3.5h0m3-1h0m7.5 1h0m3.5-1h0m9 4.5h0m5-5h0m11 2.5h0m3-0.5h0m2 3.5h0m8-0.5h0m2-4.5h0m11.5 0h0m2.5 3.5h0m10-1h0m12 2h0m1.5-5h0m1 5.5h0m3-5.5h0m6 4.5h0m11.5-2h0m6 3h0m13-2h0m1.5-2.5h0m2 5h0m1.5-4h0m6 4h0m2.5-2.5h0m12.5-3h0m10.5 3.5h0m-170.5 6h0m6 0h0m6.5 1.5h0m3-0.5h0m8-2.5h0m7 3.5h0m1.5-3.5h0m2 3h0m19.5-1h0m3.5-4.5h0m0 4h0m4-1h0m4 2h0m4.5 0.5h0m1.5-5h0m1.5 2.5h0m1.5-3h0m3.5 3.5h0m8-2.5h0m4.5 2h0m6-1.5h0m25.5 0.5h0m1.5 3h0m24.5-1h0m5 0.5h0m0.5-3h0m2.5 2.5h0m8.5-0.5h0m1-2.5h0m2 2.5h0m1.5 2h0m1-2.5h0m2-2h0m-175.5 9h0m18-1h0m1 2.5h0m6-3h0m6.5-0.5h0m5.5 0.5h0m7 2h0m5.5 0h0m6.5 1h0m9.5-3h0m0 3h0m7-2h0m5.5 1h0m3-1.5h0m6.5 0h0m6 1.5h0m3-3h0m7 2.5h0m6-3.5h0m2.5 0.5h0m3 3h0m21-1.5h0m2.5 2.5h0m0.5-3h0m8 1.5h0m2 2h0m2-2h0m4-0.5h0m2.5 2h0m2.5-4h0m7.5 1h0m-170.5 6h0m5.5-2h0m6.5 6h0m3.5-1.5h0m6 1.5h0m7.5-2.5h0m8 0.5h0m5-1.5h0m3.5 1.5h0m4-1.5h0m16-2h0m13.5 3.5h0m13.5-2h0m3.5 2.5h0m6.5 0.5h0m7-0.5h0m2.5-1.5h0m3.5-1.5h0m20.5 4h0m19-4.5h0m3 4.5h0m22.5-0.5h0m-179 2.5h0m3.5 3h0m6-1h0m26-3h0m3.5 5h0m3.5-1h0m3.5 0h0m3 1.5h0m0.5-3h0m2.5-2.5h0m6.5 4.5h0m10 0h0m1.5-4h0m1.5 5h0m1.5-3h0m7 2.5h0m23.5-4.5h0m6 1h0m6.5-0.5h0m0.5 4h0m8-2.5h0m11.5 0.5h0m5.5 1.5h0m3.5 0h0m4-4h0m8 3.5h0m9.5-2h0m6 2h0m3.5 1h0m-176.5 3h0m14 1h0m13.5-1h0m2.5 2.5h0m7.5 0h0m28-3.5h0m13 3.5h0m7.5-4.5h0m4-0.5h0m6 2.5h0m13.5 2h0m3.5 0.5h0m1.5-2.5h0m7.5 2h0m10.5 0.5h0m4 1h0m3-0.5h0m6.5-1h0m3-1.5h0m3.5-0.5h0m4.5-0.5h0m6.5 0.5h0m2-2h0m3 3.5h0m6.5-2h0m5.5 1h0m5 2h0m-179.5 4.5h0m7.5-3h0m7.5 3h0m3.5 1.5h0m1-2.5h0m6 0.5h0m2 3h0m7.5-3.5h0m8.5 3.5h0m3-4.5h0m2.5 1.5h0m1 3h0m19-6h0m12 3.5h0m19.5-0.5h0m6.5 0.5h0m12-3h0m12 3h0m6-2.5h0m1 4h0m25-3h0m6.5 3h0m7.5-4.5h0m1 5h0m-174 2h0m4.5 4.5h0m0-5h0m3.5 4.5h0m7.5-0.5h0m4-0.5h0m5.5-1.5h0m3.5 2.5h0m2.5-5h0m0.5 3.5h0m45 0.5h0m6-2.5h0m3-0.5h0m8 0.5h0m3.5 1h0m9 0.5h0m7.5-3h0m2 4.5h0m5.5-2h0m1.5 3h0m5.5-5.5h0m9.5 0.5h0m5 1.5h0m4 1.5h0m8.5-1h0m0 3h0m2-5.5h0m8.5 2.5h0m3.5-1.5h0m4 1.5h0m6 2h0m-159 6.5h0m7.5-2.5h0m52.5-2.5h0m5.5 2.5h0m1 2.5h0m16-3h0m3.5-2h0m11 2.5h0m3-0.5h0m3 0.5h0m4.5-2.5h0m5.5 1.5h0m2.5-1h0m5 3.5h0m7.5 1h0m0.5-5h0m8 3.5h0m5-1.5h0m-134.5 4h0m43 3h0m2 2h0m3.5-1h0m1-4.5h0m3 0.5h0m2 3.5h0m8-2.5h0m12.5 2h0m8-2h0m1 3h0m3-2h0m3.5-2.5h0m26 5h0m7-5h0m8 4h0m-85 4.5h0m7.5-1.5h0m3 0h0m16 1h0m13.5-1.5h0m11.5 0.5h0m0.5 3.5h0m5.5 1.5h0m0-4h0m2-2h0m7.5 2h0m2 2.5h0m4 0.5h0m3.5-3.5h0m0 3.5h0m4.5-1.5h0m6-2.5h0m-85.5 6h0m9.5 0h0m5.5 1h0m15.5 0h0m2.5 0.5h0m19-1h0m2 2h0m5.5 1h0m5.5-0.5h0m9 0.5h0m3.5-3.5h0m3-0.5h0m-73 7h0m33.5 2h0m7 1.5h0m3.5-1.5h0m4.5 0h0m2-2.5h0m1.5 4h0m2.5-3h0m5.5 1.5h0m2 1.5h0m1-4.5h0m3.5 2h0m3 3h0m-69 5.5h0m3-1h0m6 1.5h0m17-2.5h0m4.5 2h0m9-3h0m3 3.5h0m10.5-2h0m3-2h0m4.5 1h0m11.5 0h0m-92.5 7.5h0m2.5-1h0m15 3h0m2-3.5h0m15 2h0m5-0.5h0m16.5 2h0m3-5h0m2 3.5h0m4-0.5h0m1.5-2h0m10 1.5h0m6.5-1h0m1.5 2.5h0m2.5-2.5h0m4.5 0.5h0m2 2h0m-99 3h0m2.5 2.5h0m0.5-3.5h0m2 2.5h0m4.5-1.5h0m2-2h0m3.5 4.5h0m9.5-2h0m12 1.5h0m3 0h0m7-2h0m0.5 2.5h0m3.5-0.5h0m2.5-1h0m10 0h0m5 1h0m3-2.5h0m2.5-0.5h0m2.5 2h0m3 0h0m-90 7.5h0m15.5 1.5h0m2-3.5h0m3.5 1h0m5 1.5h0m0-3h0m8 0.5h0m8-2.5h0m2 3h0m17.5 2.5h0m19-5h0m6 4.5h0m0.5-4.5h0m-88 10.5h0m12.5-1.5h0m0.5-3.5h0m2.5 5h0m2.5-2h0m16.5 1.5h0m9 0h0m3 0h0m6.5-4.5h0m5.5 4h0m3-2h0m7 2.5h0m6-4.5h0m13.5 4.5h0m7-2.5h0m2 2h0m2.5-2h0m-199 9.5h0m10.5-1h0m3-1.5h0m3.5-3h0m3 4h0m1.5-3h0m5 5h0m57.5-1h0m7-4.5h0m7 5h0m0.5-4.5h0m3 2.5h0m8 1.5h0m6.5-3h0m2.5-1.5h0m36.5-0.5h0m3.5 0.5h0m3.5 3.5h0m9.5-2h0m4 4h0m0.5-3h0m3.5 2h0m7.5-3.5h0m-186 9.5h0m4.5 0h0m7.5-0.5h0m10-3h0m3 4.5h0m58.5-3h0m5 2.5h0m3.5-1h0m10.5-3.5h0m7 3.5h0m2-2h0m2.5-0.5h0m5 3h0m20-3h0m3-1.5h0m3.5 4.5h0m0.5-3h0m8 1.5h0m3.5-0.5h0m4.5-2.5h0m5.5 4.5h0m2-2.5h0m6.5 2h0m4-2h0m19.5 1.5h0m-220.5 8h0m7.5-1.5h0m3.5-4h0m1 4h0m7-2h0m5 2h0m4 0h0m8-4h0m9.5 2h0m3 3.5h0m0.5-5h0m10 4h0m2-4h0m6.5 4.5h0m0-5.5h0m2 3h0m1-3h0m22.5 4h0m4.5-2h0m17 0h0m7-1h0m12 3h0m8.5 0h0m6.5 1h0m4-1h0m9.5 0.5h0m2-4h0m8 3.5h0m4-1.5h0m4.5-1h0m15 3h0m4-4.5h0m5.5 2h0m5.5 3.5h0m0.5-3.5h0m13-1.5h0m2.5 4.5h0m2.5-1.5h0m2 2h0m9.5-1h0m-230.5 5.5h0m3.5-3h0m2.5 2h0m0-2.5h0m3.5 2h0m2-2.5h0m5.5 2h0m3.5 0h0m4-2h0m3 3.5h0m6.5 0.5h0m7.5-3.5h0m5 4h0m19.5-2h0m5.5-1.5h0m3-0.5h0m1 2.5h0m15.5-2h0m1 3h0m8.5-1h0m4-3h0m7 4.5h0m5-3h0m10-1h0m1 4h0m8-3.5h0m16 0.5h0m6.5 2h0m12-3h0m20 4.5h0m29-3.5h0m5-1h0m-235.5 9h0m12.5-0.5h0m4.5-2.5h0m2 4.5h0m5-4h0m3 4.5h0m3.5-0.5h0m17.5-4h0m5.5-1h0m4.5 6h0m7.5-5h0m10.5 1.5h0m2.5 2.5h0m11-0.5h0m13.5-1h0m12.5 0h0m0.5-3.5h0m7 3h0m9.5-1h0m0.5 2.5h0m6.5-1h0m2-2.5h0m33 2h0m2-3h0m2 2h0m2 3h0m1.5-2.5h0m3 3h0m-174 0.5h0m0.5 3h0m3 2h0m2-3h0m4-1h0m13 2h0m9.5 0.5h0m2.5 2h0m5.5-3.5h0m3-0.5h0m10.5 3.5h0m10-3.5h0m3.5 2h0m4.5 2h0m4-0.5h0m1-4.5h0m11 0h0m5 2.5h0m4.5 2.5h0m2.5-3h0m0.5 2.5h0m7 0.5h0m0.5-5h0m72.5 0.5h0m-180.5 5h0m3.5 2.5h0m1.5 2.5h0m7.5-1h0m11.5-3.5h0m9.5 4h0m6-4h0m9 5.5h0m15.5-1h0m3 0h0m8 0.5h0m10-0.5h0m3.5-4.5h0m3-0.5h0m2.5 5.5h0m0.5-4.5h0m5.5 1h0m3.5-1.5h0m1 2.5h0m2 2h0m5.5 0.5h0m4.5-4.5h0m5 1.5h0m2.5-1h0m2.5-1.5h0m5 3.5h0m-134 7.5h0m6.5-2.5h0m3-0.5h0m7.5-2h0m23.5 3.5h0m4 1.5h0m1-3.5h0m4 1.5h0m4.5 2h0m4-1.5h0m13.5-0.5h0m4.5 2.5h0m21-1h0m5.5-2.5h0m8 2.5h0m6.5-1.5h0m3.5 2h0m3-1h0m2-2.5h0m4.5-1h0m1 4h0m-129.5 4.5h0m9.5-3h0m8.5 2.5h0m7.5 2h0m7.5-0.5h0m4.5 0.5h0m4.5-2h0m3 2h0m2.5-3.5h0m3 1.5h0m5-0.5h0m8.5 1.5h0m3.5-3h0m0 3.5h0m5-1.5h0m10 2h0m3-1h0m8.5 0.5h0m4.5 2h0m8-4.5h0m11 4.5h0m9.5 0h0m-128.5 4h0m2.5-3.5h0m22 4h0m2.5-2h0m8.5 1h0m9-3.5h0m0.5 5.5h0m9.5-2h0m2.5-1h0m11.5 2h0m3 0.5h0m13-3.5h0m1.5 2.5h0m3-1h0m15-2h0m1 3.5h0m10-3.5h0m-119 9h0m3.5-0.5h0m9 2.5h0m6.5-1.5h0m2.5-3h0m9 0h0m1 4.5h0m6-5.5h0m5 2.5h0m3 0h0m12-1.5h0m7 4.5h0m1-6h0m0.5 3h0m3-2.5h0m5.5 4h0m6-2.5h0m15 1h0m17.5 3h0m8.5-5h0m3-0.5h0m10.5 5h0m2.5-3h0m2.5 3.5h0m1.5-3.5h0m6-2h0m-137.5 10.5h0m5-3.5h0m2.5-0.5h0m8.5-1h0m1 4.5h0m1.5-2.5h0m12 1h0m3 1h0m7.5-1.5h0m0 3h0m3-1.5h0m3-3.5h0m3.5-0.5h0m7.5 1h0m21.5 3.5h0m4.5 1h0m1.5-3h0m1.5 3.5h0m17.5-3h0m3.5-0.5h0m3-1h0m2 3.5h0m10-0.5h0m9-1.5h0m-127.5 7h0m2-2.5h0m4.5 1.5h0m4.5-1h0m32.5 1h0m8-2h0m6 0h0m7 3.5h0m2.5 0h0m1.5-3h0m5-0.5h0m4.5 4.5h0m0-4h0m6 2h0m1-2.5h0m3 1h0m4 3h0m1-4h0m8 1.5h0m4.5 1.5h0m0.5-3h0m4 2h0m1-3h0m0.5 6h0m11.5-3h0m2.5-2h0m-124 9h0m5 1.5h0m30-1h0m3 1h0m0.5-3h0m10.5 0h0m3 2.5h0m14-3h0m5 1h0m4.5 2.5h0m1.5-2.5h0m17.5 0h0m10-2h0m3 1.5h0m2.5 2.5h0m5-4.5h0m-130 8.5h0m16.5 2h0m2.5-2h0m18.5-3h0m3.5 5h0m12 1h0m4-4h0m9 1h0m10-2.5h0m2.5 2h0m2 3h0m2-4.5h0m0.5 3h0m3-2h0m4 1h0m4.5-0.5h0m0.5 3.5h0m31.5-1h0m2-4.5h0m-129.5 6.5h0m9 3h0m3-2h0m2 1.5h0m7 2h0m14.5-4.5h0m6.5 3h0m7.5 0h0m20.5 1.5h0m3-3.5h0m5-2h0m13 5.5h0m2-5h0m0.5 3h0m30-1h0m4.5 2h0m2-2.5h0m-117.5 4h0m11 4.5h0m13-3h0m5.5 4.5h0m18-6h0m1.5 2.5h0m20.5 0h0m3-2h0m3 1h0m37.5-0.5h0m-104.5 6h0m3.5 0h0m5.5 3h0m3.5 1.5h0m0.5-4.5h0m-5 5.5h0m4.5 3.5h0m4 1h0m3.5-2h0" stroke="#7c7a88" stroke-width="5.3"/><path d="M361.5 209.5h0m3.5-4.5h0m8.5 0h0m52.5 4h0m32.5-2h0m9.5 0h0m-105 4.5h0m10.5 4h0m2-5.5h0m4.5 4h0m27.5 0h0m26 0.5h0m28.5-3.5h0m7 1h0m-121.5 8.5h0m9.5-3.5h0m5 2.5h0m4-0.5h0m26.5-0.5h0m26.5 3h0m17.5-2.5h0m5.5-2.5h0m18.5 2h0m2.5-1.5h0m-99 5h0m2 4.5h0m74.5-1.5h0m18.5-1.5h0m5.5-1h0m5 0h0m0.5 4h0m-120 2h0m1 3.5h0m2.5-1.5h0m9.5 2h0m20.5 0.5h0m13.5 0h0m21-3.5h0m0 3.5h0m5.5-5h0m20 0.5h0m8 4h0m29.5 1h0m-142 6h0m20.5-2.5h0m6-2h0m25.5 0h0m7 4.5h0m11.5-5.5h0m27 3h0m3.5 2.5h0m27-2.5h0m9.5 1.5h0m-131 7h0m6.5 0h0m14-3h0m6 3h0m3.5-5h0m5.5 1.5h0m12 3h0m3-3.5h0m7.5-1.5h0m5.5 4.5h0m3 1h0m2-5h0m5.5 5.5h0m4-2.5h0m5.5-3h0m25.5 5.5h0m24-6h0m0.5 5h0m7 0h0m-142.5 2.5h0m19.5-1h0m0 4h0m20-2h0m12.5-2h0m28.5 4h0m14-3h0m2 4h0m2.5-5h0m12.5 2.5h0m2.5-0.5h0m15 3.5h0m-125 4h0m4-0.5h0m4-1h0m10 3h0m5-1h0m1.5-2.5h0m2.5 3h0m4.5-3.5h0m2 4h0m5-5h0m31 4h0m4.5-3.5h0m11.5 0.5h0m3.5 2h0m9-3h0m23 0.5h0m5.5 4h0m13.5-1h0m0.5-3h0m-138 6h0m5.5 1h0m3.5 3.5h0m29-4h0m20 2.5h0m17 0.5h0m7.5-4h0m3 1h0m10.5 2h0m3-1.5h0m13.5-0.5h0m3.5 3h0m15.5-3h0m-128 5.5h0m24 0h0m3.5 2h0m9 2.5h0m2-3.5h0m5.5 0h0m2.5 4h0m1-4.5h0m34 3.5h0m28.5-5h0m11 5.5h0m0.5-4h0m4 1h0m51 3h0m11 0h0m25 0h0m15.5-2h0m-230 4h0m6.5-0.5h0m7.5 3h0m4-1h0m16 2.5h0m10.5-4h0m10.5 1.5h0m4-1.5h0m15-1h0m10.5 3h0m8-3.5h0m1.5 4h0m14.5-2.5h0m14 4.5h0m6.5-1h0m1.5-2.5h0m28.5 2h0m5.5-3.5h0m6.5 3h0m3 0.5h0m7-3h0m2.5 1.5h0m0.5 2.5h0m14-1.5h0m16.5 1h0m8.5-1.5h0m-228 3h0m11 3.5h0m17-3h0m8.5 1h0m12.5 3h0m1-4h0m7 4h0m11-0.5h0m11.5-3.5h0m5.5 4.5h0m8.5-5h0m6 1.5h0m11.5 2.5h0m2.5-1.5h0m7.5-2h0m3.5 0h0m29 4h0m9-1h0m13.5-2.5h0m17.5 3.5h0m4.5-3h0m3.5 0h0m1 2.5h0m15-3h0m7 0.5h0m-216.5 6.5h0m3 0.5h0m3.5 2.5h0m4.5-0.5h0m27.5-0.5h0m19 0.5h0m7.5-0.5h0m6.5-1h0m4.5-1h0m9.5 1.5h0m2.5 0.5h0m5.5-2h0m8 0h0m26 0.5h0m0 2.5h0m42-3h0m31.5 2.5h0m-207 6.5h0m21-0.5h0m0-4.5h0m19 2.5h0m20.5 0.5h0m6 2h0m2-4h0m5 4.5h0m21-5h0m3 2.5h0m22-3.5h0m36 3h0m5 3h0m2-4h0m38 0.5h0m3 3h0m-206.5 1.5h0m13 1h0m12 0h0m8-1h0m6-1h0m25.5 0.5h0m12.5 4h0m5-2.5h0m76.5-1.5h0m0 3h0m15 2h0m3.5-4.5h0m4 1.5h0m20 0.5h0m16-1h0m0.5 3.5h0m-217 5.5h0m4.5-4h0m11 0.5h0m3.5 2h0m2.5 0.5h0m8.5-3.5h0m41.5 1h0m37 0.5h0m3.5 3.5h0m26.5-3.5h0m3.5 2.5h0m4.5-4h0m4 2.5h0m11.5 1.5h0m7.5-3.5h0m17 4h0m7-2.5h0m1.5-2.5h0m4 5h0m18-2h0m2 2.5h0m10.5-3h0m-224 5.5h0m11.5 1.5h0m107.5 2h0m15.5-1h0m3.5 0h0m4.5 1.5h0m28-5h0m34 0.5h0m16 3h0m-189 2h0m6 2h0m93 2.5h0m19-2.5h0m4 3h0m1.5-5h0m7.5 2.5h0m40-0.5h0m15.5-2h0m-88.5 9.5h0m2.5-1.5h0m3.5-2.5h0m0.5 3.5h0m3 0h0m20.5-2.5h0m21.5 1h0m2.5-0.5h0m-28.5 8h0m8-2h0m7.5 1.5h0m7.5-2.5h0m6.5 4.5h0m16.5-1h0m4 0h0m22-2h0m-68 7h0m6.5-2.5h0m19 1.5h0m4 4h0m13-1.5h0m37 0.5h0m-67 4h0m3-2.5h0m3.5 0.5h0m2.5 4.5h0m3.5-2.5h0m2-2h0m11.5 3.5h0m5-2.5h0m23.5-1h0m-69.5 8.5h0m2.5-3h0m8.5 1h0m20 3.5h0m9-4h0m24.5 3h0m3-1h0m9.5 0h0m6 2.5h0m-87 1h0m3.5 1h0m4.5 2h0m17-1.5h0m22 2h0m40.5 1h0m9.5-1h0m16.5-3h0m-87.5 7h0m10-1.5h0m4 1h0m26-0.5h0m27.5 0.5h0m79.5 2.5h0m-163.5 3.5h0m3-1h0m11 0h0m9 4.5h0m21 0.5h0m10-5h0m11.5 0h0m2.5 3.5h0m10-1h0m23.5 1.5h0m32-3.5h0m35 3h0m-170.5 6h0m15.5 1h0m8-2.5h0m7 3.5h0m3.5-0.5h0m23-1.5h0m4-1h0m11.5 0h0m1.5-3h0m11.5 1h0m4.5 2h0m31.5-1h0m1.5 3h0m32.5-1h0m8.5-0.5h0m1-2.5h0m4.5 2h0m2-2h0m-156.5 10.5h0m25-1h0m12 1h0m9.5 0h0m15.5-2.5h0m6.5 0h0m6 1.5h0m3-3h0m13-1h0m2.5 0.5h0m27 1h0m8 1.5h0m2 2h0m6-2.5h0m2.5 2h0m10-3h0m-170.5 6h0m5.5-2h0m16 6h0m7.5-2.5h0m13-1h0m7.5 0h0m29.5 1.5h0m13.5-2h0m3.5 2.5h0m13.5 0h0m26.5 1h0m19-4.5h0m3 4.5h0m-153 5h0m32-4h0m7 4h0m7-1.5h0m2.5-2.5h0m19.5 5.5h0m44.5-4.5h0m20 2h0m5.5 1.5h0m3.5 0h0m4-4h0m8 3.5h0m-157.5 4h0m37.5 2.5h0m41 0h0m11.5-5h0m6 2.5h0m17 2.5h0m9-0.5h0m10.5 0.5h0m4 1h0m3-0.5h0m6.5-1h0m3-1.5h0m8-1h0m6.5 0.5h0m5 1.5h0m12-1h0m-167 3.5h0m7.5 3h0m3.5 1.5h0m7-2h0m2 3h0m7.5-3.5h0m14 0.5h0m1 3h0m19-6h0m31.5 3h0m18.5-2.5h0m18 0.5h0m26 1h0m14-1.5h0m1 5h0m-97.5 5h0m9-3h0m11.5 1.5h0m16.5-2.5h0m2 4.5h0m22-4h0m5 1.5h0m12.5 0.5h0m0 3h0m18-3h0m6 2h0m-159 6.5h0m60-5h0m22.5 2h0m3.5-2h0m11 2.5h0m3-0.5h0m3 0.5h0m12.5-2h0m12.5 4.5h0m13.5-3h0m-134.5 4h0m43 3h0m2 2h0m3.5-1h0m6-0.5h0m8-2.5h0m12.5 2h0m9 1h0m3-2h0m44.5 1.5h0m-77.5 3h0m3 0h0m16 1h0m25-1h0m0.5 3.5h0m5.5-2.5h0m11.5 2.5h0m12-1h0m-79.5 3.5h0m15 1h0m18 0.5h0m19-1h0m2 2h0m11 0.5h0m9 0.5h0m3.5-3.5h0m3-0.5h0m-73 7h0m48.5 2h0m2-2.5h0m1.5 4h0m2.5-3h0m5.5 1.5h0m2 1.5h0m-61.5 6h0m30.5 0h0m9-3h0m13.5 1.5h0m3-2h0m4.5 1h0m-78.5 6.5h0m32 1.5h0m5-0.5h0m16.5 2h0m3-5h0m7.5 1h0m10 1.5h0m6.5-1h0m1.5 2.5h0m2.5-2.5h0m4.5 0.5h0m-97 5h0m3-1h0m6.5 1h0m2-2h0m3.5 4.5h0m24.5-0.5h0m11 0h0m2.5-1h0m23 0h0m-87 7.5h0m17.5-2h0m8.5 2.5h0m16-5h0m19.5 5.5h0m-50 4h0m0.5-3.5h0m2.5 5h0m19-0.5h0m12 0h0m12-0.5h0m3-2h0m13-2h0m20.5 2h0m-194.5 9.5h0m17-5.5h0m3 4h0m1.5-3h0m62.5 4h0m7-4.5h0m7.5 0.5h0m3 2.5h0m17-3h0m40 0h0m3.5 3.5h0m9.5-2h0m4 4h0m4-1h0m-156.5 2.5h0m3 4.5h0m63.5-0.5h0m21-1h0m2-2h0m2.5-0.5h0m5 3h0m20-3h0m6.5 3h0m0.5-3h0m16-1.5h0m7.5 2h0m-190.5 9.5h0m12-1.5h0m7-2h0m9 2h0m31 0.5h0m2-4h0m6.5 4.5h0m0-5.5h0m2 3h0m23.5 1h0m4.5-2h0m36 2h0m15 1h0m4-1h0m28-2.5h0m19-1.5h0m5.5 2h0m19-1.5h0m2.5 4.5h0m4.5 0.5h0m-215 3.5h0m3.5-0.5h0m2-2.5h0m5.5 2h0m3.5 0h0m4-2h0m3 3.5h0m6.5 0.5h0m7.5-3.5h0m5 4h0m28-4h0m17.5 3.5h0m8.5-1h0m4-3h0m7 4.5h0m5-3h0m11 3h0m91.5-3h0m5-1h0m-216.5 10.5h0m5-4h0m6.5 4h0m17.5-4h0m10 5h0m7.5-5h0m24 3.5h0m13.5-1h0m12.5 0h0m0.5-3.5h0m7 3h0m9.5-1h0m0.5 2.5h0m43.5-4.5h0m2 2h0m3.5 0.5h0m-170.5 6.5h0m9-2h0m13 2h0m12 2.5h0m5.5-3.5h0m27 1.5h0m8.5 1.5h0m1-4.5h0m11 0h0m5 2.5h0m4.5 2.5h0m2.5-3h0m0.5 2.5h0m7 0.5h0m0.5-5h0m-104.5 8h0m1.5 2.5h0m19-4.5h0m67.5-0.5h0m8.5 2h0m4.5 1h0m7.5 2.5h0m4.5-4.5h0m5 1.5h0m2.5-1h0m7.5 2h0m-134 7.5h0m45.5-3.5h0m4 1.5h0m8.5 0.5h0m18 2h0m26.5-3.5h0m14.5 1h0m13-2.5h0m-119 5.5h0m8.5 2.5h0m7.5 2h0m7.5-0.5h0m12 0.5h0m2.5-3.5h0m16.5 2.5h0m3.5-3h0m5 2h0m13 1h0m8.5 0.5h0m4.5 2h0m8-4.5h0m20.5 4.5h0m-128.5 4h0m2.5-3.5h0m22 4h0m30-1h0m2.5-1h0m14.5 2.5h0m32.5-4h0m11 0h0m-119 9h0m19 0.5h0m12.5 1.5h0m11-3h0m15-1.5h0m7 4.5h0m1-6h0m0.5 3h0m3-2.5h0m5.5 4h0m6-2.5h0m15 1h0m17.5 3h0m8.5-5h0m3-0.5h0m10.5 5h0m-120 2h0m2.5-0.5h0m8.5-1h0m1 4.5h0m1.5-2.5h0m22.5 0.5h0m0 3h0m6-5h0m3.5-0.5h0m7.5 1h0m26 4.5h0m24-3h0m3-1h0m21 1.5h0m-125.5 4.5h0m4.5 1.5h0m4.5-1h0m32.5 1h0m14-2h0m7 3.5h0m4-3h0m9.5 4h0m0-4h0m7-0.5h0m7 4h0m13.5-1h0m4.5-1h0m1-3h0m12 3h0m2.5-2h0m-124 9h0m35 0.5h0m3.5-2h0m27.5-0.5h0m5 1h0m4.5 2.5h0m1.5-2.5h0m27.5-2h0m3 1.5h0m2.5 2.5h0m-106 4h0m18.5-3h0m3.5 5h0m25-2h0m10-2.5h0m2.5 2h0m2 3h0m2.5-1.5h0m7-1h0m36.5 2h0m2-4.5h0m-120.5 9.5h0m5-0.5h0m21.5-2.5h0m14 3h0m-37 2h0m24 1.5h0m5.5 4.5h0m19.5-3.5h0m23.5-2h0m3 1h0m-54.5 10h0m-4.5 1h0m4.5 3.5h0m7.5-1h0" stroke="#e7e8e8" stroke-width="4.2"/><path d="M351 214h0m3 0h0m3.5-4h0m61.5 6h0m9-1.5h0m-39.5 4h0m4.5 3h0m29-1h0m23-3.5h0m1 3.5h0m3.5 0h0m-99.5 5h0m28-0.5h0m19.5 1.5h0m6-3.5h0m5 1h0m2.5 3.5h0m-65.5 1h0m32.5 2.5h0m11.5-2h0m10.5 0.5h0m2 2h0m13 1.5h0m25.5 0h0m3 0h0m4.5-3.5h0m-115 8.5h0m23.5-3.5h0m28 5.5h0m16.5-2h0m3.5-2h0m9 0h0m2.5-0.5h0m4.5 1h0m52.5-1h0m10 3.5h0m-128 6.5h0m18.5-3h0m38.5-0.5h0m14 2.5h0m31.5 1h0m8-4.5h0m10 1.5h0m9-0.5h0m-133.5 7.5h0m18.5-2.5h0m26 4.5h0m16.5-3h0m10.5-1.5h0m46.5 3h0m1-3h0m19.5-0.5h0m-141.5 6h0m30 5.5h0m47-3.5h0m25 3.5h0m0.5-5.5h0m20.5 2.5h0m9.5-2.5h0m-109.5 6.5h0m21.5 3h0m54.5-4h0m4 4.5h0m-46 6.5h0m5.5-4h0m13.5 2h0m7.5-2h0m15 2.5h0m68.5 0.5h0m7-3.5h0m-135 8h0m45-2h0m15.5 0.5h0m15.5 0.5h0m31.5 1h0m19-1h0m13 0h0m4.5 3h0m16-3h0m30 0h0m-184 7.5h0m7 1.5h0m8.5 0h0m23.5-1.5h0m39.5 2.5h0m4-3h0m15.5 2.5h0m22.5 0h0m21-2h0m17-2h0m4.5 1h0m-194 6.5h0m10.5-1.5h0m12.5 4.5h0m5.5-4h0m5 1h0m12 0.5h0m17.5-2.5h0m39 0h0m8 5.5h0m5.5-1.5h0m61-1.5h0m-186.5 6h0m5.5 1h0m46.5-2.5h0m49.5 0h0m54.5 2h0m36-2h0m-193 7h0m37.5 1.5h0m66.5 0.5h0m3 0h0m101.5-2.5h0m-206 7h0m5-1.5h0m45 0h0m86.5 1h0m11.5 3h0m34-4h0m20 1.5h0m11.5-1h0m-49.5 5h0m58 1.5h0m-203.5 6.5h0m101-0.5h0m14.5 0h0m47.5 2h0m21-4h0m6 2h0m-68 6h0m47.5 2.5h0m1-2.5h0m-39.5 5h0m8.5-0.5h0m53.5 9h0m-57 6.5h0m9.5 0h0m10.5-0.5h0m40-0.5h0m9.5 2.5h0m-56 5h0m2-2h0m20.5 0h0m10-2.5h0m12 4.5h0m27.5-1.5h0m-78.5 8.5h0m0-5.5h0m36 0h0m24 5h0m14.5-3h0m2 7h0m2.5 1.5h0m35.5-1.5h0m-77 5h0m3-0.5h0m49.5-2h0m21.5 2.5h0m6 3h0m16.5 0.5h0m1.5-4h0m6 4h0m15-5.5h0m-154 9.5h0m6.5 1.5h0m19.5-3h0m21.5 2h0m11.5 0.5h0m6-4.5h0m6.5 3h0m18.5-2h0m51.5 2.5h0m5 0.5h0m0.5-3h0m-157 8.5h0m18-1h0m13.5-1h0m46.5 2.5h0m25.5-0.5h0m11.5 0h0m23.5 1h0m-129.5 7h0m3.5-1.5h0m30-0.5h0m20-3.5h0m37 4.5h0m-101 2.5h0m9.5 2h0m36.5 1h0m3 1.5h0m19.5-1h0m4.5-2h0m7 2.5h0m23.5-4.5h0m21 2h0m48 1.5h0m-63.5 6h0m43-2h0m13-2h0m20 4.5h0m-179.5 4.5h0m43.5 2.5h0m63.5-2.5h0m24 0h0m7 1.5h0m31.5 0h0m-165.5 2.5h0m4.5 4.5h0m0-5h0m3.5 4.5h0m7.5-0.5h0m9.5-2h0m6-2.5h0m0.5 3.5h0m74.5-0.5h0m16.5 2.5h0m24-2h0m10.5-3.5h0m12 1h0m-83.5 7.5h0m47.5-1h0m7.5 2.5h0m8-4h0m8 3.5h0m-80 2h0m-3 8.5h0m40-2h0m33 4.5h0m14-4h0m-26 9.5h0m-11.5 6.5h0m26-2.5h0m-63 7.5h0m23-1h0m46-0.5h0m-75 9.5h0m2-3.5h0m41.5 2h0m4-0.5h0m28.5 1h0m-94 4.5h0m19.5-1h0m12 1.5h0m10-2h0m16.5 1h0m10.5-2h0m-63.5 8.5h0m5-1.5h0m54.5-1.5h0m-63.5 8.5h0m50.5 1.5h0m19.5 0h0m11.5-2.5h0m-188.5 8.5h0m16 1.5h0m71.5-0.5h0m11.5-0.5h0m45.5-5h0m21 3h0m-175 8h0m83.5-2h0m58.5-2.5h0m15.5 2.5h0m10 2h0m8.5-0.5h0m-189.5 6h0m3.5-4h0m13 4h0m12-4h0m9.5 2h0m3 3.5h0m0.5-5h0m65.5 1h0m7-1h0m40.5 3.5h0m2-4h0m8 3.5h0m57-0.5h0m11.5 1h0m-230.5 5.5h0m6-3.5h0m69.5 2.5h0m15.5-2h0m35.5-0.5h0m9 0.5h0m16 0.5h0m6.5 2h0m-169.5 6h0m12.5-0.5h0m63.5-0.5h0m104.5 2.5h0m-169.5 1h0m32 3.5h0m7 3h0m45.5 4.5h0m9.5-4h0m12 4h0m20-5h0m-119.5 8h0m31 1.5h0m13.5 1.5h0m43-0.5h0m13.5 0h0m10 0.5h0m10.5-0.5h0m-129.5 4.5h0m50.5-0.5h0m5-0.5h0m62 4h0m-33 4h0m-86.5 5.5h0m18-2h0m16-1h0m100 2h0m2.5 3.5h0m-86 4h0m35.5 0.5h0m6-2h0m27.5 2.5h0m-41.5 5.5h0m17-1h0m22-2.5h0m-99.5 10.5h0m47-0.5h0m42.5-2h0m-109.5 6h0m16.5 2h0m36.5 1h0m4-4h0m25.5-1h0m12 1.5h0m0.5 3.5h0m-96 1h0m21 4.5h0m49 0h0m3-3.5h0m5-2h0m15 0.5h0m0.5 3h0m-70 7h0m58.5-2h0m43.5-1.5h0m-104.5 6h0m3.5 0h0m5.5 3h0m7.5 7h0" stroke="#9090e2" stroke-width="4.6"/><path d="M363 207h0m7 3h0m50.5 2.5h0m34.5 3h0m3.5-2.5h0m-81.5 8.5h0m35.5 0h0m10.5-4.5h0m19.5 3.5h0m-70 6.5h0m3-2.5h0m50-0.5h0m-54 7h0m61 1.5h0m1.5-4.5h0m2.5 1.5h0m18.5 3h0m9 1h0m5-3h0m-97.5 4.5h0m67.5 1h0m-38 7h0m-61 3h0m27.5 3.5h0m36-1h0m-24 11.5h0m0.5 3h0m109.5-3.5h0m-128.5 5.5h0m12 4h0m14.5-4h0m6.5 4h0m40-2.5h0m4.5 3h0m13-2.5h0m5.5-0.5h0m32.5 0h0m2.5 0.5h0m27-2.5h0m0 4.5h0m-126.5 2.5h0m100.5 3.5h0m4 1h0m40.5-3h0m20.5-1.5h0m-159 5.5h0m4.5 1.5h0m8.5-0.5h0m113-1h0m-103 10h0m65.5-3.5h0m30.5-1h0m-105.5 9.5h0m8-2h0m68-1.5h0m38 0.5h0m33.5 3.5h0m-154.5 6h0m72.5-2.5h0m2.5 2.5h0m58.5-3h0m26.5-0.5h0m-182.5 10.5h0m108-0.5h0m45-0.5h0m5.5 0.5h0m16.5 0h0m0.5-4.5h0m-169 7.5h0m72-1.5h0m12.5 5h0m9.5 0h0m8.5-3.5h0m18 2h0m37.5-3h0m3-0.5h0m-71.5 8.5h0m34 3h0m3-5h0m30.5 1.5h0m35.5 2.5h0m-69 4.5h0m8.5-2.5h0m39 9h0m16-4h0m-63 9h0m29.5 2h0m2.5-1.5h0m5.5-1.5h0m11.5-1.5h0m3.5 0.5h0m13 3.5h0m-66.5 4h0m2.5 3h0m47-0.5h0m-40 1.5h0m6.5 0.5h0m32.5 3.5h0m-14.5 7h0m-34.5 5h0m37-2.5h0m6.5-1.5h0m14 4h0m13.5-2.5h0m20 2h0m-61.5 2h0m24 5h0m38 0h0m2.5 0.5h0m3-5.5h0m36.5 3.5h0m13.5 0h0m-90.5 2.5h0m12.5 5.5h0m97.5-2h0m1.5 2h0m-135.5 3h0m12.5 2h0m16-2h0m7 1h0m63.5-1h0m15 1h0m9-2.5h0m-126 9h0m75-1h0m3.5-1.5h0m65 3.5h0m-140 6.5h0m19.5-0.5h0m11.5-4h0m39.5 1h0m7 3.5h0m50-3h0m9.5 3h0m-162.5 4h0m16 1.5h0m35.5-3.5h0m20.5-1h0m28.5 2h0m60.5-0.5h0m-149.5 6.5h0m27-1h0m34.5 2h0m-57.5 7h0m9 1h0m54-3.5h0m11 0h0m27.5 1h0m7-2.5h0m37.5 2.5h0m-138 6h0m59 2.5h0m-7 1h0m30.5 1h0m7.5-1.5h0m26 5h0m7-5h0m-19.5 12h0m2-6h0m7.5 2h0m9.5-0.5h0m0 3.5h0m-65.5 2h0m21 1h0m10.5 7.5h0m10.5 0h0m19-3h0m6.5 5h0m-60 6h0m33.5 0h0m-63 4.5h0m-3 6.5h0m44.5 0h0m21-0.5h0m3-2.5h0m8 1.5h0m-74.5 9h0m18.5-3.5h0m10 0.5h0m42.5 2h0m0.5-4.5h0m-88 10.5h0m43.5-0.5h0m9.5-4.5h0m44 4h0m-183 5h0m102.5-1h0m71-0.5h0m-181.5 9.5h0m7.5-0.5h0m80 0h0m10.5-3.5h0m51.5 2.5h0m26-1h0m19.5 1.5h0m-150 2h0m71.5 4h0m34-1.5h0m19.5 2h0m15 1h0m0.5-3.5h0m-197.5 5h0m62.5 1.5h0m5.5-1.5h0m98.5-0.5h0m20 4.5h0m-184.5 1.5h0m10 5h0m26.5-5.5h0m25 5h0m61-1.5h0m2-2.5h0m33 2h0m10.5 2.5h0m-170.5 5.5h0m2-3h0m37.5-0.5h0m10.5 3.5h0m10-3.5h0m8 4h0m108.5-4.5h0m-180.5 5h0m12.5 4h0m21 0.5h0m15 1.5h0m15.5-1h0m3 0h0m8 0.5h0m13.5-5h0m5.5 5h0m9.5-5h0m-99.5 8h0m10.5-2.5h0m27.5 5h0m27-2h0m52 1h0m2-2.5h0m-86.5 9h0m4.5-2h0m25.5 1.5h0m15 0.5h0m-57 4h0m8.5 1h0m9-3.5h0m0.5 5.5h0m23.5-1h0m16-3h0m4.5 1.5h0m16 1.5h0m-96.5 7.5h0m18-4.5h0m15 1.5h0m102-2.5h0m-137.5 10.5h0m30.5-2h0m3 1h0m53.5 2h0m17.5-3h0m18.5 1.5h0m-118.5 5.5h0m51.5-3h0m22 0h0m14.5 1h0m5-1h0m8 1.5h0m10.5 3.5h0m-72 5.5h0m11-3h0m66-2h0m-44 7.5h0m-75 6h0m30 2h0m49 1.5h0m32.5-3h0m4.5 2h0m2-2.5h0m-70 4h0m-26 7h0" stroke="#cc1010" stroke-width="4"/><path d="M469 233.5h0m-99.5 68h0m154.5 60h0m8.5 13h0m0.5 18h0m110 16h0m-58 122h0" stroke="#d0a830" stroke-width="4.5"/><path d="M412 226.5h0M569 328.5h0M660.5 431.5h0M667 442h0M655 428h0" stroke="#08080c" stroke-width="4.2"/></g><defs><filter id="bl" x="-5%" y="-5%" width="110%" height="110%"><feGaussianBlur stdDeviation="0.75"/></filter></defs></svg>
<div class="pg ybig" style="left:103px;top:285.8px;font-size:25px;letter-spacing:0.3px">Sphere VDW</div>
<div class="pg ybig" style="left:120.3px;top:336px;font-size:22.8px" dir="rtl">מנפח כל אטום</div>
<div class="pg ybig" style="left:127px;top:365.3px;font-size:23px" dir="rtl">לפי רדיוס ה-</div>
<div class="pg ybig" style="left:165.5px;top:392.1px;font-size:22.6px;line-height:30px">שלו<span style="font-size:25px">VDW</span></div>
</body></html>
